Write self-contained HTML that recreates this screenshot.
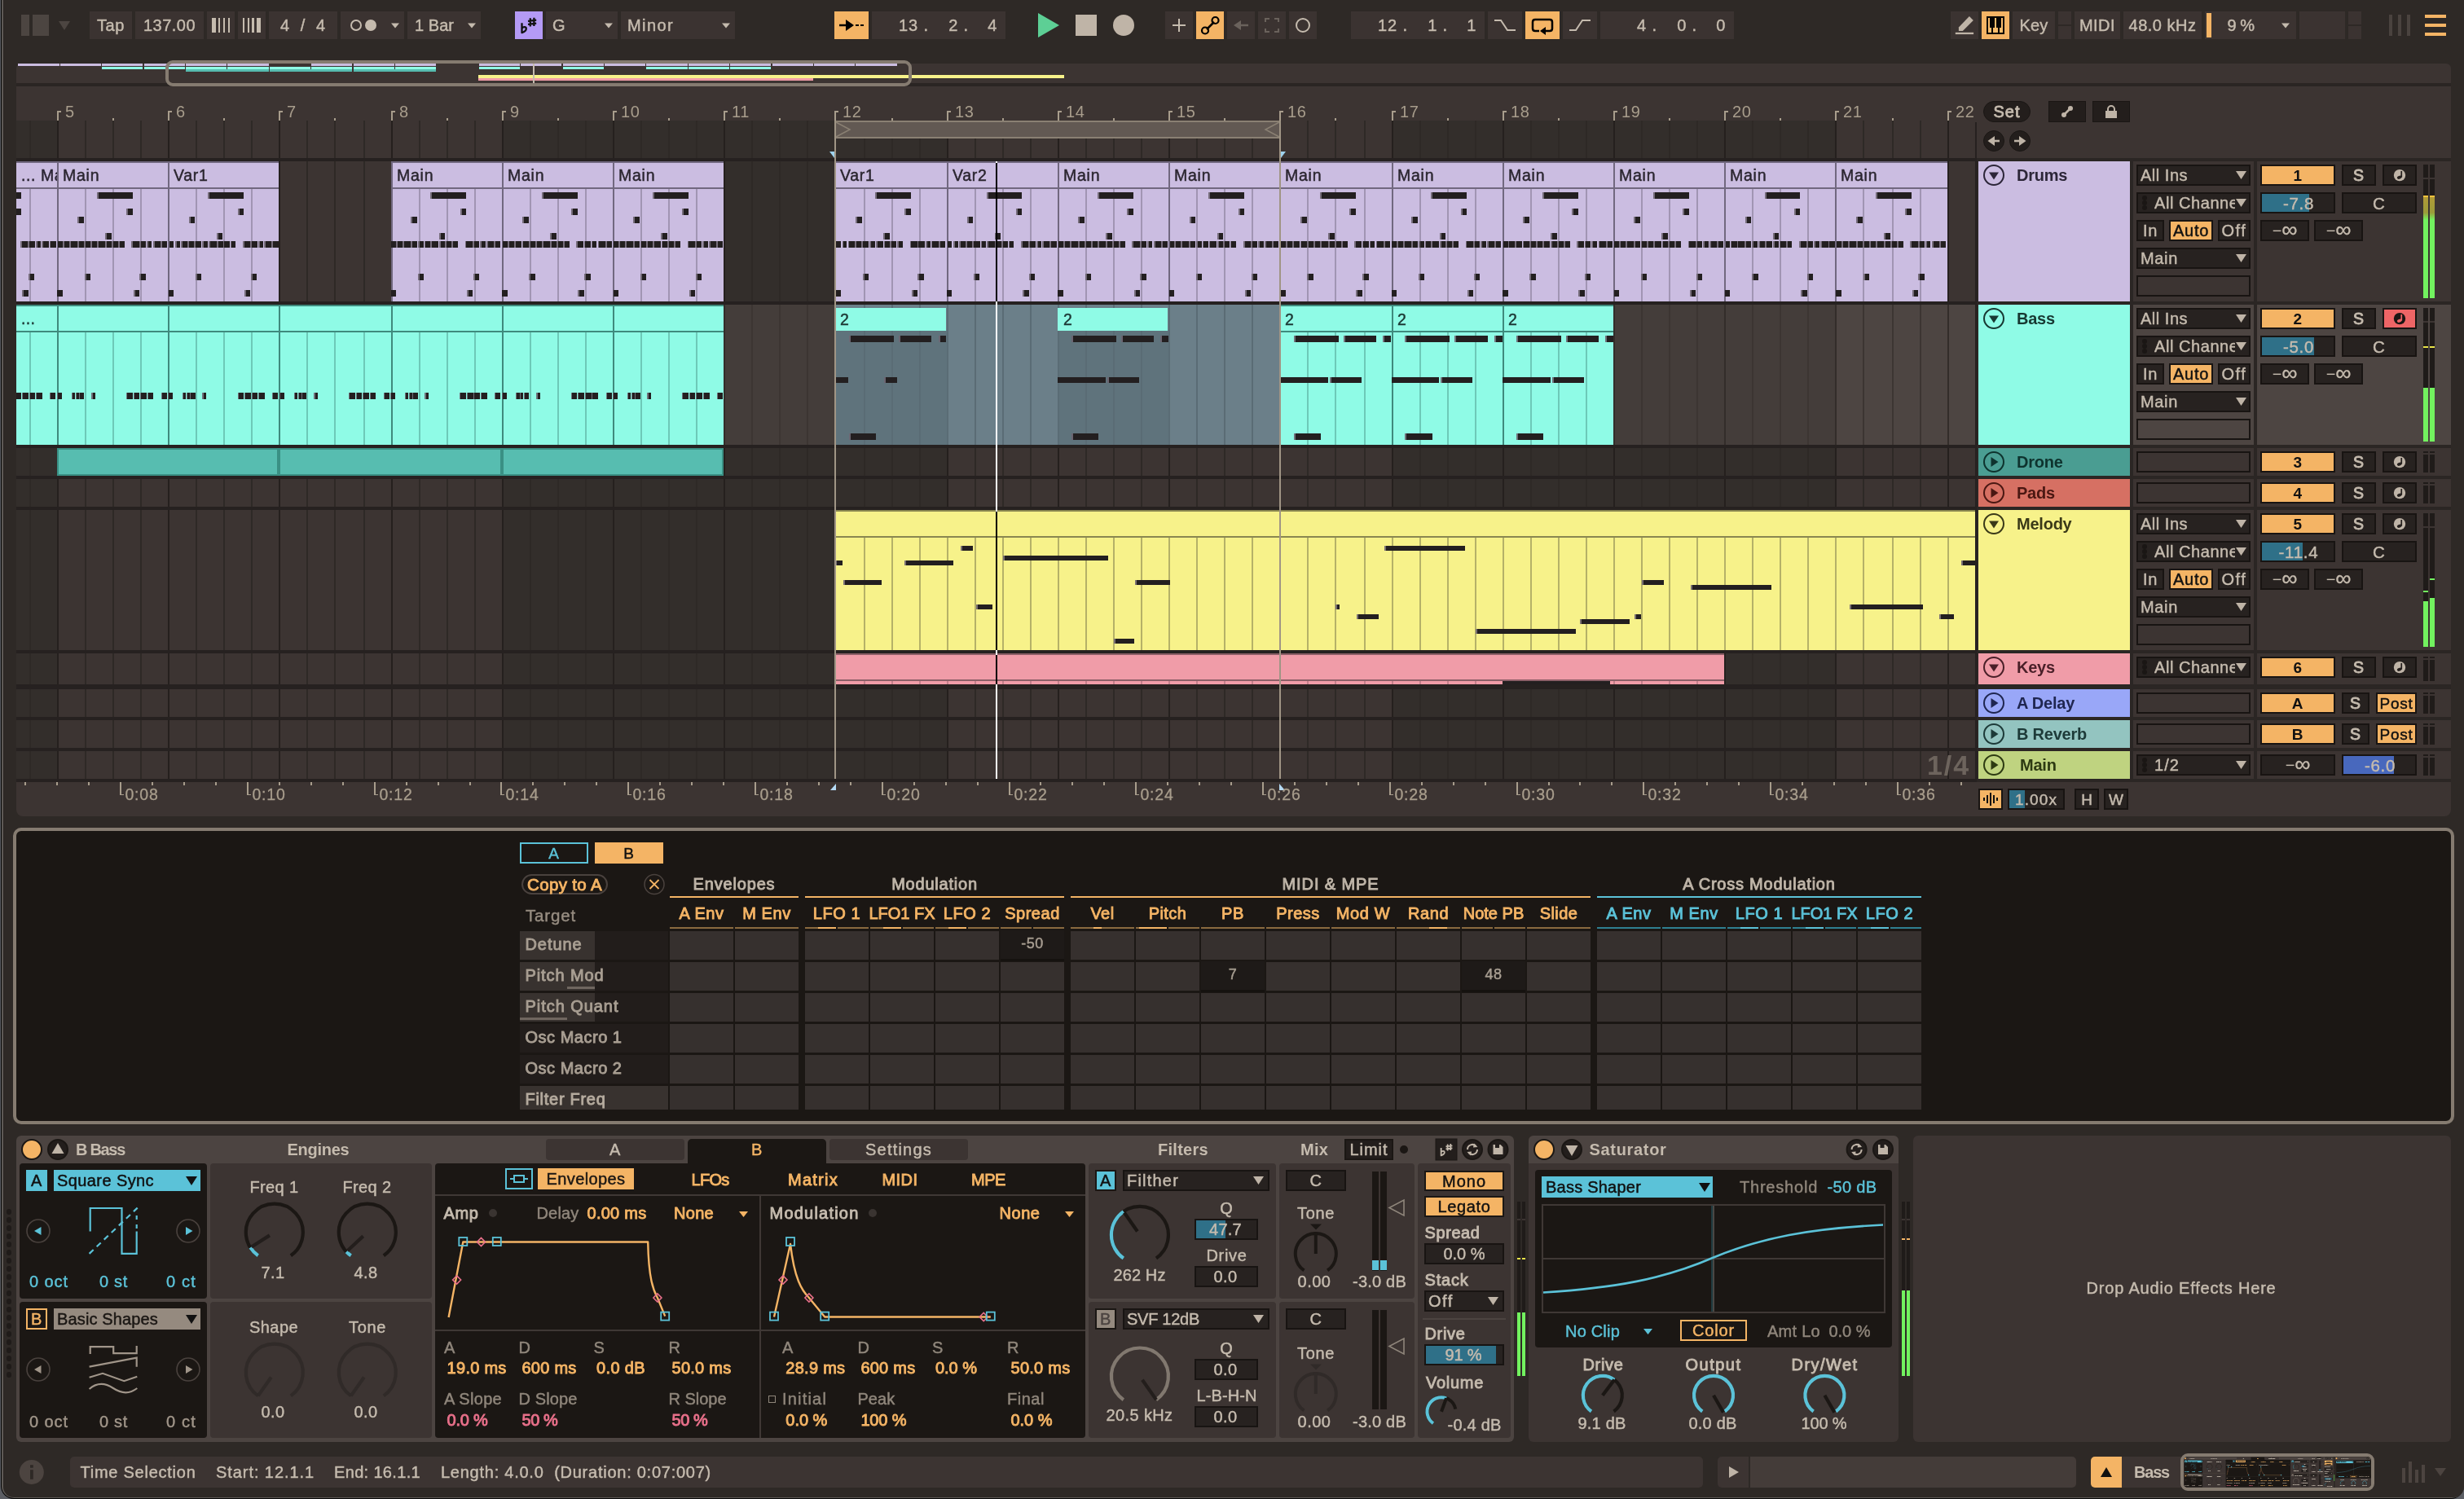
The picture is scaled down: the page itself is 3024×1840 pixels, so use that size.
<!DOCTYPE html><html><head><meta charset="utf-8"><title>Live</title><style>
html,body{margin:0;padding:0;background:#5c5e64;}
body{width:3024px;height:1840px;overflow:hidden;position:relative;font-family:"Liberation Sans",sans-serif;}
div,svg{position:absolute;box-sizing:border-box;}
.t{white-space:pre;}
#r{left:0;top:0;width:3024px;height:1840px;will-change:transform;}
</style></head><body><div id="r">
<div style="left:1px;top:0px;width:3023px;height:1840px;background:#060606;border-radius:0 0 16px 16px;"></div>
<div style="left:2px;top:0px;width:3022px;height:1839px;background:#5e5955;border-radius:0 0 15px 15px;"></div>
<div style="left:4px;top:0px;width:3020px;height:1838px;background:#2e2926;border-radius:0 0 13px 13px;"></div>
<div style="left:26px;top:18px;width:10px;height:26px;background:#4c4541;"></div>
<div style="left:40px;top:18px;width:20px;height:26px;background:#4c4541;"></div>
<svg style="left:70px;top:22px" width="20" height="18" viewBox="0 0 20 18" >
<path d="M2 4 L16 4 L9 15 Z" fill="#4c4541"/>
</svg>
<div style="left:110px;top:14px;width:52px;height:34px;background:#3b3331;"></div>
<div class="t" style="left:119px;top:18px;font-size:20px;line-height:26px;color:#c5bbae;letter-spacing:0.59px;-webkit-text-stroke:0.45px #c5bbae;">Tap</div>
<div style="left:166px;top:14px;width:84px;height:34px;background:#3b3331;"></div>
<div class="t" style="left:176px;top:18px;font-size:20px;line-height:26px;color:#c5bbae;letter-spacing:0.47px;-webkit-text-stroke:0.45px #c5bbae;">137.00</div>
<div style="left:254px;top:14px;width:34px;height:34px;background:#3b3331;"></div>
<svg style="left:254px;top:14px" width="34" height="34" viewBox="0 0 34 34" shape-rendering="crispEdges">
<path d="M6 8h5v18h-5z M14 8h2v18h-2z M20 8h2v18h-2z M26 8h2v18h-2z" fill="#c5bbae"/>
</svg>
<div style="left:292px;top:14px;width:34px;height:34px;background:#3b3331;"></div>
<svg style="left:292px;top:14px" width="34" height="34" viewBox="0 0 34 34" shape-rendering="crispEdges">
<path d="M6 8h2v18h-2z M12 8h2v18h-2z M17 8h3v18h-3z M23 8h5v18h-5z" fill="#c5bbae"/>
</svg>
<div style="left:330px;top:14px;width:84px;height:34px;background:#3b3331;"></div>
<div class="t" style="left:344px;top:18px;font-size:20px;line-height:26px;color:#c5bbae;letter-spacing:0.85px;-webkit-text-stroke:0.45px #c5bbae;">4  /  4</div>
<div style="left:418px;top:14px;width:78px;height:34px;background:#3b3331;"></div>
<svg style="left:418px;top:14px" width="78" height="34" viewBox="0 0 78 34" >
<circle cx="19" cy="17" r="6" fill="none" stroke="#c5bbae" stroke-width="2"/><circle cx="37" cy="17" r="7" fill="#c5bbae"/><path d="M62 14.5h10l-5 6z" fill="#c5bbae"/>
</svg>
<div style="left:500px;top:14px;width:90px;height:34px;background:#3b3331;"></div>
<div class="t" style="left:509px;top:18px;font-size:20px;line-height:26px;color:#c5bbae;letter-spacing:0.04px;-webkit-text-stroke:0.45px #c5bbae;">1 Bar</div>
<svg style="left:570px;top:14px" width="20" height="34" viewBox="0 0 20 34" >
<path d="M4 14.5h10l-5 6z" fill="#c5bbae"/>
</svg>
<div style="left:632px;top:14px;width:34px;height:34px;background:#b49af5;"></div>
<svg style="left:632px;top:14px" width="34" height="34" viewBox="0 0 34 34" >
<g transform="scale(1)" fill="none" stroke="#111" stroke-linecap="butt">
<path d="M8.500 14.200V26.200C11 25.200 14 23 13.800 20.800C13.500 18.400 10 18.800 8.500 20.800" stroke-width="2.300" stroke-linejoin="round"/>
<path d="M18.800 8.200v10.300M23.400 7.800v10.300M16 11.900l10.200-1.200M16 15.900l10.200-1.200" stroke-width="2.300"/>
</g>
</svg>
<div style="left:670px;top:14px;width:88px;height:34px;background:#3b3331;"></div>
<div class="t" style="left:678px;top:18px;font-size:20px;line-height:26px;color:#c5bbae;letter-spacing:-0.56px;-webkit-text-stroke:0.45px #c5bbae;">G</div>
<svg style="left:738px;top:14px" width="20" height="34" viewBox="0 0 20 34" >
<path d="M4 14.5h10l-5 6z" fill="#c5bbae"/>
</svg>
<div style="left:762px;top:14px;width:140px;height:34px;background:#3b3331;"></div>
<div class="t" style="left:770px;top:18px;font-size:20px;line-height:26px;color:#c5bbae;letter-spacing:1.4px;-webkit-text-stroke:0.45px #c5bbae;">Minor</div>
<svg style="left:882px;top:14px" width="20" height="34" viewBox="0 0 20 34" >
<path d="M4 14.5h10l-5 6z" fill="#c5bbae"/>
</svg>
<div style="left:1024px;top:14px;width:42px;height:34px;background:#f4b465;"></div>
<svg style="left:1024px;top:14px" width="42" height="34" viewBox="0 0 42 34" >
<path d="M6 17h16" stroke="#000" stroke-width="2.5"/><path d="M14 10l10 7l-10 7z" fill="#000"/><path d="M26 17h4M32 17h4" stroke="#000" stroke-width="2"/>
</svg>
<div style="left:1070px;top:14px;width:164px;height:34px;background:#3b3331;"></div>
<div class="t" style="left:1212.32px;top:18px;font-size:20px;line-height:26px;color:#c5bbae;letter-spacing:0.56px;-webkit-text-stroke:0.45px #c5bbae;">4</div>
<div class="t" style="left:1182.44px;top:18px;font-size:20px;line-height:26px;color:#c5bbae;-webkit-text-stroke:0.45px #c5bbae;">.</div>
<div class="t" style="left:1164.32px;top:18px;font-size:20px;line-height:26px;color:#c5bbae;letter-spacing:0.56px;-webkit-text-stroke:0.45px #c5bbae;">2</div>
<div class="t" style="left:1133.44px;top:18px;font-size:20px;line-height:26px;color:#c5bbae;-webkit-text-stroke:0.45px #c5bbae;">.</div>
<div class="t" style="left:1102.98px;top:18px;font-size:20px;line-height:26px;color:#c5bbae;letter-spacing:0.89px;-webkit-text-stroke:0.45px #c5bbae;">13</div>
<svg style="left:1270px;top:14px" width="130" height="34" viewBox="0 0 130 34" >
<path d="M4 2 L30 17 L4 32 Z" fill="#5dcf95"/>
<rect x="50" y="4" width="26" height="26" fill="#bfb4a7"/>
<circle cx="109" cy="17" r="13" fill="#bfb4a7"/>
</svg>
<div style="left:1430px;top:14px;width:34px;height:34px;background:#3b3331;"></div>
<svg style="left:1430px;top:14px" width="34" height="34" viewBox="0 0 34 34" >
<path d="M17 9v16M9 17h16" stroke="#c5bbae" stroke-width="2" fill="none"/>
</svg>
<div style="left:1468px;top:14px;width:34px;height:34px;background:#f4b465;"></div>
<svg style="left:1468px;top:14px" width="34" height="34" viewBox="0 0 34 34" >
<path d="M13 22L22 13" stroke="#000" stroke-width="2.5"/><circle cx="11" cy="23.5" r="4" fill="none" stroke="#000" stroke-width="2.2"/><circle cx="23.5" cy="11" r="4" fill="none" stroke="#000" stroke-width="2.2"/>
</svg>
<div style="left:1506px;top:14px;width:34px;height:34px;background:#3b3331;"></div>
<svg style="left:1506px;top:14px" width="34" height="34" viewBox="0 0 34 34" >
<path d="M12 17h14" stroke="#6a625c" stroke-width="2.5"/><path d="M8 17l9-6v12z" fill="#6a625c"/>
</svg>
<div style="left:1544px;top:14px;width:34px;height:34px;background:#3b3331;"></div>
<svg style="left:1544px;top:14px" width="34" height="34" viewBox="0 0 34 34" >
<path d="M9 13v-4h5M20 9h5v4M25 21v4h-5M14 25h-5v-4" stroke="#6a625c" stroke-width="2" fill="none"/>
</svg>
<div style="left:1582px;top:14px;width:34px;height:34px;background:#3b3331;"></div>
<svg style="left:1582px;top:14px" width="34" height="34" viewBox="0 0 34 34" >
<circle cx="17" cy="17" r="8" fill="none" stroke="#c5bbae" stroke-width="2"/>
</svg>
<div style="left:1658px;top:14px;width:164px;height:34px;background:#3b3331;"></div>
<div class="t" style="left:1800.32px;top:18px;font-size:20px;line-height:26px;color:#c5bbae;letter-spacing:0.56px;-webkit-text-stroke:0.45px #c5bbae;">1</div>
<div class="t" style="left:1770.44px;top:18px;font-size:20px;line-height:26px;color:#c5bbae;-webkit-text-stroke:0.45px #c5bbae;">.</div>
<div class="t" style="left:1752.32px;top:18px;font-size:20px;line-height:26px;color:#c5bbae;letter-spacing:0.56px;-webkit-text-stroke:0.45px #c5bbae;">1</div>
<div class="t" style="left:1721.44px;top:18px;font-size:20px;line-height:26px;color:#c5bbae;-webkit-text-stroke:0.45px #c5bbae;">.</div>
<div class="t" style="left:1690.98px;top:18px;font-size:20px;line-height:26px;color:#c5bbae;letter-spacing:0.89px;-webkit-text-stroke:0.45px #c5bbae;">12</div>
<div style="left:1826px;top:14px;width:42px;height:34px;background:#3b3331;"></div>
<svg style="left:1826px;top:14px" width="42" height="34" viewBox="0 0 42 34" >
<path d="M8 11h8l8 12h10" stroke="#c5bbae" stroke-width="2" fill="none"/>
</svg>
<div style="left:1872px;top:14px;width:42px;height:34px;background:#f4b465;"></div>
<svg style="left:1872px;top:14px" width="42" height="34" viewBox="0 0 42 34" >
<path d="M24 24h6q3 0 3-3v-8q0-3-3-3h-18q-3 0-3 3v8q0 3 3 3h5" stroke="#000" stroke-width="2.5" fill="none"/><path d="M25 19v10l-7-5z" fill="#000"/>
</svg>
<div style="left:1918px;top:14px;width:42px;height:34px;background:#3b3331;"></div>
<svg style="left:1918px;top:14px" width="42" height="34" viewBox="0 0 42 34" >
<path d="M8 23h8l8-12h10" stroke="#c5bbae" stroke-width="2" fill="none"/>
</svg>
<div style="left:1964px;top:14px;width:164px;height:34px;background:#3b3331;"></div>
<div class="t" style="left:2106.32px;top:18px;font-size:20px;line-height:26px;color:#c5bbae;letter-spacing:0.56px;-webkit-text-stroke:0.45px #c5bbae;">0</div>
<div class="t" style="left:2076.44px;top:18px;font-size:20px;line-height:26px;color:#c5bbae;-webkit-text-stroke:0.45px #c5bbae;">.</div>
<div class="t" style="left:2058.32px;top:18px;font-size:20px;line-height:26px;color:#c5bbae;letter-spacing:0.56px;-webkit-text-stroke:0.45px #c5bbae;">0</div>
<div class="t" style="left:2027.44px;top:18px;font-size:20px;line-height:26px;color:#c5bbae;-webkit-text-stroke:0.45px #c5bbae;">.</div>
<div class="t" style="left:2008.99px;top:18px;font-size:20px;line-height:26px;color:#c5bbae;letter-spacing:0.89px;-webkit-text-stroke:0.45px #c5bbae;">4</div>
<div style="left:2394px;top:14px;width:34px;height:34px;background:#3b3331;"></div>
<svg style="left:2394px;top:14px" width="34" height="34" viewBox="0 0 34 34" >
<path d="M9.900 19.400L22.900 6L27.800 11L14.800 24H9.900z" fill="#bfb4a7"/><rect x="5.800" y="25.800" width="22.300" height="2.300" fill="#bfb4a7"/>
</svg>
<div style="left:2432px;top:14px;width:34px;height:34px;background:#f4b465;"></div>
<svg style="left:2432px;top:14px" width="34" height="34" viewBox="0 0 34 34" shape-rendering="crispEdges">
<rect x="6" y="6" width="22" height="22" fill="#060504"/><rect x="8" y="8" width="18" height="18" fill="#fbbd6c"/>
<path d="M10 8h6v11.700h-6z M18 8h6v11.700h-6z M12.200 19.700h1.700v6.300h-1.700z M20.200 19.700h1.700v6.300h-1.700z" fill="#060504"/>
</svg>
<div style="left:2470px;top:14px;width:52px;height:34px;background:#3b3331;"></div>
<div class="t" style="left:2478.5px;top:18px;font-size:20px;line-height:26px;color:#c5bbae;letter-spacing:0.18px;-webkit-text-stroke:0.45px #c5bbae;">Key</div>
<div style="left:2526px;top:14px;width:16px;height:16px;background:#3b3331;"></div>
<div style="left:2526px;top:32px;width:16px;height:16px;background:#3b3331;"></div>
<div style="left:2546px;top:14px;width:56px;height:34px;background:#3b3331;"></div>
<div class="t" style="left:2552px;top:18px;font-size:20px;line-height:26px;color:#c5bbae;letter-spacing:0.45px;-webkit-text-stroke:0.45px #c5bbae;">MIDI</div>
<div style="left:2606px;top:14px;width:96px;height:34px;background:#3b3331;"></div>
<div class="t" style="left:2612.5px;top:18px;font-size:20px;line-height:26px;color:#c5bbae;letter-spacing:0.51px;-webkit-text-stroke:0.45px #c5bbae;">48.0 kHz</div>
<div style="left:2706px;top:14px;width:112px;height:34px;background:#3b3331;"></div>
<div style="left:2708px;top:16px;width:6px;height:30px;background:#f4b465;"></div>
<div class="t" style="left:2733.5px;top:18px;font-size:20px;line-height:26px;color:#c5bbae;letter-spacing:-0.49px;-webkit-text-stroke:0.45px #c5bbae;">9 %</div>
<svg style="left:2796px;top:14px" width="20" height="34" viewBox="0 0 20 34" >
<path d="M4 14.5h10l-5 6z" fill="#c5bbae"/>
</svg>
<div style="left:2822px;top:14px;width:56px;height:34px;background:#3b3331;"></div>
<div style="left:2882px;top:14px;width:16px;height:16px;background:#3b3331;"></div>
<div style="left:2882px;top:32px;width:16px;height:16px;background:#3b3331;"></div>
<div style="left:2932px;top:18px;width:4px;height:26px;background:#4a433f;"></div>
<div style="left:2943px;top:18px;width:4px;height:26px;background:#4a433f;"></div>
<div style="left:2954px;top:18px;width:4px;height:26px;background:#4a433f;"></div>
<div style="left:2976px;top:18px;width:26px;height:4px;background:#f4b465;"></div>
<div style="left:2976px;top:29px;width:26px;height:4px;background:#f4b465;"></div>
<div style="left:2976px;top:40px;width:26px;height:4px;background:#f4b465;"></div>
<div style="left:20px;top:78px;width:2988px;height:24px;background:#3c3432;border-radius:6px 6px 0 0;"></div>
<div style="left:20px;top:102px;width:2988px;height:4px;background:#2a2523;"></div>
<svg style="left:0px;top:76px" width="3024" height="32" viewBox="0 0 3024 32" shape-rendering="crispEdges">
<rect x="22.4" y="2" width="50.2" height="3.2" fill="#cbbde1"/>
<rect x="73.8" y="2" width="50.2" height="3.2" fill="#cbbde1"/>
<rect x="125.2" y="2" width="50.2" height="3.2" fill="#cbbde1"/>
<rect x="176.6" y="2" width="50.2" height="3.2" fill="#cbbde1"/>
<rect x="228" y="2" width="50.2" height="3.2" fill="#cbbde1"/>
<rect x="279.4" y="2" width="50.2" height="3.2" fill="#cbbde1"/>
<rect x="382.2" y="2" width="50.2" height="3.2" fill="#cbbde1"/>
<rect x="433.6" y="2" width="50.2" height="3.2" fill="#cbbde1"/>
<rect x="485" y="2" width="50.2" height="3.2" fill="#cbbde1"/>
<rect x="587.8" y="2" width="50.2" height="3.2" fill="#cbbde1"/>
<rect x="639.2" y="2" width="50.2" height="3.2" fill="#cbbde1"/>
<rect x="690.6" y="2" width="50.2" height="3.2" fill="#cbbde1"/>
<rect x="742" y="2" width="50.2" height="3.2" fill="#cbbde1"/>
<rect x="793.4" y="2" width="50.2" height="3.2" fill="#cbbde1"/>
<rect x="844.8" y="2" width="50.2" height="3.2" fill="#cbbde1"/>
<rect x="896.2" y="2" width="50.2" height="3.2" fill="#cbbde1"/>
<rect x="947.6" y="2" width="50.2" height="3.2" fill="#cbbde1"/>
<rect x="999" y="2" width="50.2" height="3.2" fill="#cbbde1"/>
<rect x="1050.4" y="2" width="50.2" height="3.2" fill="#cbbde1"/>
<rect x="125.2" y="6" width="50.2" height="3" fill="#8ffbe6"/>
<rect x="176.6" y="6" width="50.2" height="3" fill="#8ffbe6"/>
<rect x="228" y="6" width="50.2" height="3" fill="#8ffbe6"/>
<rect x="279.4" y="6" width="50.2" height="3" fill="#8ffbe6"/>
<rect x="330.8" y="6" width="50.2" height="3" fill="#8ffbe6"/>
<rect x="382.2" y="6" width="50.2" height="3" fill="#8ffbe6"/>
<rect x="433.6" y="6" width="50.2" height="3" fill="#8ffbe6"/>
<rect x="485" y="6" width="50.2" height="3" fill="#8ffbe6"/>
<rect x="587.8" y="6" width="50.2" height="3" fill="#8ffbe6"/>
<rect x="690.6" y="6" width="50.2" height="3" fill="#8ffbe6"/>
<rect x="793.4" y="6" width="50.2" height="3" fill="#8ffbe6"/>
<rect x="844.8" y="6" width="50.2" height="3" fill="#8ffbe6"/>
<rect x="896.2" y="6" width="50.2" height="3" fill="#8ffbe6"/>
<rect x="228" y="9" width="101.6" height="3" fill="#57bdb0"/>
<rect x="330.8" y="9" width="101.6" height="3" fill="#57bdb0"/>
<rect x="433.6" y="9" width="101.6" height="3" fill="#57bdb0"/>
<rect x="587" y="16" width="719" height="3.6" fill="#f7f28a"/>
<rect x="587" y="19.6" width="411.2" height="3" fill="#f09ca8"/>
</svg>
<div style="left:654px;top:78px;width:2px;height:24px;background:#c5bbae;"></div>
<div style="left:203px;top:74px;width:916px;height:32px;border:4px solid #857b70;border-radius:9px;"></div>
<div style="left:20px;top:106px;width:2988px;height:896px;background:#3c3432;border-radius:0 0 8px 8px;"></div>
<svg style="left:0px;top:106px" width="2430" height="44" viewBox="0 0 2430 44" shape-rendering="crispEdges">
<path d="M70 30h5v2h-3v10h-2zM138 39h2v3h-2zM206 30h5v2h-3v10h-2zM274 39h2v3h-2zM342 30h5v2h-3v10h-2zM410 39h2v3h-2zM480 30h5v2h-3v10h-2zM548 39h2v3h-2zM616 30h5v2h-3v10h-2zM684 39h2v3h-2zM752 30h5v2h-3v10h-2zM820 39h2v3h-2zM888 30h5v2h-3v10h-2zM956 39h2v3h-2zM1024 30h5v2h-3v10h-2zM1094 39h2v3h-2zM1162 30h5v2h-3v10h-2zM1230 39h2v3h-2zM1298 30h5v2h-3v10h-2zM1366 39h2v3h-2zM1434 30h5v2h-3v10h-2zM1502 39h2v3h-2zM1570 30h5v2h-3v10h-2zM1638 39h2v3h-2zM1708 30h5v2h-3v10h-2zM1776 39h2v3h-2zM1844 30h5v2h-3v10h-2zM1912 39h2v3h-2zM1980 30h5v2h-3v10h-2zM2048 39h2v3h-2zM2116 30h5v2h-3v10h-2zM2184 39h2v3h-2zM2252 30h5v2h-3v10h-2zM2322 39h2v3h-2zM2390 30h5v2h-3v10h-2z" fill="#a89d8c"/>
</svg>
<div class="t" style="left:80px;top:124px;font-size:20px;line-height:26px;color:#a89d8c;letter-spacing:0.67px;">5</div>
<div class="t" style="left:216px;top:124px;font-size:20px;line-height:26px;color:#a89d8c;letter-spacing:0.67px;">6</div>
<div class="t" style="left:352px;top:124px;font-size:20px;line-height:26px;color:#a89d8c;letter-spacing:0.67px;">7</div>
<div class="t" style="left:490px;top:124px;font-size:20px;line-height:26px;color:#a89d8c;letter-spacing:0.67px;">8</div>
<div class="t" style="left:626px;top:124px;font-size:20px;line-height:26px;color:#a89d8c;letter-spacing:0.67px;">9</div>
<div class="t" style="left:762px;top:124px;font-size:20px;line-height:26px;color:#a89d8c;letter-spacing:0.67px;">10</div>
<div class="t" style="left:898px;top:124px;font-size:20px;line-height:26px;color:#a89d8c;letter-spacing:0.62px;">11</div>
<div class="t" style="left:1034px;top:124px;font-size:20px;line-height:26px;color:#a89d8c;letter-spacing:0.67px;">12</div>
<div class="t" style="left:1172px;top:124px;font-size:20px;line-height:26px;color:#a89d8c;letter-spacing:0.67px;">13</div>
<div class="t" style="left:1308px;top:124px;font-size:20px;line-height:26px;color:#a89d8c;letter-spacing:0.67px;">14</div>
<div class="t" style="left:1444px;top:124px;font-size:20px;line-height:26px;color:#a89d8c;letter-spacing:0.67px;">15</div>
<div class="t" style="left:1580px;top:124px;font-size:20px;line-height:26px;color:#a89d8c;letter-spacing:0.67px;">16</div>
<div class="t" style="left:1718px;top:124px;font-size:20px;line-height:26px;color:#a89d8c;letter-spacing:0.67px;">17</div>
<div class="t" style="left:1854px;top:124px;font-size:20px;line-height:26px;color:#a89d8c;letter-spacing:0.67px;">18</div>
<div class="t" style="left:1990px;top:124px;font-size:20px;line-height:26px;color:#a89d8c;letter-spacing:0.67px;">19</div>
<div class="t" style="left:2126px;top:124px;font-size:20px;line-height:26px;color:#a89d8c;letter-spacing:0.67px;">20</div>
<div class="t" style="left:2262px;top:124px;font-size:20px;line-height:26px;color:#a89d8c;letter-spacing:0.67px;">21</div>
<div class="t" style="left:2400px;top:124px;font-size:20px;line-height:26px;color:#a89d8c;letter-spacing:0.67px;">22</div>
<div style="left:20px;top:194px;width:2406px;height:766px;background:#262120;"></div>
<div style="left:2424px;top:150px;width:2px;height:810px;background:#262120;"></div>
<svg style="left:0px;top:0px" width="2430" height="1000" viewBox="0 0 2430 1000" shape-rendering="crispEdges">
<rect x="20" y="148" width="50" height="46" fill="#332e2b"/>
<rect x="20" y="198" width="50" height="172" fill="#332e2b"/>
<rect x="20" y="374" width="50" height="172" fill="#443d3a"/>
<rect x="20" y="550" width="50" height="34" fill="#332e2b"/>
<rect x="20" y="588" width="50" height="34" fill="#332e2b"/>
<rect x="20" y="626" width="50" height="172" fill="#332e2b"/>
<rect x="20" y="802" width="50" height="38" fill="#332e2b"/>
<rect x="20" y="846" width="50" height="34" fill="#332e2b"/>
<rect x="20" y="884" width="50" height="34" fill="#332e2b"/>
<rect x="20" y="922" width="50" height="34" fill="#332e2b"/>
<rect x="70" y="148" width="546" height="46" fill="#3c3432"/>
<rect x="70" y="198" width="546" height="172" fill="#3c3432"/>
<rect x="70" y="374" width="546" height="172" fill="#4d4542"/>
<rect x="70" y="550" width="546" height="34" fill="#3c3432"/>
<rect x="70" y="588" width="546" height="34" fill="#3c3432"/>
<rect x="70" y="626" width="546" height="172" fill="#3c3432"/>
<rect x="70" y="802" width="546" height="38" fill="#3c3432"/>
<rect x="70" y="846" width="546" height="34" fill="#3c3432"/>
<rect x="70" y="884" width="546" height="34" fill="#3c3432"/>
<rect x="70" y="922" width="546" height="34" fill="#3c3432"/>
<rect x="616" y="148" width="546" height="46" fill="#332e2b"/>
<rect x="616" y="198" width="546" height="172" fill="#332e2b"/>
<rect x="616" y="374" width="546" height="172" fill="#443d3a"/>
<rect x="616" y="550" width="546" height="34" fill="#332e2b"/>
<rect x="616" y="588" width="546" height="34" fill="#332e2b"/>
<rect x="616" y="626" width="546" height="172" fill="#332e2b"/>
<rect x="616" y="802" width="546" height="38" fill="#332e2b"/>
<rect x="616" y="846" width="546" height="34" fill="#332e2b"/>
<rect x="616" y="884" width="546" height="34" fill="#332e2b"/>
<rect x="616" y="922" width="546" height="34" fill="#332e2b"/>
<rect x="1162" y="148" width="546" height="46" fill="#3c3432"/>
<rect x="1162" y="198" width="546" height="172" fill="#3c3432"/>
<rect x="1162" y="374" width="546" height="172" fill="#4d4542"/>
<rect x="1162" y="550" width="546" height="34" fill="#3c3432"/>
<rect x="1162" y="588" width="546" height="34" fill="#3c3432"/>
<rect x="1162" y="626" width="546" height="172" fill="#3c3432"/>
<rect x="1162" y="802" width="546" height="38" fill="#3c3432"/>
<rect x="1162" y="846" width="546" height="34" fill="#3c3432"/>
<rect x="1162" y="884" width="546" height="34" fill="#3c3432"/>
<rect x="1162" y="922" width="546" height="34" fill="#3c3432"/>
<rect x="1708" y="148" width="544" height="46" fill="#332e2b"/>
<rect x="1708" y="198" width="544" height="172" fill="#332e2b"/>
<rect x="1708" y="374" width="544" height="172" fill="#443d3a"/>
<rect x="1708" y="550" width="544" height="34" fill="#332e2b"/>
<rect x="1708" y="588" width="544" height="34" fill="#332e2b"/>
<rect x="1708" y="626" width="544" height="172" fill="#332e2b"/>
<rect x="1708" y="802" width="544" height="38" fill="#332e2b"/>
<rect x="1708" y="846" width="544" height="34" fill="#332e2b"/>
<rect x="1708" y="884" width="544" height="34" fill="#332e2b"/>
<rect x="1708" y="922" width="544" height="34" fill="#332e2b"/>
<rect x="2252" y="148" width="172" height="46" fill="#3c3432"/>
<rect x="2252" y="198" width="172" height="172" fill="#3c3432"/>
<rect x="2252" y="374" width="172" height="172" fill="#4d4542"/>
<rect x="2252" y="550" width="172" height="34" fill="#3c3432"/>
<rect x="2252" y="588" width="172" height="34" fill="#3c3432"/>
<rect x="2252" y="626" width="172" height="172" fill="#3c3432"/>
<rect x="2252" y="802" width="172" height="38" fill="#3c3432"/>
<rect x="2252" y="846" width="172" height="34" fill="#3c3432"/>
<rect x="2252" y="884" width="172" height="34" fill="#3c3432"/>
<rect x="2252" y="922" width="172" height="34" fill="#3c3432"/>
<path d="M70 148h2v46h-2zM70 198h2v172h-2zM70 550h2v34h-2zM70 588h2v34h-2zM70 626h2v172h-2zM70 802h2v38h-2zM70 846h2v34h-2zM70 884h2v34h-2zM70 922h2v34h-2zM206 148h2v46h-2zM206 198h2v172h-2zM206 550h2v34h-2zM206 588h2v34h-2zM206 626h2v172h-2zM206 802h2v38h-2zM206 846h2v34h-2zM206 884h2v34h-2zM206 922h2v34h-2zM342 148h2v46h-2zM342 198h2v172h-2zM342 550h2v34h-2zM342 588h2v34h-2zM342 626h2v172h-2zM342 802h2v38h-2zM342 846h2v34h-2zM342 884h2v34h-2zM342 922h2v34h-2zM480 148h2v46h-2zM480 198h2v172h-2zM480 550h2v34h-2zM480 588h2v34h-2zM480 626h2v172h-2zM480 802h2v38h-2zM480 846h2v34h-2zM480 884h2v34h-2zM480 922h2v34h-2zM616 148h2v46h-2zM616 198h2v172h-2zM616 550h2v34h-2zM616 588h2v34h-2zM616 626h2v172h-2zM616 802h2v38h-2zM616 846h2v34h-2zM616 884h2v34h-2zM616 922h2v34h-2zM752 148h2v46h-2zM752 198h2v172h-2zM752 550h2v34h-2zM752 588h2v34h-2zM752 626h2v172h-2zM752 802h2v38h-2zM752 846h2v34h-2zM752 884h2v34h-2zM752 922h2v34h-2zM888 148h2v46h-2zM888 198h2v172h-2zM888 550h2v34h-2zM888 588h2v34h-2zM888 626h2v172h-2zM888 802h2v38h-2zM888 846h2v34h-2zM888 884h2v34h-2zM888 922h2v34h-2zM1024 148h2v46h-2zM1024 198h2v172h-2zM1024 550h2v34h-2zM1024 588h2v34h-2zM1024 626h2v172h-2zM1024 802h2v38h-2zM1024 846h2v34h-2zM1024 884h2v34h-2zM1024 922h2v34h-2zM1162 148h2v46h-2zM1162 198h2v172h-2zM1162 550h2v34h-2zM1162 588h2v34h-2zM1162 626h2v172h-2zM1162 802h2v38h-2zM1162 846h2v34h-2zM1162 884h2v34h-2zM1162 922h2v34h-2zM1298 148h2v46h-2zM1298 198h2v172h-2zM1298 550h2v34h-2zM1298 588h2v34h-2zM1298 626h2v172h-2zM1298 802h2v38h-2zM1298 846h2v34h-2zM1298 884h2v34h-2zM1298 922h2v34h-2zM1434 148h2v46h-2zM1434 198h2v172h-2zM1434 550h2v34h-2zM1434 588h2v34h-2zM1434 626h2v172h-2zM1434 802h2v38h-2zM1434 846h2v34h-2zM1434 884h2v34h-2zM1434 922h2v34h-2zM1570 148h2v46h-2zM1570 198h2v172h-2zM1570 550h2v34h-2zM1570 588h2v34h-2zM1570 626h2v172h-2zM1570 802h2v38h-2zM1570 846h2v34h-2zM1570 884h2v34h-2zM1570 922h2v34h-2zM1708 148h2v46h-2zM1708 198h2v172h-2zM1708 550h2v34h-2zM1708 588h2v34h-2zM1708 626h2v172h-2zM1708 802h2v38h-2zM1708 846h2v34h-2zM1708 884h2v34h-2zM1708 922h2v34h-2zM1844 148h2v46h-2zM1844 198h2v172h-2zM1844 550h2v34h-2zM1844 588h2v34h-2zM1844 626h2v172h-2zM1844 802h2v38h-2zM1844 846h2v34h-2zM1844 884h2v34h-2zM1844 922h2v34h-2zM1980 148h2v46h-2zM1980 198h2v172h-2zM1980 550h2v34h-2zM1980 588h2v34h-2zM1980 626h2v172h-2zM1980 802h2v38h-2zM1980 846h2v34h-2zM1980 884h2v34h-2zM1980 922h2v34h-2zM2116 148h2v46h-2zM2116 198h2v172h-2zM2116 550h2v34h-2zM2116 588h2v34h-2zM2116 626h2v172h-2zM2116 802h2v38h-2zM2116 846h2v34h-2zM2116 884h2v34h-2zM2116 922h2v34h-2zM2252 148h2v46h-2zM2252 198h2v172h-2zM2252 550h2v34h-2zM2252 588h2v34h-2zM2252 626h2v172h-2zM2252 802h2v38h-2zM2252 846h2v34h-2zM2252 884h2v34h-2zM2252 922h2v34h-2zM2390 148h2v46h-2zM2390 198h2v172h-2zM2390 550h2v34h-2zM2390 588h2v34h-2zM2390 626h2v172h-2zM2390 802h2v38h-2zM2390 846h2v34h-2zM2390 884h2v34h-2zM2390 922h2v34h-2z" fill="#25201e"/>
<path d="M36 148h2v46h-2zM36 198h2v172h-2zM36 550h2v34h-2zM36 588h2v34h-2zM36 626h2v172h-2zM36 802h2v38h-2zM36 846h2v34h-2zM36 884h2v34h-2zM36 922h2v34h-2zM104 148h2v46h-2zM104 198h2v172h-2zM104 550h2v34h-2zM104 588h2v34h-2zM104 626h2v172h-2zM104 802h2v38h-2zM104 846h2v34h-2zM104 884h2v34h-2zM104 922h2v34h-2zM138 148h2v46h-2zM138 198h2v172h-2zM138 550h2v34h-2zM138 588h2v34h-2zM138 626h2v172h-2zM138 802h2v38h-2zM138 846h2v34h-2zM138 884h2v34h-2zM138 922h2v34h-2zM172 148h2v46h-2zM172 198h2v172h-2zM172 550h2v34h-2zM172 588h2v34h-2zM172 626h2v172h-2zM172 802h2v38h-2zM172 846h2v34h-2zM172 884h2v34h-2zM172 922h2v34h-2zM240 148h2v46h-2zM240 198h2v172h-2zM240 550h2v34h-2zM240 588h2v34h-2zM240 626h2v172h-2zM240 802h2v38h-2zM240 846h2v34h-2zM240 884h2v34h-2zM240 922h2v34h-2zM274 148h2v46h-2zM274 198h2v172h-2zM274 550h2v34h-2zM274 588h2v34h-2zM274 626h2v172h-2zM274 802h2v38h-2zM274 846h2v34h-2zM274 884h2v34h-2zM274 922h2v34h-2zM308 148h2v46h-2zM308 198h2v172h-2zM308 550h2v34h-2zM308 588h2v34h-2zM308 626h2v172h-2zM308 802h2v38h-2zM308 846h2v34h-2zM308 884h2v34h-2zM308 922h2v34h-2zM376 148h2v46h-2zM376 198h2v172h-2zM376 550h2v34h-2zM376 588h2v34h-2zM376 626h2v172h-2zM376 802h2v38h-2zM376 846h2v34h-2zM376 884h2v34h-2zM376 922h2v34h-2zM410 148h2v46h-2zM410 198h2v172h-2zM410 550h2v34h-2zM410 588h2v34h-2zM410 626h2v172h-2zM410 802h2v38h-2zM410 846h2v34h-2zM410 884h2v34h-2zM410 922h2v34h-2zM446 148h2v46h-2zM446 198h2v172h-2zM446 550h2v34h-2zM446 588h2v34h-2zM446 626h2v172h-2zM446 802h2v38h-2zM446 846h2v34h-2zM446 884h2v34h-2zM446 922h2v34h-2zM514 148h2v46h-2zM514 198h2v172h-2zM514 550h2v34h-2zM514 588h2v34h-2zM514 626h2v172h-2zM514 802h2v38h-2zM514 846h2v34h-2zM514 884h2v34h-2zM514 922h2v34h-2zM548 148h2v46h-2zM548 198h2v172h-2zM548 550h2v34h-2zM548 588h2v34h-2zM548 626h2v172h-2zM548 802h2v38h-2zM548 846h2v34h-2zM548 884h2v34h-2zM548 922h2v34h-2zM582 148h2v46h-2zM582 198h2v172h-2zM582 550h2v34h-2zM582 588h2v34h-2zM582 626h2v172h-2zM582 802h2v38h-2zM582 846h2v34h-2zM582 884h2v34h-2zM582 922h2v34h-2zM650 148h2v46h-2zM650 198h2v172h-2zM650 550h2v34h-2zM650 588h2v34h-2zM650 626h2v172h-2zM650 802h2v38h-2zM650 846h2v34h-2zM650 884h2v34h-2zM650 922h2v34h-2zM684 148h2v46h-2zM684 198h2v172h-2zM684 550h2v34h-2zM684 588h2v34h-2zM684 626h2v172h-2zM684 802h2v38h-2zM684 846h2v34h-2zM684 884h2v34h-2zM684 922h2v34h-2zM718 148h2v46h-2zM718 198h2v172h-2zM718 550h2v34h-2zM718 588h2v34h-2zM718 626h2v172h-2zM718 802h2v38h-2zM718 846h2v34h-2zM718 884h2v34h-2zM718 922h2v34h-2zM786 148h2v46h-2zM786 198h2v172h-2zM786 550h2v34h-2zM786 588h2v34h-2zM786 626h2v172h-2zM786 802h2v38h-2zM786 846h2v34h-2zM786 884h2v34h-2zM786 922h2v34h-2zM820 148h2v46h-2zM820 198h2v172h-2zM820 550h2v34h-2zM820 588h2v34h-2zM820 626h2v172h-2zM820 802h2v38h-2zM820 846h2v34h-2zM820 884h2v34h-2zM820 922h2v34h-2zM854 148h2v46h-2zM854 198h2v172h-2zM854 550h2v34h-2zM854 588h2v34h-2zM854 626h2v172h-2zM854 802h2v38h-2zM854 846h2v34h-2zM854 884h2v34h-2zM854 922h2v34h-2zM922 148h2v46h-2zM922 198h2v172h-2zM922 550h2v34h-2zM922 588h2v34h-2zM922 626h2v172h-2zM922 802h2v38h-2zM922 846h2v34h-2zM922 884h2v34h-2zM922 922h2v34h-2zM956 148h2v46h-2zM956 198h2v172h-2zM956 550h2v34h-2zM956 588h2v34h-2zM956 626h2v172h-2zM956 802h2v38h-2zM956 846h2v34h-2zM956 884h2v34h-2zM956 922h2v34h-2zM990 148h2v46h-2zM990 198h2v172h-2zM990 550h2v34h-2zM990 588h2v34h-2zM990 626h2v172h-2zM990 802h2v38h-2zM990 846h2v34h-2zM990 884h2v34h-2zM990 922h2v34h-2zM1060 148h2v46h-2zM1060 198h2v172h-2zM1060 550h2v34h-2zM1060 588h2v34h-2zM1060 626h2v172h-2zM1060 802h2v38h-2zM1060 846h2v34h-2zM1060 884h2v34h-2zM1060 922h2v34h-2zM1094 148h2v46h-2zM1094 198h2v172h-2zM1094 550h2v34h-2zM1094 588h2v34h-2zM1094 626h2v172h-2zM1094 802h2v38h-2zM1094 846h2v34h-2zM1094 884h2v34h-2zM1094 922h2v34h-2zM1128 148h2v46h-2zM1128 198h2v172h-2zM1128 550h2v34h-2zM1128 588h2v34h-2zM1128 626h2v172h-2zM1128 802h2v38h-2zM1128 846h2v34h-2zM1128 884h2v34h-2zM1128 922h2v34h-2zM1196 148h2v46h-2zM1196 198h2v172h-2zM1196 550h2v34h-2zM1196 588h2v34h-2zM1196 626h2v172h-2zM1196 802h2v38h-2zM1196 846h2v34h-2zM1196 884h2v34h-2zM1196 922h2v34h-2zM1230 148h2v46h-2zM1230 198h2v172h-2zM1230 550h2v34h-2zM1230 588h2v34h-2zM1230 626h2v172h-2zM1230 802h2v38h-2zM1230 846h2v34h-2zM1230 884h2v34h-2zM1230 922h2v34h-2zM1264 148h2v46h-2zM1264 198h2v172h-2zM1264 550h2v34h-2zM1264 588h2v34h-2zM1264 626h2v172h-2zM1264 802h2v38h-2zM1264 846h2v34h-2zM1264 884h2v34h-2zM1264 922h2v34h-2zM1332 148h2v46h-2zM1332 198h2v172h-2zM1332 550h2v34h-2zM1332 588h2v34h-2zM1332 626h2v172h-2zM1332 802h2v38h-2zM1332 846h2v34h-2zM1332 884h2v34h-2zM1332 922h2v34h-2zM1366 148h2v46h-2zM1366 198h2v172h-2zM1366 550h2v34h-2zM1366 588h2v34h-2zM1366 626h2v172h-2zM1366 802h2v38h-2zM1366 846h2v34h-2zM1366 884h2v34h-2zM1366 922h2v34h-2zM1400 148h2v46h-2zM1400 198h2v172h-2zM1400 550h2v34h-2zM1400 588h2v34h-2zM1400 626h2v172h-2zM1400 802h2v38h-2zM1400 846h2v34h-2zM1400 884h2v34h-2zM1400 922h2v34h-2zM1468 148h2v46h-2zM1468 198h2v172h-2zM1468 550h2v34h-2zM1468 588h2v34h-2zM1468 626h2v172h-2zM1468 802h2v38h-2zM1468 846h2v34h-2zM1468 884h2v34h-2zM1468 922h2v34h-2zM1502 148h2v46h-2zM1502 198h2v172h-2zM1502 550h2v34h-2zM1502 588h2v34h-2zM1502 626h2v172h-2zM1502 802h2v38h-2zM1502 846h2v34h-2zM1502 884h2v34h-2zM1502 922h2v34h-2zM1536 148h2v46h-2zM1536 198h2v172h-2zM1536 550h2v34h-2zM1536 588h2v34h-2zM1536 626h2v172h-2zM1536 802h2v38h-2zM1536 846h2v34h-2zM1536 884h2v34h-2zM1536 922h2v34h-2zM1604 148h2v46h-2zM1604 198h2v172h-2zM1604 550h2v34h-2zM1604 588h2v34h-2zM1604 626h2v172h-2zM1604 802h2v38h-2zM1604 846h2v34h-2zM1604 884h2v34h-2zM1604 922h2v34h-2zM1638 148h2v46h-2zM1638 198h2v172h-2zM1638 550h2v34h-2zM1638 588h2v34h-2zM1638 626h2v172h-2zM1638 802h2v38h-2zM1638 846h2v34h-2zM1638 884h2v34h-2zM1638 922h2v34h-2zM1674 148h2v46h-2zM1674 198h2v172h-2zM1674 550h2v34h-2zM1674 588h2v34h-2zM1674 626h2v172h-2zM1674 802h2v38h-2zM1674 846h2v34h-2zM1674 884h2v34h-2zM1674 922h2v34h-2zM1742 148h2v46h-2zM1742 198h2v172h-2zM1742 550h2v34h-2zM1742 588h2v34h-2zM1742 626h2v172h-2zM1742 802h2v38h-2zM1742 846h2v34h-2zM1742 884h2v34h-2zM1742 922h2v34h-2zM1776 148h2v46h-2zM1776 198h2v172h-2zM1776 550h2v34h-2zM1776 588h2v34h-2zM1776 626h2v172h-2zM1776 802h2v38h-2zM1776 846h2v34h-2zM1776 884h2v34h-2zM1776 922h2v34h-2zM1810 148h2v46h-2zM1810 198h2v172h-2zM1810 550h2v34h-2zM1810 588h2v34h-2zM1810 626h2v172h-2zM1810 802h2v38h-2zM1810 846h2v34h-2zM1810 884h2v34h-2zM1810 922h2v34h-2zM1878 148h2v46h-2zM1878 198h2v172h-2zM1878 550h2v34h-2zM1878 588h2v34h-2zM1878 626h2v172h-2zM1878 802h2v38h-2zM1878 846h2v34h-2zM1878 884h2v34h-2zM1878 922h2v34h-2zM1912 148h2v46h-2zM1912 198h2v172h-2zM1912 550h2v34h-2zM1912 588h2v34h-2zM1912 626h2v172h-2zM1912 802h2v38h-2zM1912 846h2v34h-2zM1912 884h2v34h-2zM1912 922h2v34h-2zM1946 148h2v46h-2zM1946 198h2v172h-2zM1946 550h2v34h-2zM1946 588h2v34h-2zM1946 626h2v172h-2zM1946 802h2v38h-2zM1946 846h2v34h-2zM1946 884h2v34h-2zM1946 922h2v34h-2zM2014 148h2v46h-2zM2014 198h2v172h-2zM2014 550h2v34h-2zM2014 588h2v34h-2zM2014 626h2v172h-2zM2014 802h2v38h-2zM2014 846h2v34h-2zM2014 884h2v34h-2zM2014 922h2v34h-2zM2048 148h2v46h-2zM2048 198h2v172h-2zM2048 550h2v34h-2zM2048 588h2v34h-2zM2048 626h2v172h-2zM2048 802h2v38h-2zM2048 846h2v34h-2zM2048 884h2v34h-2zM2048 922h2v34h-2zM2082 148h2v46h-2zM2082 198h2v172h-2zM2082 550h2v34h-2zM2082 588h2v34h-2zM2082 626h2v172h-2zM2082 802h2v38h-2zM2082 846h2v34h-2zM2082 884h2v34h-2zM2082 922h2v34h-2zM2150 148h2v46h-2zM2150 198h2v172h-2zM2150 550h2v34h-2zM2150 588h2v34h-2zM2150 626h2v172h-2zM2150 802h2v38h-2zM2150 846h2v34h-2zM2150 884h2v34h-2zM2150 922h2v34h-2zM2184 148h2v46h-2zM2184 198h2v172h-2zM2184 550h2v34h-2zM2184 588h2v34h-2zM2184 626h2v172h-2zM2184 802h2v38h-2zM2184 846h2v34h-2zM2184 884h2v34h-2zM2184 922h2v34h-2zM2218 148h2v46h-2zM2218 198h2v172h-2zM2218 550h2v34h-2zM2218 588h2v34h-2zM2218 626h2v172h-2zM2218 802h2v38h-2zM2218 846h2v34h-2zM2218 884h2v34h-2zM2218 922h2v34h-2zM2286 148h2v46h-2zM2286 198h2v172h-2zM2286 550h2v34h-2zM2286 588h2v34h-2zM2286 626h2v172h-2zM2286 802h2v38h-2zM2286 846h2v34h-2zM2286 884h2v34h-2zM2286 922h2v34h-2zM2322 148h2v46h-2zM2322 198h2v172h-2zM2322 550h2v34h-2zM2322 588h2v34h-2zM2322 626h2v172h-2zM2322 802h2v38h-2zM2322 846h2v34h-2zM2322 884h2v34h-2zM2322 922h2v34h-2zM2356 148h2v46h-2zM2356 198h2v172h-2zM2356 550h2v34h-2zM2356 588h2v34h-2zM2356 626h2v172h-2zM2356 802h2v38h-2zM2356 846h2v34h-2zM2356 884h2v34h-2zM2356 922h2v34h-2z" fill="#2e2926"/>
<path d="M70 374h2v172h-2zM206 374h2v172h-2zM342 374h2v172h-2zM480 374h2v172h-2zM616 374h2v172h-2zM752 374h2v172h-2zM888 374h2v172h-2zM1024 374h2v172h-2zM1162 374h2v172h-2zM1298 374h2v172h-2zM1434 374h2v172h-2zM1570 374h2v172h-2zM1708 374h2v172h-2zM1844 374h2v172h-2zM1980 374h2v172h-2zM2116 374h2v172h-2zM2252 374h2v172h-2zM2390 374h2v172h-2z" fill="#332d2a"/>
<path d="M36 374h2v172h-2zM104 374h2v172h-2zM138 374h2v172h-2zM172 374h2v172h-2zM240 374h2v172h-2zM274 374h2v172h-2zM308 374h2v172h-2zM376 374h2v172h-2zM410 374h2v172h-2zM446 374h2v172h-2zM514 374h2v172h-2zM548 374h2v172h-2zM582 374h2v172h-2zM650 374h2v172h-2zM684 374h2v172h-2zM718 374h2v172h-2zM786 374h2v172h-2zM820 374h2v172h-2zM854 374h2v172h-2zM922 374h2v172h-2zM956 374h2v172h-2zM990 374h2v172h-2zM1060 374h2v172h-2zM1094 374h2v172h-2zM1128 374h2v172h-2zM1196 374h2v172h-2zM1230 374h2v172h-2zM1264 374h2v172h-2zM1332 374h2v172h-2zM1366 374h2v172h-2zM1400 374h2v172h-2zM1468 374h2v172h-2zM1502 374h2v172h-2zM1536 374h2v172h-2zM1604 374h2v172h-2zM1638 374h2v172h-2zM1674 374h2v172h-2zM1742 374h2v172h-2zM1776 374h2v172h-2zM1810 374h2v172h-2zM1878 374h2v172h-2zM1912 374h2v172h-2zM1946 374h2v172h-2zM2014 374h2v172h-2zM2048 374h2v172h-2zM2082 374h2v172h-2zM2150 374h2v172h-2zM2184 374h2v172h-2zM2218 374h2v172h-2zM2286 374h2v172h-2zM2322 374h2v172h-2zM2356 374h2v172h-2z" fill="#3c3532"/>
<rect x="20" y="198" width="50" height="172" fill="#cbbde1"/>
<path d="M20 198h50v2h-50zM20 230h50v2h-50z" fill="#71687f"/>
<path d="M36 232h2v138h-2z" fill="#a195b3"/>
<rect x="70" y="198" width="136" height="172" fill="#cbbde1"/>
<path d="M70 198h136v2h-136zM70 230h136v2h-136zM70 198h2v172h-2z" fill="#71687f"/>
<path d="M104 232h2v138h-2zM138 232h2v138h-2zM172 232h2v138h-2z" fill="#a195b3"/>
<rect x="206" y="198" width="136" height="172" fill="#cbbde1"/>
<path d="M206 198h136v2h-136zM206 230h136v2h-136zM206 198h2v172h-2z" fill="#71687f"/>
<path d="M240 232h2v138h-2zM274 232h2v138h-2zM308 232h2v138h-2z" fill="#a195b3"/>
<rect x="480" y="198" width="136" height="172" fill="#cbbde1"/>
<path d="M480 198h136v2h-136zM480 230h136v2h-136zM480 198h2v172h-2z" fill="#71687f"/>
<path d="M514 232h2v138h-2zM548 232h2v138h-2zM582 232h2v138h-2z" fill="#a195b3"/>
<rect x="616" y="198" width="136" height="172" fill="#cbbde1"/>
<path d="M616 198h136v2h-136zM616 230h136v2h-136zM616 198h2v172h-2z" fill="#71687f"/>
<path d="M650 232h2v138h-2zM684 232h2v138h-2zM718 232h2v138h-2z" fill="#a195b3"/>
<rect x="752" y="198" width="136" height="172" fill="#cbbde1"/>
<path d="M752 198h136v2h-136zM752 230h136v2h-136zM752 198h2v172h-2z" fill="#71687f"/>
<path d="M786 232h2v138h-2zM820 232h2v138h-2zM854 232h2v138h-2z" fill="#a195b3"/>
<rect x="1024" y="198" width="138" height="172" fill="#cbbde1"/>
<path d="M1024 198h138v2h-138zM1024 230h138v2h-138zM1024 198h2v172h-2z" fill="#71687f"/>
<path d="M1060 232h2v138h-2zM1094 232h2v138h-2zM1128 232h2v138h-2z" fill="#a195b3"/>
<rect x="1162" y="198" width="136" height="172" fill="#cbbde1"/>
<path d="M1162 198h136v2h-136zM1162 230h136v2h-136zM1162 198h2v172h-2z" fill="#71687f"/>
<path d="M1196 232h2v138h-2zM1230 232h2v138h-2zM1264 232h2v138h-2z" fill="#a195b3"/>
<rect x="1298" y="198" width="136" height="172" fill="#cbbde1"/>
<path d="M1298 198h136v2h-136zM1298 230h136v2h-136zM1298 198h2v172h-2z" fill="#71687f"/>
<path d="M1332 232h2v138h-2zM1366 232h2v138h-2zM1400 232h2v138h-2z" fill="#a195b3"/>
<rect x="1434" y="198" width="136" height="172" fill="#cbbde1"/>
<path d="M1434 198h136v2h-136zM1434 230h136v2h-136zM1434 198h2v172h-2z" fill="#71687f"/>
<path d="M1468 232h2v138h-2zM1502 232h2v138h-2zM1536 232h2v138h-2z" fill="#a195b3"/>
<rect x="1570" y="198" width="138" height="172" fill="#cbbde1"/>
<path d="M1570 198h138v2h-138zM1570 230h138v2h-138zM1570 198h2v172h-2z" fill="#71687f"/>
<path d="M1604 232h2v138h-2zM1638 232h2v138h-2zM1674 232h2v138h-2z" fill="#a195b3"/>
<rect x="1708" y="198" width="136" height="172" fill="#cbbde1"/>
<path d="M1708 198h136v2h-136zM1708 230h136v2h-136zM1708 198h2v172h-2z" fill="#71687f"/>
<path d="M1742 232h2v138h-2zM1776 232h2v138h-2zM1810 232h2v138h-2z" fill="#a195b3"/>
<rect x="1844" y="198" width="136" height="172" fill="#cbbde1"/>
<path d="M1844 198h136v2h-136zM1844 230h136v2h-136zM1844 198h2v172h-2z" fill="#71687f"/>
<path d="M1878 232h2v138h-2zM1912 232h2v138h-2zM1946 232h2v138h-2z" fill="#a195b3"/>
<rect x="1980" y="198" width="136" height="172" fill="#cbbde1"/>
<path d="M1980 198h136v2h-136zM1980 230h136v2h-136zM1980 198h2v172h-2z" fill="#71687f"/>
<path d="M2014 232h2v138h-2zM2048 232h2v138h-2zM2082 232h2v138h-2z" fill="#a195b3"/>
<rect x="2116" y="198" width="136" height="172" fill="#cbbde1"/>
<path d="M2116 198h136v2h-136zM2116 230h136v2h-136zM2116 198h2v172h-2z" fill="#71687f"/>
<path d="M2150 232h2v138h-2zM2184 232h2v138h-2zM2218 232h2v138h-2z" fill="#a195b3"/>
<rect x="2252" y="198" width="138" height="172" fill="#cbbde1"/>
<path d="M2252 198h138v2h-138zM2252 230h138v2h-138zM2252 198h2v172h-2z" fill="#71687f"/>
<path d="M2286 232h2v138h-2zM2322 232h2v138h-2zM2356 232h2v138h-2z" fill="#a195b3"/>
<rect x="20" y="374" width="50" height="172" fill="#8ffbe6"/>
<path d="M20 374h50v2h-50zM20 406h50v2h-50z" fill="#3f8a7d"/>
<path d="M36 408h2v138h-2z" fill="#6dc9b8"/>
<rect x="70" y="374" width="136" height="172" fill="#8ffbe6"/>
<path d="M70 374h136v2h-136zM70 406h136v2h-136zM70 374h2v172h-2z" fill="#3f8a7d"/>
<path d="M104 408h2v138h-2zM138 408h2v138h-2zM172 408h2v138h-2z" fill="#6dc9b8"/>
<rect x="206" y="374" width="136" height="172" fill="#8ffbe6"/>
<path d="M206 374h136v2h-136zM206 406h136v2h-136zM206 374h2v172h-2z" fill="#3f8a7d"/>
<path d="M240 408h2v138h-2zM274 408h2v138h-2zM308 408h2v138h-2z" fill="#6dc9b8"/>
<rect x="342" y="374" width="138" height="172" fill="#8ffbe6"/>
<path d="M342 374h138v2h-138zM342 406h138v2h-138zM342 374h2v172h-2z" fill="#3f8a7d"/>
<path d="M376 408h2v138h-2zM410 408h2v138h-2zM446 408h2v138h-2z" fill="#6dc9b8"/>
<rect x="480" y="374" width="136" height="172" fill="#8ffbe6"/>
<path d="M480 374h136v2h-136zM480 406h136v2h-136zM480 374h2v172h-2z" fill="#3f8a7d"/>
<path d="M514 408h2v138h-2zM548 408h2v138h-2zM582 408h2v138h-2z" fill="#6dc9b8"/>
<rect x="616" y="374" width="136" height="172" fill="#8ffbe6"/>
<path d="M616 374h136v2h-136zM616 406h136v2h-136zM616 374h2v172h-2z" fill="#3f8a7d"/>
<path d="M650 408h2v138h-2zM684 408h2v138h-2zM718 408h2v138h-2z" fill="#6dc9b8"/>
<rect x="752" y="374" width="136" height="172" fill="#8ffbe6"/>
<path d="M752 374h136v2h-136zM752 406h136v2h-136zM752 374h2v172h-2z" fill="#3f8a7d"/>
<path d="M786 408h2v138h-2zM820 408h2v138h-2zM854 408h2v138h-2z" fill="#6dc9b8"/>
<rect x="1024" y="374" width="546" height="172" fill="#6b7f89"/>
<rect x="1024" y="406" width="138" height="140" fill="#5f737c"/>
<rect x="1298" y="406" width="136" height="140" fill="#5f737c"/>
<path d="M1060 374h2v172h-2zM1094 374h2v172h-2zM1128 374h2v172h-2zM1162 374h2v172h-2zM1196 374h2v172h-2zM1230 374h2v172h-2zM1264 374h2v172h-2zM1298 374h2v172h-2zM1332 374h2v172h-2zM1366 374h2v172h-2zM1400 374h2v172h-2zM1434 374h2v172h-2zM1468 374h2v172h-2zM1502 374h2v172h-2zM1536 374h2v172h-2z" fill="#5a6c75"/>
<rect x="1024" y="378" width="137" height="28" fill="#8ffbe6"/>
<rect x="1298" y="378" width="135" height="28" fill="#8ffbe6"/>
<rect x="1570" y="374" width="138" height="172" fill="#8ffbe6"/>
<path d="M1570 374h138v2h-138zM1570 406h138v2h-138zM1570 374h2v172h-2z" fill="#3f8a7d"/>
<path d="M1604 408h2v138h-2zM1638 408h2v138h-2zM1674 408h2v138h-2z" fill="#6dc9b8"/>
<rect x="1708" y="374" width="136" height="172" fill="#8ffbe6"/>
<path d="M1708 374h136v2h-136zM1708 406h136v2h-136zM1708 374h2v172h-2z" fill="#3f8a7d"/>
<path d="M1742 408h2v138h-2zM1776 408h2v138h-2zM1810 408h2v138h-2z" fill="#6dc9b8"/>
<rect x="1844" y="374" width="136" height="172" fill="#8ffbe6"/>
<path d="M1844 374h136v2h-136zM1844 406h136v2h-136zM1844 374h2v172h-2z" fill="#3f8a7d"/>
<path d="M1878 408h2v138h-2zM1912 408h2v138h-2zM1946 408h2v138h-2z" fill="#6dc9b8"/>
<rect x="70" y="550" width="272" height="34" fill="#57bdb0"/>
<path d="M70 550h2v34h-2z" fill="#2f7e73"/>
<rect x="71" y="551" width="270" height="32" fill="none" stroke="#3a9084" stroke-width="2"/>
<rect x="342" y="550" width="274" height="34" fill="#57bdb0"/>
<path d="M342 550h2v34h-2z" fill="#2f7e73"/>
<rect x="343" y="551" width="272" height="32" fill="none" stroke="#3a9084" stroke-width="2"/>
<rect x="616" y="550" width="272" height="34" fill="#57bdb0"/>
<path d="M616 550h2v34h-2z" fill="#2f7e73"/>
<rect x="617" y="551" width="270" height="32" fill="none" stroke="#3a9084" stroke-width="2"/>
<rect x="1024" y="626" width="1400" height="172" fill="#f7f28a"/>
<path d="M1024 626h1400v2h-1400zM1024 658h1400v2h-1400zM1024 626h2v172h-2z" fill="#8a8750"/>
<path d="M1060 660h2v138h-2zM1094 660h2v138h-2zM1128 660h2v138h-2zM1162 660h2v138h-2zM1196 660h2v138h-2zM1230 660h2v138h-2zM1264 660h2v138h-2zM1298 660h2v138h-2zM1332 660h2v138h-2zM1366 660h2v138h-2zM1400 660h2v138h-2zM1434 660h2v138h-2zM1468 660h2v138h-2zM1502 660h2v138h-2zM1536 660h2v138h-2zM1570 660h2v138h-2zM1604 660h2v138h-2zM1638 660h2v138h-2zM1674 660h2v138h-2zM1708 660h2v138h-2zM1742 660h2v138h-2zM1776 660h2v138h-2zM1810 660h2v138h-2zM1844 660h2v138h-2zM1878 660h2v138h-2zM1912 660h2v138h-2zM1946 660h2v138h-2zM1980 660h2v138h-2zM2014 660h2v138h-2zM2048 660h2v138h-2zM2082 660h2v138h-2zM2116 660h2v138h-2zM2150 660h2v138h-2zM2184 660h2v138h-2zM2218 660h2v138h-2zM2252 660h2v138h-2zM2286 660h2v138h-2zM2322 660h2v138h-2zM2356 660h2v138h-2zM2390 660h2v138h-2z" fill="#b5b168"/>
<rect x="1024" y="802" width="1092" height="38" fill="#f09ca8"/>
<path d="M1024 802h1092v2h-1092zM1024 834h1092v2h-1092zM1024 802h2v38h-2z" fill="#8d5f68"/>
<path d="M1060 836h2v4h-2zM1094 836h2v4h-2zM1128 836h2v4h-2zM1162 836h2v4h-2zM1196 836h2v4h-2zM1230 836h2v4h-2zM1264 836h2v4h-2zM1298 836h2v4h-2zM1332 836h2v4h-2zM1366 836h2v4h-2zM1400 836h2v4h-2zM1434 836h2v4h-2zM1468 836h2v4h-2zM1502 836h2v4h-2zM1536 836h2v4h-2zM1570 836h2v4h-2zM1604 836h2v4h-2zM1638 836h2v4h-2zM1674 836h2v4h-2zM1708 836h2v4h-2zM1742 836h2v4h-2zM1776 836h2v4h-2zM1810 836h2v4h-2zM1844 836h2v4h-2zM1878 836h2v4h-2zM1912 836h2v4h-2zM1946 836h2v4h-2zM1980 836h2v4h-2zM2014 836h2v4h-2zM2048 836h2v4h-2zM2082 836h2v4h-2z" fill="#c47f8a"/>
<rect x="1844" y="836" width="132" height="4" fill="#231f20"/>
<path d="M34.9 336h2v8h-2zM27.2 356h2v8h-2zM25.1 296h1.8v8h-1.8zM34 296h1.8v8h-1.8zM44.3 296h1.8v8h-1.8zM51.1 296h1.8v8h-1.8zM60.5 296h1.8v8h-1.8zM119.04 236h2v8h-2zM155.24 256h2v8h-2zM95.14 266h2v8h-2zM129.24 286h2v8h-2zM103.64 336h2v8h-2zM171.34 336h2v8h-2zM163.64 356h2v8h-2zM76.94 296h1.8v8h-1.8zM85.04 296h1.8v8h-1.8zM94.84 296h1.8v8h-1.8zM103.44 296h1.8v8h-1.8zM111.24 296h1.8v8h-1.8zM119.14 296h1.8v8h-1.8zM129.44 296h1.8v8h-1.8zM137.04 296h1.8v8h-1.8zM145.14 296h1.8v8h-1.8zM161.34 296h1.8v8h-1.8zM170.84 296h1.8v8h-1.8zM179.74 296h1.8v8h-1.8zM187.84 296h1.8v8h-1.8zM197.04 296h1.8v8h-1.8zM255.48 236h2v8h-2zM291.68 256h2v8h-2zM231.58 266h2v8h-2zM265.68 286h2v8h-2zM240.08 336h2v8h-2zM307.78 336h2v8h-2zM300.08 356h2v8h-2zM214.88 296h1.8v8h-1.8zM221.98 296h1.8v8h-1.8zM230.08 296h1.8v8h-1.8zM238.28 296h1.8v8h-1.8zM248.48 296h1.8v8h-1.8zM256.08 296h1.8v8h-1.8zM265.88 296h1.8v8h-1.8zM273.68 296h1.8v8h-1.8zM282.58 296h1.8v8h-1.8zM297.98 296h1.8v8h-1.8zM306.88 296h1.8v8h-1.8zM317.18 296h1.8v8h-1.8zM323.98 296h1.8v8h-1.8zM333.38 296h1.8v8h-1.8zM528.36 236h2v8h-2zM564.56 256h2v8h-2zM504.46 266h2v8h-2zM538.56 286h2v8h-2zM512.96 336h2v8h-2zM580.66 336h2v8h-2zM572.96 356h2v8h-2zM486.26 296h1.8v8h-1.8zM494.36 296h1.8v8h-1.8zM504.16 296h1.8v8h-1.8zM512.76 296h1.8v8h-1.8zM520.56 296h1.8v8h-1.8zM528.46 296h1.8v8h-1.8zM538.76 296h1.8v8h-1.8zM546.36 296h1.8v8h-1.8zM554.46 296h1.8v8h-1.8zM570.66 296h1.8v8h-1.8zM580.16 296h1.8v8h-1.8zM589.06 296h1.8v8h-1.8zM597.16 296h1.8v8h-1.8zM606.36 296h1.8v8h-1.8zM664.8 236h2v8h-2zM701 256h2v8h-2zM640.9 266h2v8h-2zM675 286h2v8h-2zM649.4 336h2v8h-2zM717.1 336h2v8h-2zM709.4 356h2v8h-2zM622.7 296h1.8v8h-1.8zM630.8 296h1.8v8h-1.8zM640.6 296h1.8v8h-1.8zM649.2 296h1.8v8h-1.8zM657 296h1.8v8h-1.8zM664.9 296h1.8v8h-1.8zM675.2 296h1.8v8h-1.8zM682.8 296h1.8v8h-1.8zM690.9 296h1.8v8h-1.8zM707.1 296h1.8v8h-1.8zM716.6 296h1.8v8h-1.8zM725.5 296h1.8v8h-1.8zM733.6 296h1.8v8h-1.8zM742.8 296h1.8v8h-1.8zM801.24 236h2v8h-2zM837.44 256h2v8h-2zM777.34 266h2v8h-2zM811.44 286h2v8h-2zM785.84 336h2v8h-2zM853.54 336h2v8h-2zM845.84 356h2v8h-2zM759.14 296h1.8v8h-1.8zM767.24 296h1.8v8h-1.8zM777.04 296h1.8v8h-1.8zM785.64 296h1.8v8h-1.8zM793.44 296h1.8v8h-1.8zM801.34 296h1.8v8h-1.8zM811.64 296h1.8v8h-1.8zM819.24 296h1.8v8h-1.8zM827.34 296h1.8v8h-1.8zM843.54 296h1.8v8h-1.8zM853.04 296h1.8v8h-1.8zM861.94 296h1.8v8h-1.8zM870.04 296h1.8v8h-1.8zM879.24 296h1.8v8h-1.8zM1074.12 236h2v8h-2zM1110.32 256h2v8h-2zM1050.22 266h2v8h-2zM1084.32 286h2v8h-2zM1058.72 336h2v8h-2zM1126.42 336h2v8h-2zM1118.72 356h2v8h-2zM1033.52 296h1.8v8h-1.8zM1040.62 296h1.8v8h-1.8zM1048.72 296h1.8v8h-1.8zM1056.92 296h1.8v8h-1.8zM1067.12 296h1.8v8h-1.8zM1074.72 296h1.8v8h-1.8zM1084.52 296h1.8v8h-1.8zM1092.32 296h1.8v8h-1.8zM1101.22 296h1.8v8h-1.8zM1116.62 296h1.8v8h-1.8zM1125.52 296h1.8v8h-1.8zM1135.82 296h1.8v8h-1.8zM1142.62 296h1.8v8h-1.8zM1152.02 296h1.8v8h-1.8zM1210.56 236h2v8h-2zM1246.76 256h2v8h-2zM1186.66 266h2v8h-2zM1220.76 286h2v8h-2zM1195.16 336h2v8h-2zM1262.86 336h2v8h-2zM1255.16 356h2v8h-2zM1169.96 296h1.8v8h-1.8zM1177.06 296h1.8v8h-1.8zM1185.16 296h1.8v8h-1.8zM1193.36 296h1.8v8h-1.8zM1203.56 296h1.8v8h-1.8zM1211.16 296h1.8v8h-1.8zM1220.96 296h1.8v8h-1.8zM1228.76 296h1.8v8h-1.8zM1237.66 296h1.8v8h-1.8zM1253.06 296h1.8v8h-1.8zM1261.96 296h1.8v8h-1.8zM1272.26 296h1.8v8h-1.8zM1279.06 296h1.8v8h-1.8zM1288.46 296h1.8v8h-1.8zM1347 236h2v8h-2zM1383.2 256h2v8h-2zM1323.1 266h2v8h-2zM1357.2 286h2v8h-2zM1331.6 336h2v8h-2zM1399.3 336h2v8h-2zM1391.6 356h2v8h-2zM1304.9 296h1.8v8h-1.8zM1313 296h1.8v8h-1.8zM1322.8 296h1.8v8h-1.8zM1331.4 296h1.8v8h-1.8zM1339.2 296h1.8v8h-1.8zM1347.1 296h1.8v8h-1.8zM1357.4 296h1.8v8h-1.8zM1365 296h1.8v8h-1.8zM1373.1 296h1.8v8h-1.8zM1389.3 296h1.8v8h-1.8zM1398.8 296h1.8v8h-1.8zM1407.7 296h1.8v8h-1.8zM1415.8 296h1.8v8h-1.8zM1425 296h1.8v8h-1.8zM1483.44 236h2v8h-2zM1519.64 256h2v8h-2zM1459.54 266h2v8h-2zM1493.64 286h2v8h-2zM1468.04 336h2v8h-2zM1535.74 336h2v8h-2zM1528.04 356h2v8h-2zM1441.34 296h1.8v8h-1.8zM1449.44 296h1.8v8h-1.8zM1459.24 296h1.8v8h-1.8zM1467.84 296h1.8v8h-1.8zM1475.64 296h1.8v8h-1.8zM1483.54 296h1.8v8h-1.8zM1493.84 296h1.8v8h-1.8zM1501.44 296h1.8v8h-1.8zM1509.54 296h1.8v8h-1.8zM1525.74 296h1.8v8h-1.8zM1535.24 296h1.8v8h-1.8zM1544.14 296h1.8v8h-1.8zM1552.24 296h1.8v8h-1.8zM1561.44 296h1.8v8h-1.8zM1619.88 236h2v8h-2zM1656.08 256h2v8h-2zM1595.98 266h2v8h-2zM1630.08 286h2v8h-2zM1604.48 336h2v8h-2zM1672.18 336h2v8h-2zM1664.48 356h2v8h-2zM1577.78 296h1.8v8h-1.8zM1585.88 296h1.8v8h-1.8zM1595.68 296h1.8v8h-1.8zM1604.28 296h1.8v8h-1.8zM1612.08 296h1.8v8h-1.8zM1619.98 296h1.8v8h-1.8zM1630.28 296h1.8v8h-1.8zM1637.88 296h1.8v8h-1.8zM1645.98 296h1.8v8h-1.8zM1662.18 296h1.8v8h-1.8zM1671.68 296h1.8v8h-1.8zM1680.58 296h1.8v8h-1.8zM1688.68 296h1.8v8h-1.8zM1697.88 296h1.8v8h-1.8zM1756.32 236h2v8h-2zM1792.52 256h2v8h-2zM1732.42 266h2v8h-2zM1766.52 286h2v8h-2zM1740.92 336h2v8h-2zM1808.62 336h2v8h-2zM1800.92 356h2v8h-2zM1714.22 296h1.8v8h-1.8zM1722.32 296h1.8v8h-1.8zM1732.12 296h1.8v8h-1.8zM1740.72 296h1.8v8h-1.8zM1748.52 296h1.8v8h-1.8zM1756.42 296h1.8v8h-1.8zM1766.72 296h1.8v8h-1.8zM1774.32 296h1.8v8h-1.8zM1782.42 296h1.8v8h-1.8zM1798.62 296h1.8v8h-1.8zM1808.12 296h1.8v8h-1.8zM1817.02 296h1.8v8h-1.8zM1825.12 296h1.8v8h-1.8zM1834.32 296h1.8v8h-1.8zM1892.76 236h2v8h-2zM1928.96 256h2v8h-2zM1868.86 266h2v8h-2zM1902.96 286h2v8h-2zM1877.36 336h2v8h-2zM1945.06 336h2v8h-2zM1937.36 356h2v8h-2zM1850.66 296h1.8v8h-1.8zM1858.76 296h1.8v8h-1.8zM1868.56 296h1.8v8h-1.8zM1877.16 296h1.8v8h-1.8zM1884.96 296h1.8v8h-1.8zM1892.86 296h1.8v8h-1.8zM1903.16 296h1.8v8h-1.8zM1910.76 296h1.8v8h-1.8zM1918.86 296h1.8v8h-1.8zM1935.06 296h1.8v8h-1.8zM1944.56 296h1.8v8h-1.8zM1953.46 296h1.8v8h-1.8zM1961.56 296h1.8v8h-1.8zM1970.76 296h1.8v8h-1.8zM2029.2 236h2v8h-2zM2065.4 256h2v8h-2zM2005.3 266h2v8h-2zM2039.4 286h2v8h-2zM2013.8 336h2v8h-2zM2081.5 336h2v8h-2zM2073.8 356h2v8h-2zM1987.1 296h1.8v8h-1.8zM1995.2 296h1.8v8h-1.8zM2005 296h1.8v8h-1.8zM2013.6 296h1.8v8h-1.8zM2021.4 296h1.8v8h-1.8zM2029.3 296h1.8v8h-1.8zM2039.6 296h1.8v8h-1.8zM2047.2 296h1.8v8h-1.8zM2055.3 296h1.8v8h-1.8zM2071.5 296h1.8v8h-1.8zM2081 296h1.8v8h-1.8zM2089.9 296h1.8v8h-1.8zM2098 296h1.8v8h-1.8zM2107.2 296h1.8v8h-1.8zM2165.64 236h2v8h-2zM2201.84 256h2v8h-2zM2141.74 266h2v8h-2zM2175.84 286h2v8h-2zM2150.24 336h2v8h-2zM2217.94 336h2v8h-2zM2210.24 356h2v8h-2zM2123.54 296h1.8v8h-1.8zM2131.64 296h1.8v8h-1.8zM2141.44 296h1.8v8h-1.8zM2150.04 296h1.8v8h-1.8zM2157.84 296h1.8v8h-1.8zM2165.74 296h1.8v8h-1.8zM2176.04 296h1.8v8h-1.8zM2183.64 296h1.8v8h-1.8zM2191.74 296h1.8v8h-1.8zM2207.94 296h1.8v8h-1.8zM2217.44 296h1.8v8h-1.8zM2226.34 296h1.8v8h-1.8zM2234.44 296h1.8v8h-1.8zM2243.64 296h1.8v8h-1.8zM2302.08 236h2v8h-2zM2338.28 256h2v8h-2zM2278.18 266h2v8h-2zM2312.28 286h2v8h-2zM2286.68 336h2v8h-2zM2354.38 336h2v8h-2zM2346.68 356h2v8h-2zM2259.98 296h1.8v8h-1.8zM2268.08 296h1.8v8h-1.8zM2277.88 296h1.8v8h-1.8zM2286.48 296h1.8v8h-1.8zM2294.28 296h1.8v8h-1.8zM2302.18 296h1.8v8h-1.8zM2312.48 296h1.8v8h-1.8zM2320.08 296h1.8v8h-1.8zM2328.18 296h1.8v8h-1.8zM2344.38 296h1.8v8h-1.8zM2353.88 296h1.8v8h-1.8zM2362.78 296h1.8v8h-1.8zM2370.88 296h1.8v8h-1.8zM2380.08 296h1.8v8h-1.8zM27.2 482h1v8h-1zM35.73 482h1v8h-1zM44.26 482h1v8h-1zM61.31 482h1v8h-1zM69.84 482h1v8h-1zM155.12 482h1v8h-1zM163.64 482h1v8h-1zM172.17 482h1v8h-1zM180.7 482h1v8h-1zM197.75 482h1v8h-1zM206.28 482h1v8h-1zM87.64 482h1v8h-1zM92.64 482h1v8h-1zM96.84 482h1v8h-1zM112.04 482h2v8h-2zM291.55 482h1v8h-1zM300.08 482h1v8h-1zM308.61 482h1v8h-1zM317.14 482h1v8h-1zM334.19 482h1v8h-1zM342.72 482h1v8h-1zM224.08 482h1v8h-1zM229.08 482h1v8h-1zM233.28 482h1v8h-1zM248.48 482h2v8h-2zM427.99 482h1v8h-1zM436.52 482h1v8h-1zM445.05 482h1v8h-1zM453.58 482h1v8h-1zM470.63 482h1v8h-1zM479.16 482h1v8h-1zM360.52 482h1v8h-1zM365.52 482h1v8h-1zM369.72 482h1v8h-1zM384.92 482h2v8h-2zM564.43 482h1v8h-1zM572.96 482h1v8h-1zM581.49 482h1v8h-1zM590.02 482h1v8h-1zM607.07 482h1v8h-1zM615.6 482h1v8h-1zM496.96 482h1v8h-1zM501.96 482h1v8h-1zM506.16 482h1v8h-1zM521.36 482h2v8h-2zM700.88 482h1v8h-1zM709.4 482h1v8h-1zM717.93 482h1v8h-1zM726.46 482h1v8h-1zM743.51 482h1v8h-1zM752.04 482h1v8h-1zM633.4 482h1v8h-1zM638.4 482h1v8h-1zM642.6 482h1v8h-1zM657.8 482h2v8h-2zM837.32 482h1v8h-1zM845.84 482h1v8h-1zM854.37 482h1v8h-1zM862.9 482h1v8h-1zM879.95 482h1v8h-1zM769.84 482h1v8h-1zM774.84 482h1v8h-1zM779.04 482h1v8h-1zM794.24 482h2v8h-2zM1041.92 412h2v8h-2zM1102.92 412h2v8h-2zM1151.52 412h2v8h-2zM1084.92 463h2v7h-2zM1041.92 532h2v8h-2zM1314.8 412h2v8h-2zM1375.8 412h2v8h-2zM1424.4 412h2v8h-2zM1358.8 463h2v7h-2zM1314.8 532h2v8h-2zM1587.68 412h2v8h-2zM1648.68 412h2v8h-2zM1697.28 412h2v8h-2zM1631.68 463h2v7h-2zM1587.68 532h2v8h-2zM1724.12 412h2v8h-2zM1785.12 412h2v8h-2zM1833.72 412h2v8h-2zM1768.12 463h2v7h-2zM1724.12 532h2v8h-2zM1860.56 412h2v8h-2zM1921.56 412h2v8h-2zM1970.16 412h2v8h-2zM1904.56 463h2v7h-2zM1860.56 532h2v8h-2zM1025 688h2v6h-2zM1035 712h2v6h-2zM1110.4 688h2v6h-2zM1178.6 669.7h2v6h-2zM1197.6 742h2v6h-2zM1231 682h2v6h-2zM1367 783.7h2v6h-2zM1393 712h2v6h-2zM1639 742h2v6h-2zM1665 753.7h2v6h-2zM1699 669.7h2v6h-2zM1811 772h2v6h-2zM1938.7 759.8h2v6h-2zM2006 754h2v6h-2zM2014.5 712h2v6h-2zM2074.8 717.8h2v6h-2zM2270 742h2v6h-2zM2380 754h2v6h-2zM2406.5 688h2v6h-2z" fill="#6d6470" opacity="0.9"/>
<path d="M20 236h6.4v8h-6.4zM20 256h6.4v8h-6.4zM36.9 336h5.4v8h-5.4zM29.2 356h5.4v8h-5.4zM26.9 296h7.3v8h-7.3zM35.8 296h7.3v8h-7.3zM46.1 296h4.3v8h-4.3zM52.9 296h7.3v8h-7.3zM62.3 296h6.5v8h-6.5zM121.04 236h41.8v8h-41.8zM157.24 256h5.6v8h-5.6zM97.14 266h5.7v8h-5.7zM131.24 286h5.6v8h-5.6zM105.64 336h5.3v8h-5.3zM173.34 336h5.4v8h-5.4zM70.34 356h6.5v8h-6.5zM165.64 356h5.4v8h-5.4zM71.14 296h5.7v8h-5.7zM78.74 296h6.2v8h-6.2zM86.84 296h7.8v8h-7.8zM96.64 296h6.2v8h-6.2zM105.24 296h5.6v8h-5.6zM113.04 296h6v8h-6zM120.94 296h7.8v8h-7.8zM131.24 296h5.6v8h-5.6zM138.84 296h6.2v8h-6.2zM146.94 296h5.9v8h-5.9zM163.14 296h7.5v8h-7.5zM172.64 296h6.1v8h-6.1zM181.54 296h4.9v8h-4.9zM189.64 296h7.3v8h-7.3zM198.84 296h6.2v8h-6.2zM257.48 236h41.8v8h-41.8zM293.68 256h5.6v8h-5.6zM233.58 266h5.7v8h-5.7zM267.68 286h5.6v8h-5.6zM242.08 336h5.3v8h-5.3zM309.78 336h5.4v8h-5.4zM206.78 356h6.5v8h-6.5zM302.08 356h5.4v8h-5.4zM207.58 296h5.8v8h-5.8zM216.68 296h3.9v8h-3.9zM223.78 296h6.2v8h-6.2zM231.88 296h6.2v8h-6.2zM240.08 296h7.4v8h-7.4zM250.28 296h4.9v8h-4.9zM257.88 296h7.8v8h-7.8zM267.68 296h6.1v8h-6.1zM275.48 296h6.1v8h-6.1zM284.38 296h4.9v8h-4.9zM299.78 296h7.3v8h-7.3zM308.68 296h7.3v8h-7.3zM318.98 296h4.3v8h-4.3zM325.78 296h7.3v8h-7.3zM335.18 296h6.5v8h-6.5zM530.36 236h41.8v8h-41.8zM566.56 256h5.6v8h-5.6zM506.46 266h5.7v8h-5.7zM540.56 286h5.6v8h-5.6zM514.96 336h5.3v8h-5.3zM582.66 336h5.4v8h-5.4zM479.66 356h6.5v8h-6.5zM574.96 356h5.4v8h-5.4zM480.46 296h5.7v8h-5.7zM488.06 296h6.2v8h-6.2zM496.16 296h7.8v8h-7.8zM505.96 296h6.2v8h-6.2zM514.56 296h5.6v8h-5.6zM522.36 296h6v8h-6zM530.26 296h7.8v8h-7.8zM540.56 296h5.6v8h-5.6zM548.16 296h6.2v8h-6.2zM556.26 296h5.9v8h-5.9zM572.46 296h7.5v8h-7.5zM581.96 296h6.1v8h-6.1zM590.86 296h4.9v8h-4.9zM598.96 296h7.3v8h-7.3zM608.16 296h6.2v8h-6.2zM666.8 236h41.8v8h-41.8zM703 256h5.6v8h-5.6zM642.9 266h5.7v8h-5.7zM677 286h5.6v8h-5.6zM651.4 336h5.3v8h-5.3zM719.1 336h5.4v8h-5.4zM616.1 356h6.5v8h-6.5zM711.4 356h5.4v8h-5.4zM616.9 296h5.7v8h-5.7zM624.5 296h6.2v8h-6.2zM632.6 296h7.8v8h-7.8zM642.4 296h6.2v8h-6.2zM651 296h5.6v8h-5.6zM658.8 296h6v8h-6zM666.7 296h7.8v8h-7.8zM677 296h5.6v8h-5.6zM684.6 296h6.2v8h-6.2zM692.7 296h5.9v8h-5.9zM708.9 296h7.5v8h-7.5zM718.4 296h6.1v8h-6.1zM727.3 296h4.9v8h-4.9zM735.4 296h7.3v8h-7.3zM744.6 296h6.2v8h-6.2zM803.24 236h41.8v8h-41.8zM839.44 256h5.6v8h-5.6zM779.34 266h5.7v8h-5.7zM813.44 286h5.6v8h-5.6zM787.84 336h5.3v8h-5.3zM855.54 336h5.4v8h-5.4zM752.54 356h6.5v8h-6.5zM847.84 356h5.4v8h-5.4zM753.34 296h5.7v8h-5.7zM760.94 296h6.2v8h-6.2zM769.04 296h7.8v8h-7.8zM778.84 296h6.2v8h-6.2zM787.44 296h5.6v8h-5.6zM795.24 296h6v8h-6zM803.14 296h7.8v8h-7.8zM813.44 296h5.6v8h-5.6zM821.04 296h6.2v8h-6.2zM829.14 296h5.9v8h-5.9zM845.34 296h7.5v8h-7.5zM854.84 296h6.1v8h-6.1zM863.74 296h4.9v8h-4.9zM871.84 296h7.3v8h-7.3zM881.04 296h6.2v8h-6.2zM1076.12 236h41.8v8h-41.8zM1112.32 256h5.6v8h-5.6zM1052.22 266h5.7v8h-5.7zM1086.32 286h5.6v8h-5.6zM1060.72 336h5.3v8h-5.3zM1128.42 336h5.4v8h-5.4zM1025.42 356h6.5v8h-6.5zM1120.72 356h5.4v8h-5.4zM1026.22 296h5.8v8h-5.8zM1035.32 296h3.9v8h-3.9zM1042.42 296h6.2v8h-6.2zM1050.52 296h6.2v8h-6.2zM1058.72 296h7.4v8h-7.4zM1068.92 296h4.9v8h-4.9zM1076.52 296h7.8v8h-7.8zM1086.32 296h6.1v8h-6.1zM1094.12 296h6.1v8h-6.1zM1103.02 296h4.9v8h-4.9zM1118.42 296h7.3v8h-7.3zM1127.32 296h7.3v8h-7.3zM1137.62 296h4.3v8h-4.3zM1144.42 296h7.3v8h-7.3zM1153.82 296h6.5v8h-6.5zM1212.56 236h41.8v8h-41.8zM1248.76 256h5.6v8h-5.6zM1188.66 266h5.7v8h-5.7zM1222.76 286h5.6v8h-5.6zM1197.16 336h5.3v8h-5.3zM1264.86 336h5.4v8h-5.4zM1161.86 356h6.5v8h-6.5zM1257.16 356h5.4v8h-5.4zM1162.66 296h5.8v8h-5.8zM1171.76 296h3.9v8h-3.9zM1178.86 296h6.2v8h-6.2zM1186.96 296h6.2v8h-6.2zM1195.16 296h7.4v8h-7.4zM1205.36 296h4.9v8h-4.9zM1212.96 296h7.8v8h-7.8zM1222.76 296h6.1v8h-6.1zM1230.56 296h6.1v8h-6.1zM1239.46 296h4.9v8h-4.9zM1254.86 296h7.3v8h-7.3zM1263.76 296h7.3v8h-7.3zM1274.06 296h4.3v8h-4.3zM1280.86 296h7.3v8h-7.3zM1290.26 296h6.5v8h-6.5zM1349 236h41.8v8h-41.8zM1385.2 256h5.6v8h-5.6zM1325.1 266h5.7v8h-5.7zM1359.2 286h5.6v8h-5.6zM1333.6 336h5.3v8h-5.3zM1401.3 336h5.4v8h-5.4zM1298.3 356h6.5v8h-6.5zM1393.6 356h5.4v8h-5.4zM1299.1 296h5.7v8h-5.7zM1306.7 296h6.2v8h-6.2zM1314.8 296h7.8v8h-7.8zM1324.6 296h6.2v8h-6.2zM1333.2 296h5.6v8h-5.6zM1341 296h6v8h-6zM1348.9 296h7.8v8h-7.8zM1359.2 296h5.6v8h-5.6zM1366.8 296h6.2v8h-6.2zM1374.9 296h5.9v8h-5.9zM1391.1 296h7.5v8h-7.5zM1400.6 296h6.1v8h-6.1zM1409.5 296h4.9v8h-4.9zM1417.6 296h7.3v8h-7.3zM1426.8 296h6.2v8h-6.2zM1485.44 236h41.8v8h-41.8zM1521.64 256h5.6v8h-5.6zM1461.54 266h5.7v8h-5.7zM1495.64 286h5.6v8h-5.6zM1470.04 336h5.3v8h-5.3zM1537.74 336h5.4v8h-5.4zM1434.74 356h6.5v8h-6.5zM1530.04 356h5.4v8h-5.4zM1435.54 296h5.7v8h-5.7zM1443.14 296h6.2v8h-6.2zM1451.24 296h7.8v8h-7.8zM1461.04 296h6.2v8h-6.2zM1469.64 296h5.6v8h-5.6zM1477.44 296h6v8h-6zM1485.34 296h7.8v8h-7.8zM1495.64 296h5.6v8h-5.6zM1503.24 296h6.2v8h-6.2zM1511.34 296h5.9v8h-5.9zM1527.54 296h7.5v8h-7.5zM1537.04 296h6.1v8h-6.1zM1545.94 296h4.9v8h-4.9zM1554.04 296h7.3v8h-7.3zM1563.24 296h6.2v8h-6.2zM1621.88 236h41.8v8h-41.8zM1658.08 256h5.6v8h-5.6zM1597.98 266h5.7v8h-5.7zM1632.08 286h5.6v8h-5.6zM1606.48 336h5.3v8h-5.3zM1674.18 336h5.4v8h-5.4zM1571.18 356h6.5v8h-6.5zM1666.48 356h5.4v8h-5.4zM1571.98 296h5.7v8h-5.7zM1579.58 296h6.2v8h-6.2zM1587.68 296h7.8v8h-7.8zM1597.48 296h6.2v8h-6.2zM1606.08 296h5.6v8h-5.6zM1613.88 296h6v8h-6zM1621.78 296h7.8v8h-7.8zM1632.08 296h5.6v8h-5.6zM1639.68 296h6.2v8h-6.2zM1647.78 296h5.9v8h-5.9zM1663.98 296h7.5v8h-7.5zM1673.48 296h6.1v8h-6.1zM1682.38 296h4.9v8h-4.9zM1690.48 296h7.3v8h-7.3zM1699.68 296h6.2v8h-6.2zM1758.32 236h41.8v8h-41.8zM1794.52 256h5.6v8h-5.6zM1734.42 266h5.7v8h-5.7zM1768.52 286h5.6v8h-5.6zM1742.92 336h5.3v8h-5.3zM1810.62 336h5.4v8h-5.4zM1707.62 356h6.5v8h-6.5zM1802.92 356h5.4v8h-5.4zM1708.42 296h5.7v8h-5.7zM1716.02 296h6.2v8h-6.2zM1724.12 296h7.8v8h-7.8zM1733.92 296h6.2v8h-6.2zM1742.52 296h5.6v8h-5.6zM1750.32 296h6v8h-6zM1758.22 296h7.8v8h-7.8zM1768.52 296h5.6v8h-5.6zM1776.12 296h6.2v8h-6.2zM1784.22 296h5.9v8h-5.9zM1800.42 296h7.5v8h-7.5zM1809.92 296h6.1v8h-6.1zM1818.82 296h4.9v8h-4.9zM1826.92 296h7.3v8h-7.3zM1836.12 296h6.2v8h-6.2zM1894.76 236h41.8v8h-41.8zM1930.96 256h5.6v8h-5.6zM1870.86 266h5.7v8h-5.7zM1904.96 286h5.6v8h-5.6zM1879.36 336h5.3v8h-5.3zM1947.06 336h5.4v8h-5.4zM1844.06 356h6.5v8h-6.5zM1939.36 356h5.4v8h-5.4zM1844.86 296h5.7v8h-5.7zM1852.46 296h6.2v8h-6.2zM1860.56 296h7.8v8h-7.8zM1870.36 296h6.2v8h-6.2zM1878.96 296h5.6v8h-5.6zM1886.76 296h6v8h-6zM1894.66 296h7.8v8h-7.8zM1904.96 296h5.6v8h-5.6zM1912.56 296h6.2v8h-6.2zM1920.66 296h5.9v8h-5.9zM1936.86 296h7.5v8h-7.5zM1946.36 296h6.1v8h-6.1zM1955.26 296h4.9v8h-4.9zM1963.36 296h7.3v8h-7.3zM1972.56 296h6.2v8h-6.2zM2031.2 236h41.8v8h-41.8zM2067.4 256h5.6v8h-5.6zM2007.3 266h5.7v8h-5.7zM2041.4 286h5.6v8h-5.6zM2015.8 336h5.3v8h-5.3zM2083.5 336h5.4v8h-5.4zM1980.5 356h6.5v8h-6.5zM2075.8 356h5.4v8h-5.4zM1981.3 296h5.7v8h-5.7zM1988.9 296h6.2v8h-6.2zM1997 296h7.8v8h-7.8zM2006.8 296h6.2v8h-6.2zM2015.4 296h5.6v8h-5.6zM2023.2 296h6v8h-6zM2031.1 296h7.8v8h-7.8zM2041.4 296h5.6v8h-5.6zM2049 296h6.2v8h-6.2zM2057.1 296h5.9v8h-5.9zM2073.3 296h7.5v8h-7.5zM2082.8 296h6.1v8h-6.1zM2091.7 296h4.9v8h-4.9zM2099.8 296h7.3v8h-7.3zM2109 296h6.2v8h-6.2zM2167.64 236h41.8v8h-41.8zM2203.84 256h5.6v8h-5.6zM2143.74 266h5.7v8h-5.7zM2177.84 286h5.6v8h-5.6zM2152.24 336h5.3v8h-5.3zM2219.94 336h5.4v8h-5.4zM2116.94 356h6.5v8h-6.5zM2212.24 356h5.4v8h-5.4zM2117.74 296h5.7v8h-5.7zM2125.34 296h6.2v8h-6.2zM2133.44 296h7.8v8h-7.8zM2143.24 296h6.2v8h-6.2zM2151.84 296h5.6v8h-5.6zM2159.64 296h6v8h-6zM2167.54 296h7.8v8h-7.8zM2177.84 296h5.6v8h-5.6zM2185.44 296h6.2v8h-6.2zM2193.54 296h5.9v8h-5.9zM2209.74 296h7.5v8h-7.5zM2219.24 296h6.1v8h-6.1zM2228.14 296h4.9v8h-4.9zM2236.24 296h7.3v8h-7.3zM2245.44 296h6.2v8h-6.2zM2304.08 236h41.8v8h-41.8zM2340.28 256h5.6v8h-5.6zM2280.18 266h5.7v8h-5.7zM2314.28 286h5.6v8h-5.6zM2288.68 336h5.3v8h-5.3zM2356.38 336h5.4v8h-5.4zM2253.38 356h6.5v8h-6.5zM2348.68 356h5.4v8h-5.4zM2254.18 296h5.7v8h-5.7zM2261.78 296h6.2v8h-6.2zM2269.88 296h7.8v8h-7.8zM2279.68 296h6.2v8h-6.2zM2288.28 296h5.6v8h-5.6zM2296.08 296h6v8h-6zM2303.98 296h7.8v8h-7.8zM2314.28 296h5.6v8h-5.6zM2321.88 296h6.2v8h-6.2zM2329.98 296h5.9v8h-5.9zM2346.18 296h7.5v8h-7.5zM2355.68 296h6.1v8h-6.1zM2364.58 296h4.9v8h-4.9zM2372.68 296h7.3v8h-7.3zM2381.88 296h6.2v8h-6.2zM20 482h6.27v8h-6.27zM28.2 482h6.6v8h-6.6zM36.73 482h6.6v8h-6.6zM45.26 482h6.6v8h-6.6zM62.31 482h6v8h-6zM70.84 482h5v8h-5zM156.12 482h6.6v8h-6.6zM164.64 482h6.6v8h-6.6zM173.17 482h6.6v8h-6.6zM181.7 482h6.6v8h-6.6zM198.75 482h6v8h-6zM207.28 482h5v8h-5zM88.64 482h3.2v8h-3.2zM93.64 482h3v8h-3zM97.84 482h5.6v8h-5.6zM114.04 482h3v8h-3zM292.55 482h6.6v8h-6.6zM301.08 482h6.6v8h-6.6zM309.61 482h6.6v8h-6.6zM318.14 482h6.6v8h-6.6zM335.19 482h6v8h-6zM343.72 482h5v8h-5zM225.08 482h3.2v8h-3.2zM230.08 482h3v8h-3zM234.28 482h5.6v8h-5.6zM250.48 482h3v8h-3zM428.99 482h6.6v8h-6.6zM437.52 482h6.6v8h-6.6zM446.05 482h6.6v8h-6.6zM454.58 482h6.6v8h-6.6zM471.63 482h6v8h-6zM480.16 482h5v8h-5zM361.52 482h3.2v8h-3.2zM366.52 482h3v8h-3zM370.72 482h5.6v8h-5.6zM386.92 482h3v8h-3zM565.43 482h6.6v8h-6.6zM573.96 482h6.6v8h-6.6zM582.49 482h6.6v8h-6.6zM591.02 482h6.6v8h-6.6zM608.07 482h6v8h-6zM616.6 482h5v8h-5zM497.96 482h3.2v8h-3.2zM502.96 482h3v8h-3zM507.16 482h5.6v8h-5.6zM523.36 482h3v8h-3zM701.88 482h6.6v8h-6.6zM710.4 482h6.6v8h-6.6zM718.93 482h6.6v8h-6.6zM727.46 482h6.6v8h-6.6zM744.51 482h6v8h-6zM753.04 482h5v8h-5zM634.4 482h3.2v8h-3.2zM639.4 482h3v8h-3zM643.6 482h5.6v8h-5.6zM659.8 482h3v8h-3zM838.32 482h6.6v8h-6.6zM846.84 482h6.6v8h-6.6zM855.37 482h6.6v8h-6.6zM863.9 482h6.6v8h-6.6zM880.95 482h6v8h-6zM770.84 482h3.2v8h-3.2zM775.84 482h3v8h-3zM780.04 482h5.6v8h-5.6zM796.24 482h3v8h-3zM1043.92 412h53v8h-53zM1104.92 412h38.5v8h-38.5zM1153.52 412h7.8v8h-7.8zM1025.42 463h16v7h-16zM1086.92 463h14.3v7h-14.3zM1043.92 532h31.5v8h-31.5zM1316.8 412h53v8h-53zM1377.8 412h38.5v8h-38.5zM1426.4 412h7.8v8h-7.8zM1298.3 463h58.5v7h-58.5zM1360.8 463h37v7h-37zM1316.8 532h31.5v8h-31.5zM1589.68 412h53v8h-53zM1650.68 412h38.5v8h-38.5zM1699.28 412h7.8v8h-7.8zM1571.18 463h58.5v7h-58.5zM1633.68 463h37v7h-37zM1589.68 532h31.5v8h-31.5zM1726.12 412h53v8h-53zM1787.12 412h38.5v8h-38.5zM1835.72 412h7.8v8h-7.8zM1707.62 463h58.5v7h-58.5zM1770.12 463h37v7h-37zM1726.12 532h31.5v8h-31.5zM1862.56 412h53v8h-53zM1923.56 412h38.5v8h-38.5zM1972.16 412h7.8v8h-7.8zM1844.06 463h58.5v7h-58.5zM1906.56 463h37v7h-37zM1862.56 532h31.5v8h-31.5zM1027 688h6.7v6h-6.7zM1037 712h45v6h-45zM1112.4 688h57.2v6h-57.2zM1180.6 669.7h13.4v6h-13.4zM1199.6 742h18.4v6h-18.4zM1233 682h127v6h-127zM1369 783.7h23v6h-23zM1395 712h41v6h-41zM1641 742h2.7v6h-2.7zM1667 753.7h25v6h-25zM1701 669.7h97v6h-97zM1813 772h121v6h-121zM1940.7 759.8h59.3v6h-59.3zM2008 754h5.7v6h-5.7zM2016.5 712h25.1v6h-25.1zM2076.8 717.8h96.9v6h-96.9zM2272 742h87.5v6h-87.5zM2382 754h15.8v6h-15.8zM2408.5 688h15.5v6h-15.5z" fill="#231f20"/>
<rect x="1025" y="149" width="546" height="20" fill="#625953" stroke="#8a8073" stroke-width="2"/>
</svg>
<svg style="left:0px;top:0px" width="2430" height="1000" viewBox="0 0 2430 1000" >
<path d="M1026 150l17 9l-17 9" fill="none" stroke="#8a8073" stroke-width="1.5"/>
<path d="M1570 150l-17 9l17 9" fill="none" stroke="#8a8073" stroke-width="1.5"/>
<path d="M1018 186h6v8z" fill="#9fd3ee"/>
<path d="M1578 186h-6v8z" fill="#9fd3ee"/>
<path d="M1026 962v8h-7z" fill="#b5daf5"/>
<path d="M1570 962v8h7z" fill="#b5daf5"/>
</svg>
<div style="left:1024px;top:148px;width:2px;height:812px;background:#a09585;"></div>
<div style="left:1570px;top:148px;width:2px;height:812px;background:#a09585;"></div>
<div style="left:1222px;top:198px;width:2px;height:758px;background:#ffffff;"></div>
<div style="left:1222px;top:200px;width:2px;height:170px;background:#000;"></div>
<div style="left:1222px;top:628px;width:2px;height:170px;background:#000;"></div>
<div style="left:1222px;top:804px;width:2px;height:36px;background:#000;"></div>
<div class="t" style="left:26px;top:202.5px;font-size:19.5px;line-height:25px;color:#2a2433;letter-spacing:0.57px;-webkit-text-stroke:0.45px #2a2433;width:44px;overflow:hidden;">... Ma</div>
<div class="t" style="left:77px;top:202.5px;font-size:19.5px;line-height:25px;color:#2b2630;letter-spacing:0.74px;-webkit-text-stroke:0.45px #2b2630;">Main</div>
<div class="t" style="left:213px;top:202.5px;font-size:19.5px;line-height:25px;color:#2b2630;letter-spacing:0.7px;-webkit-text-stroke:0.45px #2b2630;">Var1</div>
<div class="t" style="left:487px;top:202.5px;font-size:19.5px;line-height:25px;color:#2b2630;letter-spacing:0.74px;-webkit-text-stroke:0.45px #2b2630;">Main</div>
<div class="t" style="left:623px;top:202.5px;font-size:19.5px;line-height:25px;color:#2b2630;letter-spacing:0.74px;-webkit-text-stroke:0.45px #2b2630;">Main</div>
<div class="t" style="left:759px;top:202.5px;font-size:19.5px;line-height:25px;color:#2b2630;letter-spacing:0.74px;-webkit-text-stroke:0.45px #2b2630;">Main</div>
<div class="t" style="left:1031px;top:202.5px;font-size:19.5px;line-height:25px;color:#2b2630;letter-spacing:0.7px;-webkit-text-stroke:0.45px #2b2630;">Var1</div>
<div class="t" style="left:1169px;top:202.5px;font-size:19.5px;line-height:25px;color:#2b2630;letter-spacing:0.7px;-webkit-text-stroke:0.45px #2b2630;">Var2</div>
<div class="t" style="left:1305px;top:202.5px;font-size:19.5px;line-height:25px;color:#2b2630;letter-spacing:0.74px;-webkit-text-stroke:0.45px #2b2630;">Main</div>
<div class="t" style="left:1441px;top:202.5px;font-size:19.5px;line-height:25px;color:#2b2630;letter-spacing:0.74px;-webkit-text-stroke:0.45px #2b2630;">Main</div>
<div class="t" style="left:1577px;top:202.5px;font-size:19.5px;line-height:25px;color:#2b2630;letter-spacing:0.74px;-webkit-text-stroke:0.45px #2b2630;">Main</div>
<div class="t" style="left:1715px;top:202.5px;font-size:19.5px;line-height:25px;color:#2b2630;letter-spacing:0.74px;-webkit-text-stroke:0.45px #2b2630;">Main</div>
<div class="t" style="left:1851px;top:202.5px;font-size:19.5px;line-height:25px;color:#2b2630;letter-spacing:0.74px;-webkit-text-stroke:0.45px #2b2630;">Main</div>
<div class="t" style="left:1987px;top:202.5px;font-size:19.5px;line-height:25px;color:#2b2630;letter-spacing:0.74px;-webkit-text-stroke:0.45px #2b2630;">Main</div>
<div class="t" style="left:2123px;top:202.5px;font-size:19.5px;line-height:25px;color:#2b2630;letter-spacing:0.74px;-webkit-text-stroke:0.45px #2b2630;">Main</div>
<div class="t" style="left:2259px;top:202.5px;font-size:19.5px;line-height:25px;color:#2b2630;letter-spacing:0.74px;-webkit-text-stroke:0.45px #2b2630;">Main</div>
<div class="t" style="left:26px;top:378.5px;font-size:19.5px;line-height:25px;color:#1d3a36;letter-spacing:0.38px;-webkit-text-stroke:0.45px #1d3a36;">...</div>
<div class="t" style="left:1031px;top:379.5px;font-size:19.5px;line-height:25px;color:#1d3a36;letter-spacing:0.76px;-webkit-text-stroke:0.45px #1d3a36;">2</div>
<div class="t" style="left:1305px;top:379.5px;font-size:19.5px;line-height:25px;color:#1d3a36;letter-spacing:0.76px;-webkit-text-stroke:0.45px #1d3a36;">2</div>
<div class="t" style="left:1577px;top:379.5px;font-size:19.5px;line-height:25px;color:#1d3a36;letter-spacing:0.76px;-webkit-text-stroke:0.45px #1d3a36;">2</div>
<div class="t" style="left:1715px;top:379.5px;font-size:19.5px;line-height:25px;color:#1d3a36;letter-spacing:0.76px;-webkit-text-stroke:0.45px #1d3a36;">2</div>
<div class="t" style="left:1851px;top:379.5px;font-size:19.5px;line-height:25px;color:#1d3a36;letter-spacing:0.76px;-webkit-text-stroke:0.45px #1d3a36;">2</div>
<svg style="left:0px;top:956px" width="2430" height="44" viewBox="0 0 2430 44" shape-rendering="crispEdges">
<rect x="20" y="0" width="2406" height="4" fill="#262120"/>
<path d="M30 4h2v4h-2zM69 4h2v4h-2zM108 4h2v4h-2zM147 4h1.600v14.500h3v1.600h-4.600zM186 4h2v4h-2zM225 4h2v4h-2zM264 4h2v4h-2zM303 4h1.600v14.500h3v1.600h-4.600zM342 4h2v4h-2zM381 4h2v4h-2zM420 4h2v4h-2zM459 4h1.600v14.500h3v1.600h-4.600zM498 4h2v4h-2zM537 4h2v4h-2zM576 4h2v4h-2zM614 4h1.600v14.500h3v1.600h-4.600zM653 4h2v4h-2zM692 4h2v4h-2zM731 4h2v4h-2zM770 4h1.600v14.500h3v1.600h-4.600zM809 4h2v4h-2zM848 4h2v4h-2zM887 4h2v4h-2zM926 4h1.600v14.500h3v1.600h-4.600zM965 4h2v4h-2zM1004 4h2v4h-2zM1043 4h2v4h-2zM1082 4h1.600v14.500h3v1.600h-4.600zM1121 4h2v4h-2zM1160 4h2v4h-2zM1199 4h2v4h-2zM1238 4h1.600v14.500h3v1.600h-4.600zM1276 4h2v4h-2zM1315 4h2v4h-2zM1354 4h2v4h-2zM1393 4h1.600v14.500h3v1.600h-4.600zM1432 4h2v4h-2zM1471 4h2v4h-2zM1510 4h2v4h-2zM1549 4h1.600v14.500h3v1.600h-4.600zM1588 4h2v4h-2zM1627 4h2v4h-2zM1666 4h2v4h-2zM1705 4h1.600v14.500h3v1.600h-4.600zM1744 4h2v4h-2zM1783 4h2v4h-2zM1822 4h2v4h-2zM1861 4h1.600v14.500h3v1.600h-4.600zM1900 4h2v4h-2zM1938 4h2v4h-2zM1977 4h2v4h-2zM2016 4h1.600v14.500h3v1.600h-4.600zM2055 4h2v4h-2zM2094 4h2v4h-2zM2133 4h2v4h-2zM2172 4h1.600v14.500h3v1.600h-4.600zM2211 4h2v4h-2zM2250 4h2v4h-2zM2289 4h2v4h-2zM2328 4h1.600v14.500h3v1.600h-4.600zM2367 4h2v4h-2zM2406 4h2v4h-2z" fill="#a89d8c"/>
</svg>
<div class="t" style="left:153.5px;top:963px;font-size:19.5px;line-height:25px;color:#a89d8c;letter-spacing:0.76px;-webkit-text-stroke:0.3px #a89d8c;">0:08</div>
<div class="t" style="left:309.5px;top:963px;font-size:19.5px;line-height:25px;color:#a89d8c;letter-spacing:0.76px;-webkit-text-stroke:0.3px #a89d8c;">0:10</div>
<div class="t" style="left:465.5px;top:963px;font-size:19.5px;line-height:25px;color:#a89d8c;letter-spacing:0.76px;-webkit-text-stroke:0.3px #a89d8c;">0:12</div>
<div class="t" style="left:620.5px;top:963px;font-size:19.5px;line-height:25px;color:#a89d8c;letter-spacing:0.76px;-webkit-text-stroke:0.3px #a89d8c;">0:14</div>
<div class="t" style="left:776.5px;top:963px;font-size:19.5px;line-height:25px;color:#a89d8c;letter-spacing:0.76px;-webkit-text-stroke:0.3px #a89d8c;">0:16</div>
<div class="t" style="left:932.5px;top:963px;font-size:19.5px;line-height:25px;color:#a89d8c;letter-spacing:0.76px;-webkit-text-stroke:0.3px #a89d8c;">0:18</div>
<div class="t" style="left:1088.5px;top:963px;font-size:19.5px;line-height:25px;color:#a89d8c;letter-spacing:0.76px;-webkit-text-stroke:0.3px #a89d8c;">0:20</div>
<div class="t" style="left:1244.5px;top:963px;font-size:19.5px;line-height:25px;color:#a89d8c;letter-spacing:0.76px;-webkit-text-stroke:0.3px #a89d8c;">0:22</div>
<div class="t" style="left:1399.5px;top:963px;font-size:19.5px;line-height:25px;color:#a89d8c;letter-spacing:0.76px;-webkit-text-stroke:0.3px #a89d8c;">0:24</div>
<div class="t" style="left:1555.5px;top:963px;font-size:19.5px;line-height:25px;color:#a89d8c;letter-spacing:0.76px;-webkit-text-stroke:0.3px #a89d8c;">0:26</div>
<div class="t" style="left:1711.5px;top:963px;font-size:19.5px;line-height:25px;color:#a89d8c;letter-spacing:0.76px;-webkit-text-stroke:0.3px #a89d8c;">0:28</div>
<div class="t" style="left:1867.5px;top:963px;font-size:19.5px;line-height:25px;color:#a89d8c;letter-spacing:0.76px;-webkit-text-stroke:0.3px #a89d8c;">0:30</div>
<div class="t" style="left:2022.5px;top:963px;font-size:19.5px;line-height:25px;color:#a89d8c;letter-spacing:0.76px;-webkit-text-stroke:0.3px #a89d8c;">0:32</div>
<div class="t" style="left:2178.5px;top:963px;font-size:19.5px;line-height:25px;color:#a89d8c;letter-spacing:0.76px;-webkit-text-stroke:0.3px #a89d8c;">0:34</div>
<div class="t" style="left:2334.5px;top:963px;font-size:19.5px;line-height:25px;color:#a89d8c;letter-spacing:0.76px;-webkit-text-stroke:0.3px #a89d8c;">0:36</div>
<div class="t" style="left:2365px;top:917px;font-size:34px;line-height:44px;color:#6d645d;letter-spacing:1.91px;font-weight:700;">1/4</div>
<div style="left:2434px;top:124px;width:58px;height:26px;background:#231e1c;border-radius:13px;border:1px solid #1a1614;"></div>
<div class="t" style="left:2446.5px;top:124px;font-size:20px;line-height:26px;color:#c5bbae;letter-spacing:0.99px;-webkit-text-stroke:0.8px #c5bbae;">Set</div>
<div style="left:2514px;top:124px;width:46px;height:26px;background:#231e1c;border:1px solid #1a1614;"></div>
<svg style="left:2514px;top:124px" width="46" height="26" viewBox="0 0 46 26" >
<path d="M19 17l8-8" stroke="#bfb4a7" stroke-width="2.6"/><circle cx="19" cy="17" r="3" fill="#bfb4a7"/><circle cx="27" cy="9" r="3" fill="#bfb4a7"/>
</svg>
<div style="left:2568px;top:124px;width:46px;height:26px;background:#231e1c;border:1px solid #1a1614;"></div>
<svg style="left:2568px;top:124px" width="46" height="26" viewBox="0 0 46 26" >
<rect x="16" y="12" width="14" height="9" fill="#bfb4a7"/><path d="M19 12v-2a4 4 0 0 1 8 0v2" fill="none" stroke="#bfb4a7" stroke-width="2"/>
</svg>
<div style="left:2434px;top:160px;width:26px;height:26px;background:#231e1c;border-radius:13px;border:1px solid #1a1614;"></div>
<svg style="left:2434px;top:160px" width="26" height="26" viewBox="0 0 26 26" >
<path d="M9 13h11" stroke="#bfb4a7" stroke-width="2.6"/><path d="M5.500 13l8.500-6v12z" fill="#bfb4a7"/>
</svg>
<div style="left:2466px;top:160px;width:26px;height:26px;background:#231e1c;border-radius:13px;border:1px solid #1a1614;"></div>
<svg style="left:2466px;top:160px" width="26" height="26" viewBox="0 0 26 26" >
<path d="M6 13h11" stroke="#bfb4a7" stroke-width="2.6"/><path d="M20.500 13l-8.500-6v12z" fill="#bfb4a7"/>
</svg>
<div style="left:2426px;top:194px;width:582px;height:766px;background:#2b2624;"></div>
<div style="left:2428px;top:198px;width:186px;height:172px;background:#cbbde1;"></div>
<div style="left:2618px;top:198px;width:148px;height:172px;background:#3c3432;"></div>
<div style="left:2770px;top:198px;width:238px;height:172px;background:#3c3432;"></div>
<svg style="left:2433px;top:201px" width="28" height="28" viewBox="0 0 28 28" >
<circle cx="14" cy="14" r="12" fill="none" stroke="#2c2638" stroke-width="2"/>
<path d="M8 10.5h12l-6 9z" fill="#2c2638"/>
</svg>
<div class="t" style="left:2475px;top:202px;font-size:20px;line-height:26px;color:#2c2638;letter-spacing:-0.25px;font-weight:700;">Drums</div>
<div style="left:2622px;top:202px;width:140px;height:26px;background:#272220;border:2px solid #181412;"></div>
<div class="t" style="left:2627px;top:202px;font-size:20px;line-height:26px;color:#c5bbae;letter-spacing:0.51px;-webkit-text-stroke:0.45px #c5bbae;">All Ins</div>
<svg style="left:2740px;top:202px" width="22" height="26" viewBox="0 0 22 26" >
<path d="M4 8h13l-6.5 10z" fill="#bfb4a7"/>
</svg>
<div style="left:2622px;top:236px;width:140px;height:26px;background:#272220;border:2px solid #181412;"></div>
<div style="left:2629px;top:240px;width:6px;height:6px;background:#1a1614;border-radius:3px;"></div>
<div style="left:2629px;top:246px;width:6px;height:6px;background:#1a1614;border-radius:3px;"></div>
<div style="left:2629px;top:252px;width:6px;height:6px;background:#1a1614;border-radius:3px;"></div>
<div class="t" style="left:2644px;top:236px;font-size:20px;line-height:26px;color:#c5bbae;letter-spacing:0.56px;-webkit-text-stroke:0.45px #c5bbae;width:99px;overflow:hidden;">All Channels</div>
<svg style="left:2740px;top:236px" width="22" height="26" viewBox="0 0 22 26" >
<path d="M4 8h13l-6.5 10z" fill="#bfb4a7"/>
</svg>
<div style="left:2622px;top:270px;width:34px;height:26px;background:#272220;border:2px solid #181412;"></div>
<div class="t" style="left:2629.99px;top:270px;font-size:20px;line-height:26px;color:#c5bbae;letter-spacing:0.67px;-webkit-text-stroke:0.45px #c5bbae;">In</div>
<div style="left:2662px;top:270px;width:54px;height:26px;background:#f4b465;border:2px solid #181412;"></div>
<div class="t" style="left:2667px;top:270px;font-size:20px;line-height:26px;color:#111;letter-spacing:0.71px;-webkit-text-stroke:0.45px #111;">Auto</div>
<div style="left:2722px;top:270px;width:40px;height:26px;background:#272220;border:2px solid #181412;"></div>
<div class="t" style="left:2726.5px;top:270px;font-size:20px;line-height:26px;color:#c5bbae;letter-spacing:1.56px;-webkit-text-stroke:0.45px #c5bbae;">Off</div>
<div style="left:2622px;top:304px;width:140px;height:26px;background:#272220;border:2px solid #181412;"></div>
<div class="t" style="left:2627px;top:304px;font-size:20px;line-height:26px;color:#c5bbae;letter-spacing:0.66px;-webkit-text-stroke:0.45px #c5bbae;">Main</div>
<svg style="left:2740px;top:304px" width="22" height="26" viewBox="0 0 22 26" >
<path d="M4 8h13l-6.5 10z" fill="#bfb4a7"/>
</svg>
<div style="left:2622px;top:338px;width:140px;height:26px;background:#3c3432;border:2px solid #181412;"></div>
<div style="left:2774px;top:236px;width:92px;height:26px;background:#272220;border:2px solid #181412;"></div>
<div style="left:2776px;top:238px;width:58px;height:22px;background:#2f7088;"></div>
<div class="t" style="left:2801.93px;top:235.5px;font-size:20.5px;line-height:27px;color:#c5bbae;letter-spacing:0.71px;-webkit-text-stroke:0.45px #c5bbae;">-7.8</div>
<div style="left:2874px;top:236px;width:92px;height:26px;background:#272220;border:2px solid #181412;"></div>
<div class="t" style="left:2912.01px;top:235.5px;font-size:20.5px;line-height:27px;color:#c5bbae;letter-spacing:1.18px;-webkit-text-stroke:0.45px #c5bbae;">C</div>
<div style="left:2774px;top:270px;width:60px;height:26px;background:#272220;border:2px solid #181412;"></div>
<div class="t" style="left:2788.66px;top:269.5px;font-size:20px;line-height:26px;color:#c5bbae;">−</div>
<div class="t" style="left:2800.37px;top:264.5px;font-size:27px;line-height:35px;color:#c5bbae;-webkit-text-stroke:0.35px #c5bbae;">∞</div>
<div style="left:2840px;top:270px;width:60px;height:26px;background:#272220;border:2px solid #181412;"></div>
<div class="t" style="left:2854.66px;top:269.5px;font-size:20px;line-height:26px;color:#c5bbae;">−</div>
<div class="t" style="left:2866.37px;top:264.5px;font-size:27px;line-height:35px;color:#c5bbae;-webkit-text-stroke:0.35px #c5bbae;">∞</div>
<div style="left:2774px;top:202px;width:92px;height:26px;background:#f4b465;border:2px solid #181412;"></div>
<div class="t" style="left:2814.45px;top:202.5px;font-size:19px;line-height:25px;color:#111;letter-spacing:0.53px;font-weight:700;">1</div>
<div style="left:2874px;top:202px;width:42px;height:26px;background:#272220;border:2px solid #181412;"></div>
<div class="t" style="left:2887.98px;top:202.5px;font-size:19.5px;line-height:25px;color:#c5bbae;letter-spacing:1.04px;-webkit-text-stroke:0.9px #c5bbae;">S</div>
<div style="left:2924px;top:202px;width:42px;height:26px;background:#272220;border:2px solid #181412;"></div>
<svg style="left:2924px;top:202px" width="42" height="26" viewBox="0 0 42 26" >
<circle cx="21" cy="13.100" r="7.200" fill="#bfb4a7"/><rect x="22.4" y="8" width="1.700" height="7.500" fill="#231e1c"/><ellipse cx="20.8" cy="15.700" rx="3" ry="1.900" transform="rotate(-22 20.8 15.700)" fill="#231e1c"/>
</svg>
<div style="left:2974px;top:202px;width:6px;height:164px;background:#1f1b19;"></div>
<div style="left:2974px;top:218px;width:6px;height:2px;background:#3c3432;"></div>
<div style="left:2982px;top:202px;width:6px;height:164px;background:#1f1b19;"></div>
<div style="left:2982px;top:218px;width:6px;height:2px;background:#3c3432;"></div>
<div style="left:2974px;top:262px;width:6px;height:104px;background:#72f25f;"></div>
<div style="left:2982px;top:262px;width:6px;height:104px;background:#72f25f;"></div>
<div style="left:2974px;top:240px;width:6px;height:30px;background:linear-gradient(#b39a36,#9a9c3a 70%,#72f25f);"></div>
<div style="left:2974px;top:240px;width:6px;height:2px;background:#f2c23e;"></div>
<div style="left:2982px;top:240px;width:6px;height:30px;background:linear-gradient(#b39a36,#9a9c3a 70%,#72f25f);"></div>
<div style="left:2982px;top:240px;width:6px;height:2px;background:#f2c23e;"></div>
<div style="left:2428px;top:374px;width:186px;height:172px;background:#8ffbe6;"></div>
<div style="left:2618px;top:374px;width:148px;height:172px;background:#4d4542;"></div>
<div style="left:2770px;top:374px;width:238px;height:172px;background:#4d4542;"></div>
<svg style="left:2433px;top:377px" width="28" height="28" viewBox="0 0 28 28" >
<circle cx="14" cy="14" r="12" fill="none" stroke="#173832" stroke-width="2"/>
<path d="M8 10.5h12l-6 9z" fill="#173832"/>
</svg>
<div class="t" style="left:2475px;top:378px;font-size:20px;line-height:26px;color:#173832;letter-spacing:-0.24px;font-weight:700;">Bass</div>
<div style="left:2622px;top:378px;width:140px;height:26px;background:#272220;border:2px solid #181412;"></div>
<div class="t" style="left:2627px;top:378px;font-size:20px;line-height:26px;color:#c5bbae;letter-spacing:0.51px;-webkit-text-stroke:0.45px #c5bbae;">All Ins</div>
<svg style="left:2740px;top:378px" width="22" height="26" viewBox="0 0 22 26" >
<path d="M4 8h13l-6.5 10z" fill="#bfb4a7"/>
</svg>
<div style="left:2622px;top:412px;width:140px;height:26px;background:#272220;border:2px solid #181412;"></div>
<div style="left:2629px;top:416px;width:6px;height:6px;background:#1a1614;border-radius:3px;"></div>
<div style="left:2629px;top:422px;width:6px;height:6px;background:#1a1614;border-radius:3px;"></div>
<div style="left:2629px;top:428px;width:6px;height:6px;background:#1a1614;border-radius:3px;"></div>
<div class="t" style="left:2644px;top:412px;font-size:20px;line-height:26px;color:#c5bbae;letter-spacing:0.56px;-webkit-text-stroke:0.45px #c5bbae;width:99px;overflow:hidden;">All Channels</div>
<svg style="left:2740px;top:412px" width="22" height="26" viewBox="0 0 22 26" >
<path d="M4 8h13l-6.5 10z" fill="#bfb4a7"/>
</svg>
<div style="left:2622px;top:446px;width:34px;height:26px;background:#272220;border:2px solid #181412;"></div>
<div class="t" style="left:2629.99px;top:446px;font-size:20px;line-height:26px;color:#c5bbae;letter-spacing:0.67px;-webkit-text-stroke:0.45px #c5bbae;">In</div>
<div style="left:2662px;top:446px;width:54px;height:26px;background:#f4b465;border:2px solid #181412;"></div>
<div class="t" style="left:2667px;top:446px;font-size:20px;line-height:26px;color:#111;letter-spacing:0.71px;-webkit-text-stroke:0.45px #111;">Auto</div>
<div style="left:2722px;top:446px;width:40px;height:26px;background:#272220;border:2px solid #181412;"></div>
<div class="t" style="left:2726.5px;top:446px;font-size:20px;line-height:26px;color:#c5bbae;letter-spacing:1.56px;-webkit-text-stroke:0.45px #c5bbae;">Off</div>
<div style="left:2622px;top:480px;width:140px;height:26px;background:#272220;border:2px solid #181412;"></div>
<div class="t" style="left:2627px;top:480px;font-size:20px;line-height:26px;color:#c5bbae;letter-spacing:0.66px;-webkit-text-stroke:0.45px #c5bbae;">Main</div>
<svg style="left:2740px;top:480px" width="22" height="26" viewBox="0 0 22 26" >
<path d="M4 8h13l-6.5 10z" fill="#bfb4a7"/>
</svg>
<div style="left:2622px;top:514px;width:140px;height:26px;background:#4d4542;border:2px solid #181412;"></div>
<div style="left:2774px;top:412px;width:92px;height:26px;background:#272220;border:2px solid #181412;"></div>
<div style="left:2776px;top:414px;width:64px;height:22px;background:#2f7088;"></div>
<div class="t" style="left:2801.93px;top:411.5px;font-size:20.5px;line-height:27px;color:#c5bbae;letter-spacing:0.71px;-webkit-text-stroke:0.45px #c5bbae;">-5.0</div>
<div style="left:2874px;top:412px;width:92px;height:26px;background:#272220;border:2px solid #181412;"></div>
<div class="t" style="left:2912.01px;top:411.5px;font-size:20.5px;line-height:27px;color:#c5bbae;letter-spacing:1.18px;-webkit-text-stroke:0.45px #c5bbae;">C</div>
<div style="left:2774px;top:446px;width:60px;height:26px;background:#272220;border:2px solid #181412;"></div>
<div class="t" style="left:2788.66px;top:445.5px;font-size:20px;line-height:26px;color:#c5bbae;">−</div>
<div class="t" style="left:2800.37px;top:440.5px;font-size:27px;line-height:35px;color:#c5bbae;-webkit-text-stroke:0.35px #c5bbae;">∞</div>
<div style="left:2840px;top:446px;width:60px;height:26px;background:#272220;border:2px solid #181412;"></div>
<div class="t" style="left:2854.66px;top:445.5px;font-size:20px;line-height:26px;color:#c5bbae;">−</div>
<div class="t" style="left:2866.37px;top:440.5px;font-size:27px;line-height:35px;color:#c5bbae;-webkit-text-stroke:0.35px #c5bbae;">∞</div>
<div style="left:2774px;top:378px;width:92px;height:26px;background:#f4b465;border:2px solid #181412;"></div>
<div class="t" style="left:2814.45px;top:378.5px;font-size:19px;line-height:25px;color:#111;letter-spacing:0.53px;font-weight:700;">2</div>
<div style="left:2874px;top:378px;width:42px;height:26px;background:#272220;border:2px solid #181412;"></div>
<div class="t" style="left:2887.98px;top:378.5px;font-size:19.5px;line-height:25px;color:#c5bbae;letter-spacing:1.04px;-webkit-text-stroke:0.9px #c5bbae;">S</div>
<div style="left:2924px;top:378px;width:42px;height:26px;background:#ee6566;border:2px solid #181412;"></div>
<svg style="left:2924px;top:378px" width="42" height="26" viewBox="0 0 42 26" >
<circle cx="21" cy="13.100" r="7.200" fill="#1a1614"/><rect x="22.4" y="8" width="1.700" height="7.500" fill="#ee6566"/><ellipse cx="20.8" cy="15.700" rx="3" ry="1.900" transform="rotate(-22 20.8 15.700)" fill="#ee6566"/>
</svg>
<div style="left:2974px;top:378px;width:6px;height:164px;background:#1f1b19;"></div>
<div style="left:2974px;top:394px;width:6px;height:2px;background:#3c3432;"></div>
<div style="left:2982px;top:378px;width:6px;height:164px;background:#1f1b19;"></div>
<div style="left:2982px;top:394px;width:6px;height:2px;background:#3c3432;"></div>
<div style="left:2974px;top:476px;width:6px;height:66px;background:#72f25f;"></div>
<div style="left:2982px;top:476px;width:6px;height:66px;background:#72f25f;"></div>
<div style="left:2974px;top:425px;width:6px;height:2px;background:#e8e34a;"></div>
<div style="left:2982px;top:425px;width:6px;height:2px;background:#e8e34a;"></div>
<div style="left:2428px;top:550px;width:186px;height:34px;background:#4a9d92;"></div>
<div style="left:2618px;top:550px;width:148px;height:34px;background:#3c3432;"></div>
<div style="left:2770px;top:550px;width:238px;height:34px;background:#3c3432;"></div>
<svg style="left:2433px;top:553px" width="28" height="28" viewBox="0 0 28 28" >
<circle cx="14" cy="14" r="12" fill="none" stroke="#0e332e" stroke-width="2"/>
<path d="M10.5 8v12l9-6z" fill="#0e332e"/>
</svg>
<div class="t" style="left:2475px;top:554px;font-size:20px;line-height:26px;color:#0e332e;letter-spacing:-0.23px;font-weight:700;">Drone</div>
<div style="left:2622px;top:554px;width:140px;height:26px;background:#3c3432;border:2px solid #181412;"></div>
<div style="left:2774px;top:554px;width:92px;height:26px;background:#f4b465;border:2px solid #181412;"></div>
<div class="t" style="left:2814.45px;top:554.5px;font-size:19px;line-height:25px;color:#111;letter-spacing:0.53px;font-weight:700;">3</div>
<div style="left:2874px;top:554px;width:42px;height:26px;background:#272220;border:2px solid #181412;"></div>
<div class="t" style="left:2887.98px;top:554.5px;font-size:19.5px;line-height:25px;color:#c5bbae;letter-spacing:1.04px;-webkit-text-stroke:0.9px #c5bbae;">S</div>
<div style="left:2924px;top:554px;width:42px;height:26px;background:#272220;border:2px solid #181412;"></div>
<svg style="left:2924px;top:554px" width="42" height="26" viewBox="0 0 42 26" >
<circle cx="21" cy="13.100" r="7.200" fill="#bfb4a7"/><rect x="22.4" y="8" width="1.700" height="7.500" fill="#231e1c"/><ellipse cx="20.8" cy="15.700" rx="3" ry="1.900" transform="rotate(-22 20.8 15.700)" fill="#231e1c"/>
</svg>
<div style="left:2974px;top:554px;width:6px;height:26px;background:#1f1b19;"></div>
<div style="left:2974px;top:556px;width:6px;height:2px;background:#3c3432;"></div>
<div style="left:2982px;top:554px;width:6px;height:26px;background:#1f1b19;"></div>
<div style="left:2982px;top:556px;width:6px;height:2px;background:#3c3432;"></div>
<div style="left:2428px;top:588px;width:186px;height:34px;background:#d67063;"></div>
<div style="left:2618px;top:588px;width:148px;height:34px;background:#3c3432;"></div>
<div style="left:2770px;top:588px;width:238px;height:34px;background:#3c3432;"></div>
<svg style="left:2433px;top:591px" width="28" height="28" viewBox="0 0 28 28" >
<circle cx="14" cy="14" r="12" fill="none" stroke="#4a1712" stroke-width="2"/>
<path d="M10.5 8v12l9-6z" fill="#4a1712"/>
</svg>
<div class="t" style="left:2475px;top:592px;font-size:20px;line-height:26px;color:#4a1712;letter-spacing:-0.24px;font-weight:700;">Pads</div>
<div style="left:2622px;top:592px;width:140px;height:26px;background:#3c3432;border:2px solid #181412;"></div>
<div style="left:2774px;top:592px;width:92px;height:26px;background:#f4b465;border:2px solid #181412;"></div>
<div class="t" style="left:2814.45px;top:592.5px;font-size:19px;line-height:25px;color:#111;letter-spacing:0.53px;font-weight:700;">4</div>
<div style="left:2874px;top:592px;width:42px;height:26px;background:#272220;border:2px solid #181412;"></div>
<div class="t" style="left:2887.98px;top:592.5px;font-size:19.5px;line-height:25px;color:#c5bbae;letter-spacing:1.04px;-webkit-text-stroke:0.9px #c5bbae;">S</div>
<div style="left:2924px;top:592px;width:42px;height:26px;background:#272220;border:2px solid #181412;"></div>
<svg style="left:2924px;top:592px" width="42" height="26" viewBox="0 0 42 26" >
<circle cx="21" cy="13.100" r="7.200" fill="#bfb4a7"/><rect x="22.4" y="8" width="1.700" height="7.500" fill="#231e1c"/><ellipse cx="20.8" cy="15.700" rx="3" ry="1.900" transform="rotate(-22 20.8 15.700)" fill="#231e1c"/>
</svg>
<div style="left:2974px;top:592px;width:6px;height:26px;background:#1f1b19;"></div>
<div style="left:2974px;top:594px;width:6px;height:2px;background:#3c3432;"></div>
<div style="left:2982px;top:592px;width:6px;height:26px;background:#1f1b19;"></div>
<div style="left:2982px;top:594px;width:6px;height:2px;background:#3c3432;"></div>
<div style="left:2428px;top:626px;width:186px;height:172px;background:#f7f28a;"></div>
<div style="left:2618px;top:626px;width:148px;height:172px;background:#3c3432;"></div>
<div style="left:2770px;top:626px;width:238px;height:172px;background:#3c3432;"></div>
<svg style="left:2433px;top:629px" width="28" height="28" viewBox="0 0 28 28" >
<circle cx="14" cy="14" r="12" fill="none" stroke="#3a3918" stroke-width="2"/>
<path d="M8 10.5h12l-6 9z" fill="#3a3918"/>
</svg>
<div class="t" style="left:2475px;top:630px;font-size:20px;line-height:26px;color:#3a3918;letter-spacing:-0.23px;font-weight:700;">Melody</div>
<div style="left:2622px;top:630px;width:140px;height:26px;background:#272220;border:2px solid #181412;"></div>
<div class="t" style="left:2627px;top:630px;font-size:20px;line-height:26px;color:#c5bbae;letter-spacing:0.51px;-webkit-text-stroke:0.45px #c5bbae;">All Ins</div>
<svg style="left:2740px;top:630px" width="22" height="26" viewBox="0 0 22 26" >
<path d="M4 8h13l-6.5 10z" fill="#bfb4a7"/>
</svg>
<div style="left:2622px;top:664px;width:140px;height:26px;background:#272220;border:2px solid #181412;"></div>
<div style="left:2629px;top:668px;width:6px;height:6px;background:#1a1614;border-radius:3px;"></div>
<div style="left:2629px;top:674px;width:6px;height:6px;background:#1a1614;border-radius:3px;"></div>
<div style="left:2629px;top:680px;width:6px;height:6px;background:#1a1614;border-radius:3px;"></div>
<div class="t" style="left:2644px;top:664px;font-size:20px;line-height:26px;color:#c5bbae;letter-spacing:0.56px;-webkit-text-stroke:0.45px #c5bbae;width:99px;overflow:hidden;">All Channels</div>
<svg style="left:2740px;top:664px" width="22" height="26" viewBox="0 0 22 26" >
<path d="M4 8h13l-6.5 10z" fill="#bfb4a7"/>
</svg>
<div style="left:2622px;top:698px;width:34px;height:26px;background:#272220;border:2px solid #181412;"></div>
<div class="t" style="left:2629.99px;top:698px;font-size:20px;line-height:26px;color:#c5bbae;letter-spacing:0.67px;-webkit-text-stroke:0.45px #c5bbae;">In</div>
<div style="left:2662px;top:698px;width:54px;height:26px;background:#f4b465;border:2px solid #181412;"></div>
<div class="t" style="left:2667px;top:698px;font-size:20px;line-height:26px;color:#111;letter-spacing:0.71px;-webkit-text-stroke:0.45px #111;">Auto</div>
<div style="left:2722px;top:698px;width:40px;height:26px;background:#272220;border:2px solid #181412;"></div>
<div class="t" style="left:2726.5px;top:698px;font-size:20px;line-height:26px;color:#c5bbae;letter-spacing:1.56px;-webkit-text-stroke:0.45px #c5bbae;">Off</div>
<div style="left:2622px;top:732px;width:140px;height:26px;background:#272220;border:2px solid #181412;"></div>
<div class="t" style="left:2627px;top:732px;font-size:20px;line-height:26px;color:#c5bbae;letter-spacing:0.66px;-webkit-text-stroke:0.45px #c5bbae;">Main</div>
<svg style="left:2740px;top:732px" width="22" height="26" viewBox="0 0 22 26" >
<path d="M4 8h13l-6.5 10z" fill="#bfb4a7"/>
</svg>
<div style="left:2622px;top:766px;width:140px;height:26px;background:#3c3432;border:2px solid #181412;"></div>
<div style="left:2774px;top:664px;width:92px;height:26px;background:#272220;border:2px solid #181412;"></div>
<div style="left:2776px;top:666px;width:50px;height:22px;background:#2f7088;"></div>
<div class="t" style="left:2796.59px;top:663.5px;font-size:20.5px;line-height:27px;color:#c5bbae;letter-spacing:0.72px;-webkit-text-stroke:0.45px #c5bbae;">-11.4</div>
<div style="left:2874px;top:664px;width:92px;height:26px;background:#272220;border:2px solid #181412;"></div>
<div class="t" style="left:2912.01px;top:663.5px;font-size:20.5px;line-height:27px;color:#c5bbae;letter-spacing:1.18px;-webkit-text-stroke:0.45px #c5bbae;">C</div>
<div style="left:2774px;top:698px;width:60px;height:26px;background:#272220;border:2px solid #181412;"></div>
<div class="t" style="left:2788.66px;top:697.5px;font-size:20px;line-height:26px;color:#c5bbae;">−</div>
<div class="t" style="left:2800.37px;top:692.5px;font-size:27px;line-height:35px;color:#c5bbae;-webkit-text-stroke:0.35px #c5bbae;">∞</div>
<div style="left:2840px;top:698px;width:60px;height:26px;background:#272220;border:2px solid #181412;"></div>
<div class="t" style="left:2854.66px;top:697.5px;font-size:20px;line-height:26px;color:#c5bbae;">−</div>
<div class="t" style="left:2866.37px;top:692.5px;font-size:27px;line-height:35px;color:#c5bbae;-webkit-text-stroke:0.35px #c5bbae;">∞</div>
<div style="left:2774px;top:630px;width:92px;height:26px;background:#f4b465;border:2px solid #181412;"></div>
<div class="t" style="left:2814.45px;top:630.5px;font-size:19px;line-height:25px;color:#111;letter-spacing:0.53px;font-weight:700;">5</div>
<div style="left:2874px;top:630px;width:42px;height:26px;background:#272220;border:2px solid #181412;"></div>
<div class="t" style="left:2887.98px;top:630.5px;font-size:19.5px;line-height:25px;color:#c5bbae;letter-spacing:1.04px;-webkit-text-stroke:0.9px #c5bbae;">S</div>
<div style="left:2924px;top:630px;width:42px;height:26px;background:#272220;border:2px solid #181412;"></div>
<svg style="left:2924px;top:630px" width="42" height="26" viewBox="0 0 42 26" >
<circle cx="21" cy="13.100" r="7.200" fill="#bfb4a7"/><rect x="22.4" y="8" width="1.700" height="7.500" fill="#231e1c"/><ellipse cx="20.8" cy="15.700" rx="3" ry="1.900" transform="rotate(-22 20.8 15.700)" fill="#231e1c"/>
</svg>
<div style="left:2974px;top:630px;width:6px;height:164px;background:#1f1b19;"></div>
<div style="left:2974px;top:646px;width:6px;height:2px;background:#3c3432;"></div>
<div style="left:2982px;top:630px;width:6px;height:164px;background:#1f1b19;"></div>
<div style="left:2982px;top:646px;width:6px;height:2px;background:#3c3432;"></div>
<div style="left:2974px;top:738px;width:6px;height:56px;background:#72f25f;"></div>
<div style="left:2982px;top:734px;width:6px;height:60px;background:#72f25f;"></div>
<div style="left:2974px;top:725px;width:6px;height:2px;background:#72f25f;"></div>
<div style="left:2982px;top:710px;width:6px;height:2px;background:#72f25f;"></div>
<div style="left:2428px;top:802px;width:186px;height:38px;background:#f09ca8;"></div>
<div style="left:2618px;top:802px;width:148px;height:38px;background:#3c3432;"></div>
<div style="left:2770px;top:802px;width:238px;height:38px;background:#3c3432;"></div>
<svg style="left:2433px;top:805px" width="28" height="28" viewBox="0 0 28 28" >
<circle cx="14" cy="14" r="12" fill="none" stroke="#4a1f28" stroke-width="2"/>
<path d="M8 10.5h12l-6 9z" fill="#4a1f28"/>
</svg>
<div class="t" style="left:2475px;top:806px;font-size:20px;line-height:26px;color:#4a1f28;letter-spacing:-0.24px;font-weight:700;">Keys</div>
<div style="left:2622px;top:806px;width:140px;height:26px;background:#272220;border:2px solid #181412;"></div>
<div style="left:2629px;top:810px;width:6px;height:6px;background:#1a1614;border-radius:3px;"></div>
<div style="left:2629px;top:816px;width:6px;height:6px;background:#1a1614;border-radius:3px;"></div>
<div style="left:2629px;top:822px;width:6px;height:6px;background:#1a1614;border-radius:3px;"></div>
<div class="t" style="left:2644px;top:806px;font-size:20px;line-height:26px;color:#c5bbae;letter-spacing:0.56px;-webkit-text-stroke:0.45px #c5bbae;width:99px;overflow:hidden;">All Channels</div>
<svg style="left:2740px;top:806px" width="22" height="26" viewBox="0 0 22 26" >
<path d="M4 8h13l-6.5 10z" fill="#bfb4a7"/>
</svg>
<div style="left:2774px;top:806px;width:92px;height:26px;background:#f4b465;border:2px solid #181412;"></div>
<div class="t" style="left:2814.45px;top:806.5px;font-size:19px;line-height:25px;color:#111;letter-spacing:0.53px;font-weight:700;">6</div>
<div style="left:2874px;top:806px;width:42px;height:26px;background:#272220;border:2px solid #181412;"></div>
<div class="t" style="left:2887.98px;top:806.5px;font-size:19.5px;line-height:25px;color:#c5bbae;letter-spacing:1.04px;-webkit-text-stroke:0.9px #c5bbae;">S</div>
<div style="left:2924px;top:806px;width:42px;height:26px;background:#272220;border:2px solid #181412;"></div>
<svg style="left:2924px;top:806px" width="42" height="26" viewBox="0 0 42 26" >
<circle cx="21" cy="13.100" r="7.200" fill="#bfb4a7"/><rect x="22.4" y="8" width="1.700" height="7.500" fill="#231e1c"/><ellipse cx="20.8" cy="15.700" rx="3" ry="1.900" transform="rotate(-22 20.8 15.700)" fill="#231e1c"/>
</svg>
<div style="left:2974px;top:806px;width:6px;height:30px;background:#1f1b19;"></div>
<div style="left:2974px;top:808px;width:6px;height:2px;background:#3c3432;"></div>
<div style="left:2982px;top:806px;width:6px;height:30px;background:#1f1b19;"></div>
<div style="left:2982px;top:808px;width:6px;height:2px;background:#3c3432;"></div>
<div style="left:2428px;top:846px;width:186px;height:34px;background:#99a7f8;"></div>
<div style="left:2618px;top:846px;width:148px;height:34px;background:#3c3432;"></div>
<div style="left:2770px;top:846px;width:238px;height:34px;background:#3c3432;"></div>
<svg style="left:2433px;top:849px" width="28" height="28" viewBox="0 0 28 28" >
<circle cx="14" cy="14" r="12" fill="none" stroke="#1f2650" stroke-width="2"/>
<path d="M10.5 8v12l9-6z" fill="#1f2650"/>
</svg>
<div class="t" style="left:2475px;top:850px;font-size:20px;line-height:26px;color:#1f2650;letter-spacing:-0.21px;font-weight:700;">A Delay</div>
<div style="left:2622px;top:850px;width:140px;height:26px;background:#3c3432;border:2px solid #181412;"></div>
<div style="left:2774px;top:850px;width:92px;height:26px;background:#f4b465;border:2px solid #181412;"></div>
<div class="t" style="left:2812.8px;top:850.5px;font-size:19px;line-height:25px;color:#111;letter-spacing:0.69px;font-weight:700;">A</div>
<div style="left:2874px;top:850px;width:34px;height:26px;background:#272220;border:2px solid #181412;"></div>
<div class="t" style="left:2883.98px;top:850.5px;font-size:19.5px;line-height:25px;color:#c5bbae;letter-spacing:1.04px;-webkit-text-stroke:0.9px #c5bbae;">S</div>
<div style="left:2916px;top:850px;width:50px;height:26px;background:#f4b465;border:2px solid #181412;"></div>
<div class="t" style="left:2920.5px;top:850.5px;font-size:19px;line-height:25px;color:#111;letter-spacing:0.75px;-webkit-text-stroke:0.45px #111;">Post</div>
<div style="left:2974px;top:850px;width:6px;height:26px;background:#1f1b19;"></div>
<div style="left:2974px;top:852px;width:6px;height:2px;background:#3c3432;"></div>
<div style="left:2982px;top:850px;width:6px;height:26px;background:#1f1b19;"></div>
<div style="left:2982px;top:852px;width:6px;height:2px;background:#3c3432;"></div>
<div style="left:2428px;top:884px;width:186px;height:34px;background:#93c4c0;"></div>
<div style="left:2618px;top:884px;width:148px;height:34px;background:#3c3432;"></div>
<div style="left:2770px;top:884px;width:238px;height:34px;background:#3c3432;"></div>
<svg style="left:2433px;top:887px" width="28" height="28" viewBox="0 0 28 28" >
<circle cx="14" cy="14" r="12" fill="none" stroke="#1d3a38" stroke-width="2"/>
<path d="M10.5 8v12l9-6z" fill="#1d3a38"/>
</svg>
<div class="t" style="left:2475px;top:888px;font-size:20px;line-height:26px;color:#1d3a38;letter-spacing:-0.22px;font-weight:700;">B Reverb</div>
<div style="left:2622px;top:888px;width:140px;height:26px;background:#3c3432;border:2px solid #181412;"></div>
<div style="left:2774px;top:888px;width:92px;height:26px;background:#f4b465;border:2px solid #181412;"></div>
<div class="t" style="left:2812.8px;top:888.5px;font-size:19px;line-height:25px;color:#111;letter-spacing:0.69px;font-weight:700;">B</div>
<div style="left:2874px;top:888px;width:34px;height:26px;background:#272220;border:2px solid #181412;"></div>
<div class="t" style="left:2883.98px;top:888.5px;font-size:19.5px;line-height:25px;color:#c5bbae;letter-spacing:1.04px;-webkit-text-stroke:0.9px #c5bbae;">S</div>
<div style="left:2916px;top:888px;width:50px;height:26px;background:#f4b465;border:2px solid #181412;"></div>
<div class="t" style="left:2920.5px;top:888.5px;font-size:19px;line-height:25px;color:#111;letter-spacing:0.75px;-webkit-text-stroke:0.45px #111;">Post</div>
<div style="left:2974px;top:888px;width:6px;height:26px;background:#1f1b19;"></div>
<div style="left:2974px;top:890px;width:6px;height:2px;background:#3c3432;"></div>
<div style="left:2982px;top:888px;width:6px;height:26px;background:#1f1b19;"></div>
<div style="left:2982px;top:890px;width:6px;height:2px;background:#3c3432;"></div>
<div style="left:2428px;top:922px;width:186px;height:34px;background:#bfd380;"></div>
<div style="left:2618px;top:922px;width:148px;height:34px;background:#3c3432;"></div>
<div style="left:2770px;top:922px;width:238px;height:34px;background:#3c3432;"></div>
<svg style="left:2433px;top:925px" width="28" height="28" viewBox="0 0 28 28" >
<circle cx="14" cy="14" r="12" fill="none" stroke="#2d3a12" stroke-width="2"/>
<path d="M10.5 8v12l9-6z" fill="#2d3a12"/>
</svg>
<div class="t" style="left:2479px;top:926px;font-size:20px;line-height:26px;color:#2d3a12;letter-spacing:-0.23px;font-weight:700;">Main</div>
<div style="left:2622px;top:926px;width:140px;height:26px;background:#272220;border:2px solid #181412;"></div>
<div style="left:2629px;top:930px;width:6px;height:6px;background:#1a1614;border-radius:3px;"></div>
<div style="left:2629px;top:936px;width:6px;height:6px;background:#1a1614;border-radius:3px;"></div>
<div style="left:2629px;top:942px;width:6px;height:6px;background:#1a1614;border-radius:3px;"></div>
<div class="t" style="left:2644px;top:926px;font-size:20px;line-height:26px;color:#c5bbae;letter-spacing:1.07px;-webkit-text-stroke:0.45px #c5bbae;width:99px;overflow:hidden;">1/2</div>
<svg style="left:2740px;top:926px" width="22" height="26" viewBox="0 0 22 26" >
<path d="M4 8h13l-6.5 10z" fill="#bfb4a7"/>
</svg>
<div style="left:2774px;top:926px;width:92px;height:26px;background:#272220;border:2px solid #181412;"></div>
<div class="t" style="left:2804.66px;top:925.5px;font-size:20px;line-height:26px;color:#c5bbae;">−</div>
<div class="t" style="left:2816.37px;top:920.5px;font-size:27px;line-height:35px;color:#c5bbae;-webkit-text-stroke:0.35px #c5bbae;">∞</div>
<div style="left:2874px;top:926px;width:92px;height:26px;background:#272220;border:2px solid #181412;"></div>
<div style="left:2876px;top:928px;width:62px;height:22px;background:#4868bd;"></div>
<div class="t" style="left:2901.93px;top:925.5px;font-size:20.5px;line-height:27px;color:#c5bbae;letter-spacing:0.71px;-webkit-text-stroke:0.45px #c5bbae;">-6.0</div>
<div style="left:2974px;top:926px;width:6px;height:26px;background:#1f1b19;"></div>
<div style="left:2974px;top:928px;width:6px;height:2px;background:#3c3432;"></div>
<div style="left:2982px;top:926px;width:6px;height:26px;background:#1f1b19;"></div>
<div style="left:2982px;top:928px;width:6px;height:2px;background:#3c3432;"></div>
<div style="left:2428px;top:968px;width:30px;height:26px;background:#f4b465;border:2px solid #181412;"></div>
<svg style="left:2428px;top:968px" width="30" height="26" viewBox="0 0 30 26" shape-rendering="crispEdges">
<path d="M6 11h2v4h-2z M10 8h2v10h-2z M14 5h2v16h-2z M18 8h2v10h-2z M22 11h2v4h-2z" fill="#111"/>
</svg>
<div style="left:2464px;top:968px;width:70px;height:26px;background:#272220;border:2px solid #181412;"></div>
<div style="left:2466px;top:970px;width:19px;height:22px;background:#2f7088;"></div>
<div class="t" style="left:2473px;top:968.5px;font-size:19px;line-height:25px;color:#c5bbae;letter-spacing:1.1px;-webkit-text-stroke:0.45px #c5bbae;">1.00x</div>
<div style="left:2546px;top:968px;width:30px;height:26px;background:#272220;border:2px solid #181412;"></div>
<div class="t" style="left:2554.14px;top:968.5px;font-size:19px;line-height:25px;color:#c5bbae;-webkit-text-stroke:0.45px #c5bbae;">H</div>
<div style="left:2582px;top:968px;width:30px;height:26px;background:#272220;border:2px solid #181412;"></div>
<div class="t" style="left:2588.03px;top:968.5px;font-size:19px;line-height:25px;color:#c5bbae;-webkit-text-stroke:0.45px #c5bbae;">W</div>
<div style="left:16px;top:1016px;width:2996px;height:364px;background:#1b1714;border:4px solid #857b70;border-radius:10px;"></div>
<div style="left:638px;top:1034px;width:84px;height:26px;border:2px solid #5bc2d8;"></div>
<div class="t" style="left:673.35px;top:1034.5px;font-size:19px;line-height:25px;color:#5bc2d8;letter-spacing:0.63px;-webkit-text-stroke:0.45px #5bc2d8;">A</div>
<div style="left:730px;top:1034px;width:84px;height:26px;background:#f4b465;"></div>
<div class="t" style="left:765.35px;top:1034.5px;font-size:19px;line-height:25px;color:#111;letter-spacing:0.63px;-webkit-text-stroke:0.45px #111;">B</div>
<div style="left:640px;top:1073px;width:106px;height:25px;border:2px solid #4a423e;border-radius:13px;"></div>
<div class="t" style="left:647px;top:1072px;font-size:20.5px;line-height:27px;color:#f4b465;letter-spacing:0.35px;-webkit-text-stroke:0.9px #f4b465;">Copy to A</div>
<svg style="left:789px;top:1072px" width="28" height="28" viewBox="0 0 28 28" >
<circle cx="14" cy="13.5" r="12" fill="none" stroke="#4a423e" stroke-width="1.5"/><path d="M8.5 8l11 11M19.5 8l-11 11" stroke="#f4b465" stroke-width="1.8"/>
</svg>
<div class="t" style="left:645px;top:1109.5px;font-size:20.5px;line-height:27px;color:#968c80;letter-spacing:0.84px;-webkit-text-stroke:0.45px #968c80;">Target</div>
<svg style="left:0px;top:1090px" width="2400" height="280" viewBox="0 0 2400 280" shape-rendering="crispEdges">
<rect x="638" y="53" width="92" height="35" fill="#38322f"/>
<rect x="730" y="53" width="90" height="35" fill="#221d1b"/>
<rect x="638" y="91" width="92" height="35" fill="#38322f"/>
<rect x="730" y="91" width="90" height="35" fill="#221d1b"/>
<rect x="638" y="129" width="92" height="35" fill="#38322f"/>
<rect x="730" y="129" width="90" height="35" fill="#221d1b"/>
<rect x="638" y="167" width="182" height="35" fill="#221d1b"/>
<rect x="638" y="205" width="182" height="35" fill="#221d1b"/>
<rect x="638" y="243" width="182" height="29" fill="#38322f"/>
<rect x="696" y="121" width="34" height="3" fill="#6f665f"/>
<rect x="638" y="159" width="58" height="3" fill="#6f665f"/>
<rect x="822" y="10" width="158" height="2" fill="#f4b465"/>
<rect x="822" y="48" width="78" height="2" fill="#8a6a40"/>
<rect x="822" y="53" width="78" height="35" fill="#36302e"/>
<rect x="822" y="91" width="78" height="35" fill="#36302e"/>
<rect x="822" y="129" width="78" height="35" fill="#36302e"/>
<rect x="822" y="167" width="78" height="35" fill="#36302e"/>
<rect x="822" y="205" width="78" height="35" fill="#36302e"/>
<rect x="822" y="243" width="78" height="29" fill="#36302e"/>
<rect x="902" y="48" width="78" height="2" fill="#8a6a40"/>
<rect x="902" y="53" width="78" height="35" fill="#36302e"/>
<rect x="902" y="91" width="78" height="35" fill="#36302e"/>
<rect x="902" y="129" width="78" height="35" fill="#36302e"/>
<rect x="902" y="167" width="78" height="35" fill="#36302e"/>
<rect x="902" y="205" width="78" height="35" fill="#36302e"/>
<rect x="902" y="243" width="78" height="29" fill="#36302e"/>
<rect x="988" y="10" width="318" height="2" fill="#f4b465"/>
<rect x="988" y="48" width="78" height="2" fill="#8a6a40"/>
<rect x="1004" y="48" width="22" height="2" fill="#f4b465"/>
<rect x="1026" y="48" width="2" height="2" fill="#1b1714"/>
<rect x="988" y="53" width="78" height="35" fill="#36302e"/>
<rect x="988" y="91" width="78" height="35" fill="#36302e"/>
<rect x="988" y="129" width="78" height="35" fill="#36302e"/>
<rect x="988" y="167" width="78" height="35" fill="#36302e"/>
<rect x="988" y="205" width="78" height="35" fill="#36302e"/>
<rect x="988" y="243" width="78" height="29" fill="#36302e"/>
<rect x="1068" y="48" width="78" height="2" fill="#8a6a40"/>
<rect x="1084" y="48" width="22" height="2" fill="#f4b465"/>
<rect x="1106" y="48" width="2" height="2" fill="#1b1714"/>
<rect x="1068" y="53" width="78" height="35" fill="#36302e"/>
<rect x="1068" y="91" width="78" height="35" fill="#36302e"/>
<rect x="1068" y="129" width="78" height="35" fill="#36302e"/>
<rect x="1068" y="167" width="78" height="35" fill="#36302e"/>
<rect x="1068" y="205" width="78" height="35" fill="#36302e"/>
<rect x="1068" y="243" width="78" height="29" fill="#36302e"/>
<rect x="1148" y="48" width="78" height="2" fill="#8a6a40"/>
<rect x="1164" y="48" width="22" height="2" fill="#f4b465"/>
<rect x="1186" y="48" width="2" height="2" fill="#1b1714"/>
<rect x="1148" y="53" width="78" height="35" fill="#36302e"/>
<rect x="1148" y="91" width="78" height="35" fill="#36302e"/>
<rect x="1148" y="129" width="78" height="35" fill="#36302e"/>
<rect x="1148" y="167" width="78" height="35" fill="#36302e"/>
<rect x="1148" y="205" width="78" height="35" fill="#36302e"/>
<rect x="1148" y="243" width="78" height="29" fill="#36302e"/>
<rect x="1228" y="48" width="78" height="2" fill="#8a6a40"/>
<rect x="1266" y="48" width="2" height="2" fill="#1b1714"/>
<rect x="1228" y="52" width="78" height="37" fill="#1e1a18"/>
<rect x="1228" y="87" width="78" height="3" fill="#15120f"/>
<rect x="1228" y="91" width="78" height="35" fill="#36302e"/>
<rect x="1228" y="129" width="78" height="35" fill="#36302e"/>
<rect x="1228" y="167" width="78" height="35" fill="#36302e"/>
<rect x="1228" y="205" width="78" height="35" fill="#36302e"/>
<rect x="1228" y="243" width="78" height="29" fill="#36302e"/>
<rect x="1314" y="10" width="638" height="2" fill="#f4b465"/>
<rect x="1314" y="48" width="78" height="2" fill="#8a6a40"/>
<rect x="1342" y="48" width="10" height="2" fill="#f4b465"/>
<rect x="1314" y="53" width="78" height="35" fill="#36302e"/>
<rect x="1314" y="91" width="78" height="35" fill="#36302e"/>
<rect x="1314" y="129" width="78" height="35" fill="#36302e"/>
<rect x="1314" y="167" width="78" height="35" fill="#36302e"/>
<rect x="1314" y="205" width="78" height="35" fill="#36302e"/>
<rect x="1314" y="243" width="78" height="29" fill="#36302e"/>
<rect x="1394" y="48" width="78" height="2" fill="#8a6a40"/>
<rect x="1398" y="48" width="34" height="2" fill="#f4b465"/>
<rect x="1432" y="48" width="2" height="2" fill="#1b1714"/>
<rect x="1394" y="53" width="78" height="35" fill="#36302e"/>
<rect x="1394" y="91" width="78" height="35" fill="#36302e"/>
<rect x="1394" y="129" width="78" height="35" fill="#36302e"/>
<rect x="1394" y="167" width="78" height="35" fill="#36302e"/>
<rect x="1394" y="205" width="78" height="35" fill="#36302e"/>
<rect x="1394" y="243" width="78" height="29" fill="#36302e"/>
<rect x="1474" y="48" width="78" height="2" fill="#8a6a40"/>
<rect x="1474" y="53" width="78" height="35" fill="#36302e"/>
<rect x="1474" y="90" width="78" height="37" fill="#1e1a18"/>
<rect x="1474" y="125" width="78" height="3" fill="#15120f"/>
<rect x="1474" y="129" width="78" height="35" fill="#36302e"/>
<rect x="1474" y="167" width="78" height="35" fill="#36302e"/>
<rect x="1474" y="205" width="78" height="35" fill="#36302e"/>
<rect x="1474" y="243" width="78" height="29" fill="#36302e"/>
<rect x="1554" y="48" width="78" height="2" fill="#8a6a40"/>
<rect x="1554" y="53" width="78" height="35" fill="#36302e"/>
<rect x="1554" y="91" width="78" height="35" fill="#36302e"/>
<rect x="1554" y="129" width="78" height="35" fill="#36302e"/>
<rect x="1554" y="167" width="78" height="35" fill="#36302e"/>
<rect x="1554" y="205" width="78" height="35" fill="#36302e"/>
<rect x="1554" y="243" width="78" height="29" fill="#36302e"/>
<rect x="1634" y="48" width="78" height="2" fill="#8a6a40"/>
<rect x="1634" y="53" width="78" height="35" fill="#36302e"/>
<rect x="1634" y="91" width="78" height="35" fill="#36302e"/>
<rect x="1634" y="129" width="78" height="35" fill="#36302e"/>
<rect x="1634" y="167" width="78" height="35" fill="#36302e"/>
<rect x="1634" y="205" width="78" height="35" fill="#36302e"/>
<rect x="1634" y="243" width="78" height="29" fill="#36302e"/>
<rect x="1714" y="48" width="78" height="2" fill="#8a6a40"/>
<rect x="1754" y="48" width="22" height="2" fill="#f4b465"/>
<rect x="1714" y="53" width="78" height="35" fill="#36302e"/>
<rect x="1714" y="91" width="78" height="35" fill="#36302e"/>
<rect x="1714" y="129" width="78" height="35" fill="#36302e"/>
<rect x="1714" y="167" width="78" height="35" fill="#36302e"/>
<rect x="1714" y="205" width="78" height="35" fill="#36302e"/>
<rect x="1714" y="243" width="78" height="29" fill="#36302e"/>
<rect x="1794" y="48" width="78" height="2" fill="#8a6a40"/>
<rect x="1832" y="48" width="2" height="2" fill="#1b1714"/>
<rect x="1794" y="53" width="78" height="35" fill="#36302e"/>
<rect x="1794" y="90" width="78" height="37" fill="#1e1a18"/>
<rect x="1794" y="125" width="78" height="3" fill="#15120f"/>
<rect x="1794" y="129" width="78" height="35" fill="#36302e"/>
<rect x="1794" y="167" width="78" height="35" fill="#36302e"/>
<rect x="1794" y="205" width="78" height="35" fill="#36302e"/>
<rect x="1794" y="243" width="78" height="29" fill="#36302e"/>
<rect x="1874" y="48" width="78" height="2" fill="#8a6a40"/>
<rect x="1874" y="53" width="78" height="35" fill="#36302e"/>
<rect x="1874" y="91" width="78" height="35" fill="#36302e"/>
<rect x="1874" y="129" width="78" height="35" fill="#36302e"/>
<rect x="1874" y="167" width="78" height="35" fill="#36302e"/>
<rect x="1874" y="205" width="78" height="35" fill="#36302e"/>
<rect x="1874" y="243" width="78" height="29" fill="#36302e"/>
<rect x="1960" y="10" width="398" height="2" fill="#5bc2d8"/>
<rect x="1960" y="48" width="78" height="2" fill="#2f7f90"/>
<rect x="1960" y="53" width="78" height="35" fill="#36302e"/>
<rect x="1960" y="91" width="78" height="35" fill="#36302e"/>
<rect x="1960" y="129" width="78" height="35" fill="#36302e"/>
<rect x="1960" y="167" width="78" height="35" fill="#36302e"/>
<rect x="1960" y="205" width="78" height="35" fill="#36302e"/>
<rect x="1960" y="243" width="78" height="29" fill="#36302e"/>
<rect x="2040" y="48" width="78" height="2" fill="#2f7f90"/>
<rect x="2040" y="53" width="78" height="35" fill="#36302e"/>
<rect x="2040" y="91" width="78" height="35" fill="#36302e"/>
<rect x="2040" y="129" width="78" height="35" fill="#36302e"/>
<rect x="2040" y="167" width="78" height="35" fill="#36302e"/>
<rect x="2040" y="205" width="78" height="35" fill="#36302e"/>
<rect x="2040" y="243" width="78" height="29" fill="#36302e"/>
<rect x="2120" y="48" width="78" height="2" fill="#2f7f90"/>
<rect x="2136" y="48" width="22" height="2" fill="#5bc2d8"/>
<rect x="2158" y="48" width="2" height="2" fill="#1b1714"/>
<rect x="2120" y="53" width="78" height="35" fill="#36302e"/>
<rect x="2120" y="91" width="78" height="35" fill="#36302e"/>
<rect x="2120" y="129" width="78" height="35" fill="#36302e"/>
<rect x="2120" y="167" width="78" height="35" fill="#36302e"/>
<rect x="2120" y="205" width="78" height="35" fill="#36302e"/>
<rect x="2120" y="243" width="78" height="29" fill="#36302e"/>
<rect x="2200" y="48" width="78" height="2" fill="#2f7f90"/>
<rect x="2216" y="48" width="22" height="2" fill="#5bc2d8"/>
<rect x="2238" y="48" width="2" height="2" fill="#1b1714"/>
<rect x="2200" y="53" width="78" height="35" fill="#36302e"/>
<rect x="2200" y="91" width="78" height="35" fill="#36302e"/>
<rect x="2200" y="129" width="78" height="35" fill="#36302e"/>
<rect x="2200" y="167" width="78" height="35" fill="#36302e"/>
<rect x="2200" y="205" width="78" height="35" fill="#36302e"/>
<rect x="2200" y="243" width="78" height="29" fill="#36302e"/>
<rect x="2280" y="48" width="78" height="2" fill="#2f7f90"/>
<rect x="2296" y="48" width="22" height="2" fill="#5bc2d8"/>
<rect x="2318" y="48" width="2" height="2" fill="#1b1714"/>
<rect x="2280" y="53" width="78" height="35" fill="#36302e"/>
<rect x="2280" y="91" width="78" height="35" fill="#36302e"/>
<rect x="2280" y="129" width="78" height="35" fill="#36302e"/>
<rect x="2280" y="167" width="78" height="35" fill="#36302e"/>
<rect x="2280" y="205" width="78" height="35" fill="#36302e"/>
<rect x="2280" y="243" width="78" height="29" fill="#36302e"/>
</svg>
<div class="t" style="left:850.57px;top:1072px;font-size:20px;line-height:26px;color:#bfb5a8;letter-spacing:0.83px;-webkit-text-stroke:0.9px #bfb5a8;">Envelopes</div>
<div class="t" style="left:833.57px;top:1108px;font-size:20px;line-height:26px;color:#f4b465;letter-spacing:0.52px;-webkit-text-stroke:0.9px #f4b465;">A Env</div>
<div class="t" style="left:911.24px;top:1108px;font-size:20px;line-height:26px;color:#f4b465;letter-spacing:0.57px;-webkit-text-stroke:0.9px #f4b465;">M Env</div>
<div class="t" style="left:1094.17px;top:1072px;font-size:20px;line-height:26px;color:#bfb5a8;letter-spacing:0.78px;-webkit-text-stroke:0.9px #bfb5a8;">Modulation</div>
<div class="t" style="left:997.82px;top:1108px;font-size:20px;line-height:26px;color:#f4b465;letter-spacing:0.56px;-webkit-text-stroke:0.9px #f4b465;">LFO 1</div>
<div class="t" style="left:1066.44px;top:1108px;font-size:20px;line-height:26px;color:#f4b465;-webkit-text-stroke:0.9px #f4b465;">LFO1 FX</div>
<div class="t" style="left:1157.82px;top:1108px;font-size:20px;line-height:26px;color:#f4b465;letter-spacing:0.56px;-webkit-text-stroke:0.9px #f4b465;">LFO 2</div>
<div class="t" style="left:1233.14px;top:1108px;font-size:20px;line-height:26px;color:#f4b465;letter-spacing:0.54px;-webkit-text-stroke:0.9px #f4b465;">Spread</div>
<div class="t" style="left:1573.59px;top:1072px;font-size:20px;line-height:26px;color:#bfb5a8;letter-spacing:0.88px;-webkit-text-stroke:0.9px #bfb5a8;">MIDI &amp; MPE</div>
<div class="t" style="left:1338.4px;top:1108px;font-size:20px;line-height:26px;color:#f4b465;letter-spacing:0.46px;-webkit-text-stroke:0.9px #f4b465;">Vel</div>
<div class="t" style="left:1409.66px;top:1108px;font-size:20px;line-height:26px;color:#f4b465;letter-spacing:0.44px;-webkit-text-stroke:0.9px #f4b465;">Pitch</div>
<div class="t" style="left:1498.99px;top:1108px;font-size:20px;line-height:26px;color:#f4b465;letter-spacing:0.67px;-webkit-text-stroke:0.9px #f4b465;">PB</div>
<div class="t" style="left:1566.16px;top:1108px;font-size:20px;line-height:26px;color:#f4b465;letter-spacing:0.51px;-webkit-text-stroke:0.9px #f4b465;">Press</div>
<div class="t" style="left:1639.75px;top:1108px;font-size:20px;line-height:26px;color:#f4b465;letter-spacing:0.63px;-webkit-text-stroke:0.9px #f4b465;">Mod W</div>
<div class="t" style="left:1727.9px;top:1108px;font-size:20px;line-height:26px;color:#f4b465;letter-spacing:0.6px;-webkit-text-stroke:0.9px #f4b465;">Rand</div>
<div class="t" style="left:1795.76px;top:1108px;font-size:20px;line-height:26px;color:#f4b465;-webkit-text-stroke:0.9px #f4b465;">Note PB</div>
<div class="t" style="left:1889.65px;top:1108px;font-size:20px;line-height:26px;color:#f4b465;letter-spacing:0.44px;-webkit-text-stroke:0.9px #f4b465;">Slide</div>
<div class="t" style="left:2065.36px;top:1072px;font-size:20px;line-height:26px;color:#bfb5a8;letter-spacing:0.77px;-webkit-text-stroke:0.9px #bfb5a8;">A Cross Modulation</div>
<div class="t" style="left:1971.57px;top:1108px;font-size:20px;line-height:26px;color:#5bc2d8;letter-spacing:0.52px;-webkit-text-stroke:0.9px #5bc2d8;">A Env</div>
<div class="t" style="left:2049.24px;top:1108px;font-size:20px;line-height:26px;color:#5bc2d8;letter-spacing:0.57px;-webkit-text-stroke:0.9px #5bc2d8;">M Env</div>
<div class="t" style="left:2129.82px;top:1108px;font-size:20px;line-height:26px;color:#5bc2d8;letter-spacing:0.56px;-webkit-text-stroke:0.9px #5bc2d8;">LFO 1</div>
<div class="t" style="left:2198.44px;top:1108px;font-size:20px;line-height:26px;color:#5bc2d8;-webkit-text-stroke:0.9px #5bc2d8;">LFO1 FX</div>
<div class="t" style="left:2289.82px;top:1108px;font-size:20px;line-height:26px;color:#5bc2d8;letter-spacing:0.56px;-webkit-text-stroke:0.9px #5bc2d8;">LFO 2</div>
<div class="t" style="left:644.5px;top:1146px;font-size:20px;line-height:26px;color:#a89e92;letter-spacing:0.92px;-webkit-text-stroke:0.9px #a89e92;">Detune</div>
<div class="t" style="left:644.5px;top:1184px;font-size:20px;line-height:26px;color:#a89e92;letter-spacing:0.9px;-webkit-text-stroke:0.9px #a89e92;">Pitch Mod</div>
<div class="t" style="left:644.5px;top:1222px;font-size:20px;line-height:26px;color:#a89e92;letter-spacing:0.95px;-webkit-text-stroke:0.9px #a89e92;">Pitch Quant</div>
<div class="t" style="left:644.5px;top:1260px;font-size:20px;line-height:26px;color:#a89e92;letter-spacing:0.51px;-webkit-text-stroke:0.9px #a89e92;">Osc Macro 1</div>
<div class="t" style="left:644.5px;top:1298px;font-size:20px;line-height:26px;color:#a89e92;letter-spacing:0.51px;-webkit-text-stroke:0.9px #a89e92;">Osc Macro 2</div>
<div class="t" style="left:644.5px;top:1336px;font-size:20px;line-height:26px;color:#b5ab9e;letter-spacing:0.72px;-webkit-text-stroke:0.9px #b5ab9e;">Filter Freq</div>
<div class="t" style="left:1253.34px;top:1146.5px;font-size:18px;line-height:23px;color:#a89e92;letter-spacing:0.43px;-webkit-text-stroke:0.45px #a89e92;">-50</div>
<div class="t" style="left:1507.74px;top:1184.5px;font-size:18px;line-height:23px;color:#a89e92;letter-spacing:0.5px;-webkit-text-stroke:0.45px #a89e92;">7</div>
<div class="t" style="left:1822.49px;top:1184.5px;font-size:18px;line-height:23px;color:#a89e92;letter-spacing:0.5px;-webkit-text-stroke:0.45px #a89e92;">48</div>
<div style="left:8px;top:1484px;width:6px;height:7px;background:#1f1b19;border-radius:3px;"></div>
<div style="left:8px;top:1494px;width:6px;height:7px;background:#1f1b19;border-radius:3px;"></div>
<div style="left:8px;top:1504px;width:6px;height:7px;background:#1f1b19;border-radius:3px;"></div>
<div style="left:8px;top:1514px;width:6px;height:7px;background:#1f1b19;border-radius:3px;"></div>
<div style="left:8px;top:1524px;width:6px;height:7px;background:#1f1b19;border-radius:3px;"></div>
<div style="left:8px;top:1534px;width:6px;height:7px;background:#1f1b19;border-radius:3px;"></div>
<div style="left:8px;top:1544px;width:6px;height:7px;background:#1f1b19;border-radius:3px;"></div>
<div style="left:8px;top:1554px;width:6px;height:7px;background:#1f1b19;border-radius:3px;"></div>
<div style="left:8px;top:1564px;width:6px;height:7px;background:#1f1b19;border-radius:3px;"></div>
<div style="left:8px;top:1574px;width:6px;height:7px;background:#1f1b19;border-radius:3px;"></div>
<div style="left:8px;top:1584px;width:6px;height:7px;background:#1f1b19;border-radius:3px;"></div>
<div style="left:8px;top:1594px;width:6px;height:7px;background:#1f1b19;border-radius:3px;"></div>
<div style="left:8px;top:1604px;width:6px;height:7px;background:#1f1b19;border-radius:3px;"></div>
<div style="left:8px;top:1614px;width:6px;height:7px;background:#1f1b19;border-radius:3px;"></div>
<div style="left:8px;top:1624px;width:6px;height:7px;background:#1f1b19;border-radius:3px;"></div>
<div style="left:8px;top:1634px;width:6px;height:7px;background:#1f1b19;border-radius:3px;"></div>
<div style="left:8px;top:1644px;width:6px;height:7px;background:#1f1b19;border-radius:3px;"></div>
<div style="left:8px;top:1654px;width:6px;height:7px;background:#1f1b19;border-radius:3px;"></div>
<div style="left:8px;top:1664px;width:6px;height:7px;background:#1f1b19;border-radius:3px;"></div>
<div style="left:8px;top:1674px;width:6px;height:7px;background:#1f1b19;border-radius:3px;"></div>
<div style="left:8px;top:1684px;width:6px;height:7px;background:#1f1b19;border-radius:3px;"></div>
<div style="left:20px;top:1394px;width:1838px;height:376px;background:#4c4441;border-radius:6px;"></div>
<svg style="left:20px;top:1394px" width="1838" height="34" viewBox="0 0 1838 34" >
<circle cx="19" cy="17" r="12" fill="#f4b465" stroke="#1b1714" stroke-width="2"/>
<circle cx="51" cy="17" r="12" fill="#231e1c" stroke="#1b1714" stroke-width="2"/><path d="M43.5 22h15l-7.5-13z" fill="#bfb4a7"/>
<circle cx="1703" cy="17" r="5" fill="#1b1714"/>
<rect x="1742" y="4" width="26" height="26" fill="#231e1c" stroke="#1b1714" stroke-width="1"/>
<circle cx="1787" cy="17" r="12" fill="#231e1c" stroke="#1b1714" stroke-width="2"/>
<circle cx="1818.5" cy="17" r="12" fill="#231e1c" stroke="#1b1714" stroke-width="2"/>
<path d="M1781 17a6 6 0 0 1 10.5-4" fill="none" stroke="#bfb4a7" stroke-width="2"/><path d="M1793 17a6 6 0 0 1-10.5 4" fill="none" stroke="#bfb4a7" stroke-width="2"/><path d="M1789 9.5l4.5 4.5l-5.5 0.5z M1785 24.5l-4.5-4.5l5.5-0.5z" fill="#bfb4a7"/>
<path d="M1812.5 11h9l3 3v9h-12z" fill="#bfb4a7"/><rect x="1815" y="11" width="5" height="4" fill="#231e1c"/>
</svg>
<div class="t" style="left:93px;top:1398px;font-size:20px;line-height:26px;color:#c5bbae;letter-spacing:-1.3px;font-weight:700;">B Bass</div>
<div class="t" style="left:352.5px;top:1398px;font-size:20px;line-height:26px;color:#c5bbae;letter-spacing:-0.26px;font-weight:700;">Engines</div>
<div class="t" style="left:1421px;top:1398px;font-size:20px;line-height:26px;color:#c5bbae;letter-spacing:0.28px;font-weight:700;">Filters</div>
<div class="t" style="left:1596px;top:1398px;font-size:20px;line-height:26px;color:#c5bbae;letter-spacing:0.22px;font-weight:700;">Mix</div>
<div style="left:1650px;top:1398px;width:60px;height:26px;background:#231e1c;border:2px solid #1b1714;"></div>
<div class="t" style="left:1656.5px;top:1398px;font-size:20px;line-height:26px;color:#c5bbae;letter-spacing:0.95px;-webkit-text-stroke:0.45px #c5bbae;">Limit</div>
<svg style="left:1762px;top:1398px" width="26.52" height="26.52" viewBox="0 0 26.52 26.52" >
<g transform="scale(0.78)" fill="none" stroke="#c5bbae" stroke-linecap="butt">
<path d="M8.500 14.200V26.200C11 25.200 14 23 13.800 20.800C13.500 18.400 10 18.800 8.500 20.800" stroke-width="2.300" stroke-linejoin="round"/>
<path d="M18.800 8.200v10.300M23.400 7.800v10.300M16 11.900l10.200-1.200M16 15.900l10.200-1.200" stroke-width="2.300"/>
</g>
</svg>
<div style="left:670px;top:1398px;width:170px;height:26px;background:#3c3432;border-radius:4px;"></div>
<div class="t" style="left:748px;top:1398px;font-size:20px;line-height:26px;color:#c5bbae;letter-spacing:0.67px;-webkit-text-stroke:0.45px #c5bbae;">A</div>
<div style="left:844px;top:1398px;width:170px;height:32px;background:#1b1714;border-radius:5px 5px 0 0;"></div>
<div class="t" style="left:922px;top:1398px;font-size:20px;line-height:26px;color:#f4b465;letter-spacing:0.67px;-webkit-text-stroke:0.45px #f4b465;">B</div>
<div style="left:1018px;top:1398px;width:170px;height:26px;background:#3c3432;border-radius:4px;"></div>
<div class="t" style="left:1062px;top:1398px;font-size:20px;line-height:26px;color:#c5bbae;letter-spacing:1.22px;-webkit-text-stroke:0.45px #c5bbae;">Settings</div>
<div style="left:24px;top:1428px;width:230px;height:166px;background:#1b1714;border-radius:4px;"></div>
<div style="left:32px;top:1436px;width:26px;height:26px;background:#5bc2d8;"></div>
<div class="t" style="left:38px;top:1436px;font-size:20px;line-height:26px;color:#111;letter-spacing:0.67px;-webkit-text-stroke:0.45px #111;">A</div>
<div style="left:66px;top:1436px;width:180px;height:26px;background:#5bc2d8;"></div>
<div class="t" style="left:70px;top:1436px;font-size:20px;line-height:26px;color:#111;letter-spacing:0.41px;-webkit-text-stroke:0.45px #111;">Square Sync</div>
<svg style="left:226px;top:1436px" width="20" height="26" viewBox="0 0 20 26" >
<path d="M2 8h14l-7 11z" fill="#111"/>
</svg>
<svg style="left:24px;top:1428px" width="230" height="166" viewBox="0 0 230 166" >
<circle cx="23" cy="83" r="14" fill="none" stroke="#4a423e" stroke-width="1.6"/><path d="M18 83l8.5-5v10z" fill="#5bc2d8"/>
<circle cx="207" cy="83" r="14" fill="none" stroke="#4a423e" stroke-width="1.6"/><path d="M212.5 83l-8.5-5v10z" fill="#5bc2d8"/>
<path d="M86.700 83.500V55H125.500V110.900H143.700V83.500" fill="none" stroke="#5bc2d8" stroke-width="2.2"/>
<path d="M85.600 110.900L144.700 54.600" fill="none" stroke="#5bc2d8" stroke-width="2.2" stroke-dasharray="7 5.5"/>
<path d="M143.700 80v-16" fill="none" stroke="#5bc2d8" stroke-width="2.2" stroke-dasharray="5 6"/>
</svg>
<div class="t" style="left:36px;top:1560px;font-size:20px;line-height:26px;color:#5bc2d8;letter-spacing:0.93px;-webkit-text-stroke:0.45px #5bc2d8;">0 oct</div>
<div class="t" style="left:122px;top:1560px;font-size:20px;line-height:26px;color:#5bc2d8;letter-spacing:0.69px;-webkit-text-stroke:0.45px #5bc2d8;">0 st</div>
<div class="t" style="left:204px;top:1560px;font-size:20px;line-height:26px;color:#5bc2d8;letter-spacing:1.19px;-webkit-text-stroke:0.45px #5bc2d8;">0 ct</div>
<div style="left:24px;top:1598px;width:230px;height:167px;background:#1b1714;border-radius:4px;"></div>
<div style="left:32px;top:1606px;width:26px;height:26px;border:2px solid #f4b465;"></div>
<div class="t" style="left:38px;top:1606px;font-size:20px;line-height:26px;color:#f4b465;letter-spacing:0.67px;-webkit-text-stroke:0.45px #f4b465;">B</div>
<div style="left:66px;top:1606px;width:180px;height:26px;background:#958a7f;"></div>
<div class="t" style="left:70px;top:1606px;font-size:20px;line-height:26px;color:#1b1714;letter-spacing:0.14px;-webkit-text-stroke:0.45px #1b1714;">Basic Shapes</div>
<svg style="left:226px;top:1606px" width="20" height="26" viewBox="0 0 20 26" >
<path d="M2 8h14l-7 11z" fill="#111"/>
</svg>
<svg style="left:24px;top:1598px" width="230" height="167" viewBox="0 0 230 167" >
<circle cx="23" cy="83" r="14" fill="none" stroke="#4a423e" stroke-width="1.6"/><path d="M18 83l8.5-5v10z" fill="#a09589"/>
<circle cx="207" cy="83" r="14" fill="none" stroke="#4a423e" stroke-width="1.6"/><path d="M212.5 83l-8.5-5v10z" fill="#a09589"/>
<path d="M86.700 63.900V55.100H115.200V63.200H143.700V54" fill="none" stroke="#a09589" stroke-width="2.2"/>
<path d="M85.600 79.700L143.700 68.700V79.700" fill="none" stroke="#a09589" stroke-width="2.2"/>
<path d="M85.600 92.800L102 87.800L128.300 97.200L144.300 91.700" fill="none" stroke="#a09589" stroke-width="2.2"/>
<path d="M85.600 107C96 98 106 100 115 106C124 112 134 114 144.300 106" fill="none" stroke="#a09589" stroke-width="2.2"/>
</svg>
<div class="t" style="left:36px;top:1732px;font-size:20px;line-height:26px;color:#a09589;letter-spacing:0.93px;-webkit-text-stroke:0.45px #a09589;">0 oct</div>
<div class="t" style="left:122px;top:1732px;font-size:20px;line-height:26px;color:#a09589;letter-spacing:0.69px;-webkit-text-stroke:0.45px #a09589;">0 st</div>
<div class="t" style="left:204px;top:1732px;font-size:20px;line-height:26px;color:#a09589;letter-spacing:1.19px;-webkit-text-stroke:0.45px #a09589;">0 ct</div>
<div style="left:258px;top:1428px;width:272px;height:166px;background:#3c3432;border-radius:4px;"></div>
<div style="left:258px;top:1598px;width:272px;height:167px;background:#3c3432;border-radius:4px;"></div>
<div class="t" style="left:306.5px;top:1444px;font-size:20px;line-height:26px;color:#c5bbae;letter-spacing:0.37px;-webkit-text-stroke:0.45px #c5bbae;">Freq 1</div>
<div class="t" style="left:420.5px;top:1444px;font-size:20px;line-height:26px;color:#c5bbae;letter-spacing:0.37px;-webkit-text-stroke:0.45px #c5bbae;">Freq 2</div>
<div class="t" style="left:320.5px;top:1549px;font-size:20px;line-height:26px;color:#c5bbae;letter-spacing:0.4px;-webkit-text-stroke:0.45px #c5bbae;">7.1</div>
<div class="t" style="left:434.5px;top:1549px;font-size:20px;line-height:26px;color:#c5bbae;letter-spacing:0.4px;-webkit-text-stroke:0.45px #c5bbae;">4.8</div>
<div class="t" style="left:306px;top:1616px;font-size:20px;line-height:26px;color:#c5bbae;letter-spacing:0.43px;-webkit-text-stroke:0.45px #c5bbae;">Shape</div>
<div class="t" style="left:428px;top:1616px;font-size:20px;line-height:26px;color:#c5bbae;letter-spacing:0.66px;-webkit-text-stroke:0.45px #c5bbae;">Tone</div>
<div class="t" style="left:320.5px;top:1720px;font-size:20px;line-height:26px;color:#c5bbae;letter-spacing:0.4px;-webkit-text-stroke:0.45px #c5bbae;">0.0</div>
<div class="t" style="left:434.5px;top:1720px;font-size:20px;line-height:26px;color:#c5bbae;letter-spacing:0.4px;-webkit-text-stroke:0.45px #c5bbae;">0.0</div>
<svg style="left:258px;top:1428px" width="272" height="340" viewBox="0 0 272 340" >
<path d="M58.72 113.27 A35 35 0 1 1 98.88 113.27" fill="none" stroke="#1b1714" stroke-width="4.2"/><path d="M58.72 113.27 A35 35 0 0 1 49.28 103.41" fill="none" stroke="#5bc2d8" stroke-width="4.2"/><path d="M72.9 88.36L50.76 102.47" stroke="#231e1c" stroke-width="4.2" stroke-linecap="butt"/>
<path d="M172.72 113.27 A35 35 0 1 1 212.88 113.27" fill="none" stroke="#1b1714" stroke-width="4.2"/><path d="M172.72 113.27 A35 35 0 0 1 167.2 108.47" fill="none" stroke="#5bc2d8" stroke-width="4.2"/><path d="M187.68 89.37L168.48 107.28" stroke="#231e1c" stroke-width="4.2" stroke-linecap="butt"/>
<path d="M58.72 285.37 A35 35 0 1 1 98.88 285.37" fill="none" stroke="#302a28" stroke-width="4.2"/><path d="M74.78 262.43L58.72 285.37" stroke="#302a28" stroke-width="4.2" stroke-linecap="butt"/>
<path d="M172.72 285.37 A35 35 0 1 1 212.88 285.37" fill="none" stroke="#302a28" stroke-width="4.2"/><path d="M188.78 262.43L172.72 285.37" stroke="#302a28" stroke-width="4.2" stroke-linecap="butt"/>
</svg>
<div style="left:534px;top:1428px;width:798px;height:337px;background:#1b1714;border-radius:4px;"></div>
<div style="left:534px;top:1466px;width:798px;height:2px;background:#3f3835;"></div>
<div style="left:534px;top:1632px;width:798px;height:2px;background:#3f3835;"></div>
<div style="left:932px;top:1468px;width:2px;height:297px;background:#3f3835;"></div>
<div style="left:620px;top:1434px;width:34px;height:26px;border:2px solid #5bc2d8;"></div>
<svg style="left:620px;top:1434px" width="34" height="26" viewBox="0 0 34 26" >
<path d="M6 13h5M23 13h5" stroke="#5bc2d8" stroke-width="2"/><rect x="11" y="9" width="12" height="8" fill="none" stroke="#5bc2d8" stroke-width="2"/>
</svg>
<div style="left:660px;top:1434px;width:118px;height:26px;background:#f4b465;"></div>
<div class="t" style="left:670.5px;top:1434px;font-size:20px;line-height:26px;color:#1b1714;letter-spacing:0.4px;-webkit-text-stroke:0.45px #1b1714;">Envelopes</div>
<div class="t" style="left:848.5px;top:1434.5px;font-size:20px;line-height:26px;color:#f4b465;letter-spacing:-0.72px;-webkit-text-stroke:0.9px #f4b465;">LFOs</div>
<div class="t" style="left:967px;top:1434.5px;font-size:20px;line-height:26px;color:#f4b465;letter-spacing:1.26px;-webkit-text-stroke:0.9px #f4b465;">Matrix</div>
<div class="t" style="left:1082.5px;top:1434.5px;font-size:20px;line-height:26px;color:#f4b465;letter-spacing:0.45px;-webkit-text-stroke:0.9px #f4b465;">MIDI</div>
<div class="t" style="left:1192px;top:1434.5px;font-size:20px;line-height:26px;color:#f4b465;letter-spacing:-0.45px;-webkit-text-stroke:0.9px #f4b465;">MPE</div>
<div class="t" style="left:544.5px;top:1476px;font-size:20px;line-height:26px;color:#c5bbae;letter-spacing:0.63px;-webkit-text-stroke:0.9px #c5bbae;">Amp</div>
<div style="left:600px;top:1484px;width:10px;height:10px;background:#3a3431;border-radius:5px;"></div>
<div class="t" style="left:658.5px;top:1476px;font-size:20px;line-height:26px;color:#8f867b;letter-spacing:0.17px;-webkit-text-stroke:0.45px #8f867b;">Delay</div>
<div class="t" style="left:720.5px;top:1476px;font-size:20px;line-height:26px;color:#f4b465;letter-spacing:0.27px;-webkit-text-stroke:0.9px #f4b465;">0.00 ms</div>
<div class="t" style="left:827px;top:1476px;font-size:20px;line-height:26px;color:#f4b465;letter-spacing:0.3px;-webkit-text-stroke:0.9px #f4b465;">None</div>
<svg style="left:906px;top:1484px" width="14" height="12" viewBox="0 0 14 12" >
<path d="M1 3h11l-5.500 7z" fill="#f4b465"/>
</svg>
<div class="t" style="left:944.5px;top:1476px;font-size:20px;line-height:26px;color:#c5bbae;letter-spacing:1.22px;-webkit-text-stroke:0.9px #c5bbae;">Modulation</div>
<div style="left:1066px;top:1484px;width:10px;height:10px;background:#3a3431;border-radius:5px;"></div>
<div class="t" style="left:1226.5px;top:1476px;font-size:20px;line-height:26px;color:#f4b465;letter-spacing:0.55px;-webkit-text-stroke:0.9px #f4b465;">None</div>
<svg style="left:1306px;top:1484px" width="14" height="12" viewBox="0 0 14 12" >
<path d="M1 3h11l-5.500 7z" fill="#f4b465"/>
</svg>
<svg style="left:534px;top:1500px" width="798" height="130" viewBox="0 0 798 130" >
<path d="M16.6 117 L34.3 24.5 L261.2 24.5 C262 70 268 84 272.9 93 L282.2 115.6" fill="none" stroke="#f4b465" stroke-width="2.4" stroke-linejoin="round"/>
<path d="M416 116.5 L436 27 C441 70 450 84 458.9 93 L478.2 116.5 L681.8 116.5" fill="none" stroke="#f4b465" stroke-width="2.4" stroke-linejoin="round"/>
<rect x="29.3" y="19" width="10" height="10" fill="none" stroke="#5bc2d8" stroke-width="1.8"/>
<path d="M51.5 24.5l5-5l5 5l-5 5z" fill="none" stroke="#e8708a" stroke-width="1.6"/>
<rect x="70.8" y="19" width="10" height="10" fill="none" stroke="#5bc2d8" stroke-width="1.8"/>
<path d="M21.6 71l5-5l5 5l-5 5z" fill="none" stroke="#e8708a" stroke-width="1.6"/>
<path d="M267.9 93l5-5l5 5l-5 5z" fill="none" stroke="#e8708a" stroke-width="1.6"/>
<rect x="277.2" y="110.6" width="10" height="10" fill="none" stroke="#5bc2d8" stroke-width="1.8"/>
<rect x="411" y="110.6" width="10" height="10" fill="none" stroke="#5bc2d8" stroke-width="1.8"/>
<rect x="431" y="19" width="10" height="10" fill="none" stroke="#5bc2d8" stroke-width="1.8"/>
<path d="M422 71l5-5l5 5l-5 5z" fill="none" stroke="#e8708a" stroke-width="1.6"/>
<path d="M453.9 93l5-5l5 5l-5 5z" fill="none" stroke="#e8708a" stroke-width="1.6"/>
<rect x="473.2" y="110.6" width="10" height="10" fill="none" stroke="#5bc2d8" stroke-width="1.8"/>
<path d="M668.2 116.5l5-5l5 5l-5 5z" fill="none" stroke="#e8708a" stroke-width="1.6"/>
<rect x="676.8" y="110.6" width="10" height="10" fill="none" stroke="#5bc2d8" stroke-width="1.8"/>
</svg>
<div class="t" style="left:545px;top:1640.5px;font-size:20px;line-height:26px;color:#8f867b;letter-spacing:0.67px;-webkit-text-stroke:0.45px #8f867b;">A</div>
<div class="t" style="left:636.5px;top:1640.5px;font-size:20px;line-height:26px;color:#8f867b;letter-spacing:0.72px;-webkit-text-stroke:0.45px #8f867b;">D</div>
<div class="t" style="left:728.6px;top:1640.5px;font-size:20px;line-height:26px;color:#8f867b;letter-spacing:0.67px;-webkit-text-stroke:0.45px #8f867b;">S</div>
<div class="t" style="left:820.5px;top:1640.5px;font-size:20px;line-height:26px;color:#8f867b;letter-spacing:0.72px;-webkit-text-stroke:0.45px #8f867b;">R</div>
<div class="t" style="left:548.6px;top:1666px;font-size:20px;line-height:26px;color:#f4b465;letter-spacing:0.27px;-webkit-text-stroke:0.9px #f4b465;">19.0 ms</div>
<div class="t" style="left:640.5px;top:1666px;font-size:20px;line-height:26px;color:#f4b465;letter-spacing:0.24px;-webkit-text-stroke:0.9px #f4b465;">600 ms</div>
<div class="t" style="left:732px;top:1666px;font-size:20px;line-height:26px;color:#f4b465;letter-spacing:0.36px;-webkit-text-stroke:0.9px #f4b465;">0.0 dB</div>
<div class="t" style="left:824.5px;top:1666px;font-size:20px;line-height:26px;color:#f4b465;letter-spacing:0.27px;-webkit-text-stroke:0.9px #f4b465;">50.0 ms</div>
<div class="t" style="left:545px;top:1704px;font-size:20px;line-height:26px;color:#8f867b;letter-spacing:0.29px;-webkit-text-stroke:0.45px #8f867b;">A Slope</div>
<div class="t" style="left:636.5px;top:1704px;font-size:20px;line-height:26px;color:#8f867b;letter-spacing:0.12px;-webkit-text-stroke:0.45px #8f867b;">D Slope</div>
<div class="t" style="left:820.5px;top:1704px;font-size:20px;line-height:26px;color:#8f867b;letter-spacing:-0.02px;-webkit-text-stroke:0.45px #8f867b;">R Slope</div>
<div class="t" style="left:548.6px;top:1730px;font-size:20px;line-height:26px;color:#e8708a;letter-spacing:-0.23px;-webkit-text-stroke:0.9px #e8708a;">0.0 %</div>
<div class="t" style="left:640.5px;top:1730px;font-size:20px;line-height:26px;color:#e8708a;letter-spacing:-0.4px;-webkit-text-stroke:0.9px #e8708a;">50 %</div>
<div class="t" style="left:824.5px;top:1730px;font-size:20px;line-height:26px;color:#e8708a;letter-spacing:-0.4px;-webkit-text-stroke:0.9px #e8708a;">50 %</div>
<div class="t" style="left:960px;top:1640.5px;font-size:20px;line-height:26px;color:#8f867b;letter-spacing:0.67px;-webkit-text-stroke:0.45px #8f867b;">A</div>
<div class="t" style="left:1052.4px;top:1640.5px;font-size:20px;line-height:26px;color:#8f867b;letter-spacing:0.72px;-webkit-text-stroke:0.45px #8f867b;">D</div>
<div class="t" style="left:1144px;top:1640.5px;font-size:20px;line-height:26px;color:#8f867b;letter-spacing:0.67px;-webkit-text-stroke:0.45px #8f867b;">S</div>
<div class="t" style="left:1236px;top:1640.5px;font-size:20px;line-height:26px;color:#8f867b;letter-spacing:0.72px;-webkit-text-stroke:0.45px #8f867b;">R</div>
<div class="t" style="left:964.3px;top:1666px;font-size:20px;line-height:26px;color:#f4b465;letter-spacing:0.27px;-webkit-text-stroke:0.9px #f4b465;">28.9 ms</div>
<div class="t" style="left:1056.4px;top:1666px;font-size:20px;line-height:26px;color:#f4b465;letter-spacing:0.24px;-webkit-text-stroke:0.9px #f4b465;">600 ms</div>
<div class="t" style="left:1148px;top:1666px;font-size:20px;line-height:26px;color:#f4b465;letter-spacing:-0.03px;-webkit-text-stroke:0.9px #f4b465;">0.0 %</div>
<div class="t" style="left:1240.5px;top:1666px;font-size:20px;line-height:26px;color:#f4b465;letter-spacing:0.27px;-webkit-text-stroke:0.9px #f4b465;">50.0 ms</div>
<div style="left:943px;top:1713px;width:9px;height:9px;border:1.5px solid #8f867b;"></div>
<div class="t" style="left:960px;top:1704px;font-size:20px;line-height:26px;color:#8f867b;letter-spacing:1.19px;-webkit-text-stroke:0.45px #8f867b;">Initial</div>
<div class="t" style="left:1052.4px;top:1704px;font-size:20px;line-height:26px;color:#8f867b;letter-spacing:0.1px;-webkit-text-stroke:0.45px #8f867b;">Peak</div>
<div class="t" style="left:1236px;top:1704px;font-size:20px;line-height:26px;color:#8f867b;letter-spacing:0.53px;-webkit-text-stroke:0.45px #8f867b;">Final</div>
<div class="t" style="left:964.3px;top:1730px;font-size:20px;line-height:26px;color:#f4b465;letter-spacing:-0.03px;-webkit-text-stroke:0.9px #f4b465;">0.0 %</div>
<div class="t" style="left:1056.4px;top:1730px;font-size:20px;line-height:26px;color:#f4b465;letter-spacing:-0.14px;-webkit-text-stroke:0.9px #f4b465;">100 %</div>
<div class="t" style="left:1240.5px;top:1730px;font-size:20px;line-height:26px;color:#f4b465;letter-spacing:-0.03px;-webkit-text-stroke:0.9px #f4b465;">0.0 %</div>
<div style="left:1336px;top:1428px;width:230px;height:166px;background:#3c3432;border-radius:4px;"></div>
<div style="left:1344px;top:1436px;width:26px;height:26px;background:#5bc2d8;border:2px solid #1b1714;"></div>
<div class="t" style="left:1350px;top:1436px;font-size:20px;line-height:26px;color:#111;letter-spacing:0.67px;-webkit-text-stroke:0.45px #111;">A</div>
<div style="left:1378px;top:1436px;width:180px;height:26px;background:#272220;border:2px solid #181412;"></div>
<div class="t" style="left:1383px;top:1436px;font-size:20px;line-height:26px;color:#c5bbae;letter-spacing:1.21px;-webkit-text-stroke:0.45px #c5bbae;">Filther</div>
<svg style="left:1536px;top:1436px" width="20" height="26" viewBox="0 0 20 26" >
<path d="M2 8h13l-6.5 10z" fill="#bfb4a7"/>
</svg>
<div class="t" style="left:1497.33px;top:1470px;font-size:20px;line-height:26px;color:#c5bbae;letter-spacing:0.78px;-webkit-text-stroke:0.45px #c5bbae;">Q</div>
<div style="left:1466px;top:1496px;width:78px;height:26px;background:#272220;border:2px solid #181412;"></div>
<div style="left:1468px;top:1498px;width:36px;height:22px;background:#2f7088;"></div>
<div class="t" style="left:1484px;top:1496px;font-size:20px;line-height:26px;color:#c5bbae;letter-spacing:0.27px;-webkit-text-stroke:0.45px #c5bbae;">47.7</div>
<div class="t" style="left:1480.5px;top:1528px;font-size:20px;line-height:26px;color:#c5bbae;letter-spacing:0.67px;-webkit-text-stroke:0.45px #c5bbae;">Drive</div>
<div style="left:1466px;top:1554px;width:78px;height:26px;background:#272220;border:2px solid #181412;"></div>
<div class="t" style="left:1489.5px;top:1554px;font-size:20px;line-height:26px;color:#c5bbae;letter-spacing:0.4px;-webkit-text-stroke:0.45px #c5bbae;">0.0</div>
<div class="t" style="left:1366.5px;top:1552px;font-size:20px;line-height:26px;color:#c5bbae;letter-spacing:0.11px;-webkit-text-stroke:0.45px #c5bbae;">262 Hz</div>
<div style="left:1336px;top:1598px;width:230px;height:167px;background:#3c3432;border-radius:4px;"></div>
<div style="left:1344px;top:1606px;width:26px;height:26px;background:#958a7f;border:2px solid #1b1714;"></div>
<div class="t" style="left:1350px;top:1606px;font-size:20px;line-height:26px;color:#4c4441;letter-spacing:0.67px;-webkit-text-stroke:0.45px #4c4441;">B</div>
<div style="left:1378px;top:1606px;width:180px;height:26px;background:#272220;border:2px solid #181412;"></div>
<div class="t" style="left:1383px;top:1606px;font-size:20px;line-height:26px;color:#c5bbae;letter-spacing:-0.27px;-webkit-text-stroke:0.45px #c5bbae;">SVF 12dB</div>
<svg style="left:1536px;top:1606px" width="20" height="26" viewBox="0 0 20 26" >
<path d="M2 8h13l-6.5 10z" fill="#bfb4a7"/>
</svg>
<div class="t" style="left:1497.33px;top:1642px;font-size:20px;line-height:26px;color:#c5bbae;letter-spacing:0.78px;-webkit-text-stroke:0.45px #c5bbae;">Q</div>
<div style="left:1466px;top:1668px;width:78px;height:26px;background:#272220;border:2px solid #181412;"></div>
<div class="t" style="left:1489.5px;top:1668px;font-size:20px;line-height:26px;color:#c5bbae;letter-spacing:0.4px;-webkit-text-stroke:0.45px #c5bbae;">0.0</div>
<div class="t" style="left:1468.5px;top:1700px;font-size:20px;line-height:26px;color:#c5bbae;letter-spacing:0.1px;-webkit-text-stroke:0.45px #c5bbae;">L-B-H-N</div>
<div style="left:1466px;top:1726px;width:78px;height:26px;background:#272220;border:2px solid #181412;"></div>
<div class="t" style="left:1489.5px;top:1726px;font-size:20px;line-height:26px;color:#c5bbae;letter-spacing:0.4px;-webkit-text-stroke:0.45px #c5bbae;">0.0</div>
<div class="t" style="left:1357.5px;top:1724px;font-size:20px;line-height:26px;color:#c5bbae;letter-spacing:0.38px;-webkit-text-stroke:0.45px #c5bbae;">20.5 kHz</div>
<svg style="left:1336px;top:1428px" width="230" height="340" viewBox="0 0 230 340" >
<path d="M42.82 116.47 A35 35 0 1 1 82.98 116.47" fill="none" stroke="#1b1714" stroke-width="4.2"/><path d="M42.82 116.47 A35 35 0 0 1 42.82 59.13" fill="none" stroke="#5bc2d8" stroke-width="4.2"/><path d="M59.89 83.5L43.83 60.56" stroke="#1b1714" stroke-width="4.2" stroke-linecap="butt"/>
<path d="M42.82 290.17 A35 35 0 1 1 82.98 290.17" fill="none" stroke="#81786f" stroke-width="4.2"/><path d="M65.91 265.8L82.98 290.17" stroke="#231e1c" stroke-width="4.2" stroke-linecap="butt"/>
</svg>
<div style="left:1570px;top:1428px;width:166px;height:166px;background:#3c3432;border-radius:4px;"></div>
<div style="left:1578px;top:1436px;width:74px;height:26px;background:#272220;border:2px solid #181412;"></div>
<div class="t" style="left:1607.42px;top:1436px;font-size:20px;line-height:26px;color:#c5bbae;letter-spacing:0.72px;-webkit-text-stroke:0.45px #c5bbae;">C</div>
<div class="t" style="left:1592px;top:1476px;font-size:20px;line-height:26px;color:#c5bbae;letter-spacing:0.66px;-webkit-text-stroke:0.45px #c5bbae;">Tone</div>
<div class="t" style="left:1592.5px;top:1560px;font-size:20px;line-height:26px;color:#c5bbae;letter-spacing:0.52px;-webkit-text-stroke:0.45px #c5bbae;">0.00</div>
<div class="t" style="left:1660px;top:1560px;font-size:20px;line-height:26px;color:#c5bbae;letter-spacing:0.22px;-webkit-text-stroke:0.45px #c5bbae;">-3.0 dB</div>
<div style="left:1684px;top:1438px;width:8px;height:122px;background:#1b1714;"></div>
<div style="left:1694px;top:1438px;width:8px;height:122px;background:#1b1714;"></div>
<div style="left:1684px;top:1547px;width:8px;height:12px;background:#5bc2d8;"></div>
<div style="left:1694px;top:1547px;width:8px;height:12px;background:#5bc2d8;"></div>
<svg style="left:1570px;top:1428px" width="166" height="166" viewBox="0 0 166 166" >
<path d="M30.46 131.48 A25 25 0 1 1 59.14 131.48" fill="none" stroke="#1b1714" stroke-width="4"/><path d="M44.8 111L44.8 84.75" stroke="#1b1714" stroke-width="4" stroke-linecap="butt"/>
<path d="M38 74.5h14l-7 7z" fill="#1b1714"/>
<path d="M153 45v19l-18-9.500z" fill="#3c3432" stroke="#8f867b" stroke-width="1.6"/>
</svg>
<div style="left:1570px;top:1598px;width:166px;height:167px;background:#3c3432;border-radius:4px;"></div>
<div style="left:1578px;top:1606px;width:74px;height:26px;background:#272220;border:2px solid #181412;"></div>
<div class="t" style="left:1607.42px;top:1606px;font-size:20px;line-height:26px;color:#c5bbae;letter-spacing:0.72px;-webkit-text-stroke:0.45px #c5bbae;">C</div>
<div class="t" style="left:1592px;top:1648px;font-size:20px;line-height:26px;color:#c5bbae;letter-spacing:0.66px;-webkit-text-stroke:0.45px #c5bbae;">Tone</div>
<div class="t" style="left:1592.5px;top:1732px;font-size:20px;line-height:26px;color:#c5bbae;letter-spacing:0.52px;-webkit-text-stroke:0.45px #c5bbae;">0.00</div>
<div class="t" style="left:1660px;top:1732px;font-size:20px;line-height:26px;color:#c5bbae;letter-spacing:0.22px;-webkit-text-stroke:0.45px #c5bbae;">-3.0 dB</div>
<div style="left:1684px;top:1608px;width:8px;height:122px;background:#1b1714;"></div>
<div style="left:1694px;top:1608px;width:8px;height:122px;background:#1b1714;"></div>
<svg style="left:1570px;top:1598px" width="166" height="167" viewBox="0 0 166 167" >
<path d="M30.46 133.48 A25 25 0 1 1 59.14 133.48" fill="none" stroke="#302a28" stroke-width="4"/><path d="M44.8 113L44.8 86.75" stroke="#302a28" stroke-width="4" stroke-linecap="butt"/>
<path d="M38 76.5h14l-7 7z" fill="#302a28"/>
<path d="M153 45v19l-18-9.500z" fill="#3c3432" stroke="#8f867b" stroke-width="1.6"/>
</svg>
<div style="left:1740px;top:1428px;width:114px;height:337px;background:#3c3432;border-radius:4px;"></div>
<div style="left:1748px;top:1437px;width:98px;height:25px;background:#f4b465;border:2px solid #1b1714;"></div>
<div class="t" style="left:1770px;top:1436.5px;font-size:20px;line-height:26px;color:#111;letter-spacing:0.99px;-webkit-text-stroke:0.45px #111;">Mono</div>
<div style="left:1748px;top:1468px;width:98px;height:26px;background:#f4b465;border:2px solid #1b1714;"></div>
<div class="t" style="left:1764.5px;top:1468px;font-size:20px;line-height:26px;color:#111;letter-spacing:0.64px;-webkit-text-stroke:0.45px #111;">Legato</div>
<div class="t" style="left:1748.5px;top:1500px;font-size:20px;line-height:26px;color:#c5bbae;letter-spacing:0.59px;-webkit-text-stroke:0.9px #c5bbae;">Spread</div>
<div style="left:1748px;top:1526px;width:98px;height:26px;background:#272220;border:2px solid #181412;"></div>
<div class="t" style="left:1771.5px;top:1526px;font-size:20px;line-height:26px;color:#c5bbae;letter-spacing:-0.03px;-webkit-text-stroke:0.45px #c5bbae;">0.0 %</div>
<div class="t" style="left:1748.5px;top:1558px;font-size:20px;line-height:26px;color:#c5bbae;letter-spacing:0.8px;-webkit-text-stroke:0.9px #c5bbae;">Stack</div>
<div style="left:1748px;top:1584px;width:98px;height:26px;background:#272220;border:2px solid #181412;"></div>
<div class="t" style="left:1753px;top:1584px;font-size:20px;line-height:26px;color:#c5bbae;letter-spacing:1.56px;-webkit-text-stroke:0.45px #c5bbae;">Off</div>
<svg style="left:1824px;top:1584px" width="20" height="26" viewBox="0 0 20 26" >
<path d="M2 8h13l-6.5 10z" fill="#bfb4a7"/>
</svg>
<div style="left:1746px;top:1618px;width:102px;height:2px;background:#4c4441;"></div>
<div class="t" style="left:1748.5px;top:1624px;font-size:20px;line-height:26px;color:#c5bbae;letter-spacing:0.67px;-webkit-text-stroke:0.9px #c5bbae;">Drive</div>
<div style="left:1748px;top:1650px;width:98px;height:26px;background:#272220;border:2px solid #181412;"></div>
<div style="left:1750px;top:1652px;width:86px;height:22px;background:#2f7088;"></div>
<div class="t" style="left:1773.5px;top:1650px;font-size:20px;line-height:26px;color:#c5bbae;letter-spacing:-0.15px;-webkit-text-stroke:0.45px #c5bbae;">91 %</div>
<div class="t" style="left:1750px;top:1684px;font-size:20px;line-height:26px;color:#c5bbae;letter-spacing:0.72px;-webkit-text-stroke:0.9px #c5bbae;">Volume</div>
<svg style="left:1740px;top:1700px" width="114" height="66" viewBox="0 0 114 66" >
<path d="M18.96 47.04 A17.5 17.5 0 1 1 46.23 29.66" fill="none" stroke="#1b1714" stroke-width="4"/><path d="M18.96 47.04 A17.5 17.5 0 0 1 34.99 16.26" fill="none" stroke="#5bc2d8" stroke-width="4"/><path d="M29 32.7L34.99 16.26" stroke="#1b1714" stroke-width="4" stroke-linecap="butt"/>
</svg>
<div class="t" style="left:1776.6px;top:1736px;font-size:20px;line-height:26px;color:#c5bbae;letter-spacing:0.22px;-webkit-text-stroke:0.45px #c5bbae;">-0.4 dB</div>
<div style="left:1862px;top:1475px;width:4px;height:214px;background:#1f1b19;"></div>
<div style="left:1862px;top:1496px;width:4px;height:2px;background:#3c3432;"></div>
<div style="left:1862px;top:1611px;width:4px;height:78px;background:#72f25f;"></div>
<div style="left:1862px;top:1544px;width:4px;height:2px;background:#e8e34a;"></div>
<div style="left:1868px;top:1475px;width:4px;height:214px;background:#1f1b19;"></div>
<div style="left:1868px;top:1496px;width:4px;height:2px;background:#3c3432;"></div>
<div style="left:1868px;top:1611px;width:4px;height:78px;background:#72f25f;"></div>
<div style="left:1868px;top:1544px;width:4px;height:2px;background:#e8e34a;"></div>
<div style="left:2334px;top:1475px;width:4px;height:214px;background:#1f1b19;"></div>
<div style="left:2334px;top:1496px;width:4px;height:2px;background:#3c3432;"></div>
<div style="left:2334px;top:1584px;width:4px;height:105px;background:#72f25f;"></div>
<div style="left:2334px;top:1520px;width:4px;height:2px;background:#f4b465;"></div>
<div style="left:2340px;top:1475px;width:4px;height:214px;background:#1f1b19;"></div>
<div style="left:2340px;top:1496px;width:4px;height:2px;background:#3c3432;"></div>
<div style="left:2340px;top:1584px;width:4px;height:105px;background:#72f25f;"></div>
<div style="left:2340px;top:1520px;width:4px;height:2px;background:#f4b465;"></div>
<div style="left:1876px;top:1394px;width:454px;height:376px;background:#3c3432;border-radius:6px;"></div>
<div style="left:1876px;top:1394px;width:454px;height:34px;background:#4c4441;border-radius:6px 6px 0 0;"></div>
<svg style="left:1876px;top:1394px" width="454" height="34" viewBox="0 0 454 34" >
<circle cx="19" cy="17" r="12" fill="#f4b465" stroke="#1b1714" stroke-width="2"/>
<circle cx="53" cy="17" r="12" fill="#231e1c" stroke="#1b1714" stroke-width="2"/><path d="M45.5 12h15l-7.5 13z" fill="#bfb4a7"/>
<circle cx="402.6" cy="17" r="12" fill="#231e1c" stroke="#1b1714" stroke-width="2"/>
<circle cx="435" cy="17" r="12" fill="#231e1c" stroke="#1b1714" stroke-width="2"/>
<g transform="translate(-1384.4,0)"><path d="M1781 17a6 6 0 0 1 10.5-4" fill="none" stroke="#bfb4a7" stroke-width="2"/><path d="M1793 17a6 6 0 0 1-10.5 4" fill="none" stroke="#bfb4a7" stroke-width="2"/><path d="M1789 9.5l4.5 4.5l-5.5 0.5z M1785 24.5l-4.5-4.5l5.5-0.5z" fill="#bfb4a7"/></g>
<g transform="translate(-1383.5,0)"><path d="M1812.5 11h9l3 3v9h-12z" fill="#bfb4a7"/><rect x="1815" y="11" width="5" height="4" fill="#231e1c"/></g>
</svg>
<div class="t" style="left:1950.5px;top:1398px;font-size:20px;line-height:26px;color:#c5bbae;letter-spacing:0.68px;font-weight:700;">Saturator</div>
<div style="left:1884px;top:1436px;width:438px;height:218px;background:#1b1714;border-radius:4px;"></div>
<div style="left:1892px;top:1444px;width:210px;height:26px;background:#5bc2d8;"></div>
<div class="t" style="left:1897px;top:1444px;font-size:20px;line-height:26px;color:#111;letter-spacing:0.23px;-webkit-text-stroke:0.45px #111;">Bass Shaper</div>
<svg style="left:2083px;top:1444px" width="20" height="26" viewBox="0 0 20 26" >
<path d="M2 8h14l-7 11z" fill="#111"/>
</svg>
<div class="t" style="left:2135px;top:1444px;font-size:20px;line-height:26px;color:#8f867b;letter-spacing:0.79px;-webkit-text-stroke:0.45px #8f867b;">Threshold</div>
<div class="t" style="left:2242.5px;top:1444px;font-size:20px;line-height:26px;color:#5bc2d8;letter-spacing:0.35px;-webkit-text-stroke:0.45px #5bc2d8;">-50 dB</div>
<div style="left:1892px;top:1478px;width:422px;height:134px;border:2px solid #3f3835;"></div>
<div style="left:1894px;top:1544px;width:418px;height:2px;background:#3f3835;"></div>
<div style="left:2100px;top:1480px;width:2px;height:130px;background:#1f3a3f;"></div>
<div style="left:2102px;top:1480px;width:2px;height:130px;background:#4a4744;"></div>
<svg style="left:1892px;top:1478px" width="422" height="134" viewBox="0 0 422 134" >
<path d="M2 108.5C90 103 150 92 211 65.500C270 41 330 30 419 25.500" fill="none" stroke="#5bc2d8" stroke-width="2.6"/>
</svg>
<div class="t" style="left:1921px;top:1620.5px;font-size:20px;line-height:26px;color:#5bc2d8;letter-spacing:0.2px;-webkit-text-stroke:0.45px #5bc2d8;">No Clip</div>
<svg style="left:2016px;top:1628px" width="14" height="12" viewBox="0 0 14 12" >
<path d="M1 3h11l-5.500 7z" fill="#5bc2d8"/>
</svg>
<div style="left:2062px;top:1620px;width:82px;height:26px;border:2px solid #f4b465;"></div>
<div class="t" style="left:2077px;top:1620px;font-size:20px;line-height:26px;color:#f4b465;letter-spacing:0.84px;-webkit-text-stroke:0.45px #f4b465;">Color</div>
<div class="t" style="left:2169px;top:1620.5px;font-size:20px;line-height:26px;color:#8f867b;letter-spacing:0.27px;-webkit-text-stroke:0.45px #8f867b;">Amt Lo</div>
<div class="t" style="left:2244.5px;top:1620.5px;font-size:20px;line-height:26px;color:#8f867b;letter-spacing:-0.03px;-webkit-text-stroke:0.45px #8f867b;">0.0 %</div>
<div class="t" style="left:1942.5px;top:1662px;font-size:20px;line-height:26px;color:#c5bbae;letter-spacing:0.67px;-webkit-text-stroke:0.9px #c5bbae;">Drive</div>
<div class="t" style="left:2068.5px;top:1662px;font-size:20px;line-height:26px;color:#c5bbae;letter-spacing:1.49px;-webkit-text-stroke:0.9px #c5bbae;">Output</div>
<div class="t" style="left:2198.5px;top:1662px;font-size:20px;line-height:26px;color:#c5bbae;letter-spacing:1.45px;-webkit-text-stroke:0.9px #c5bbae;">Dry/Wet</div>
<div class="t" style="left:1936.5px;top:1734px;font-size:20px;line-height:26px;color:#c5bbae;letter-spacing:0.2px;-webkit-text-stroke:0.45px #c5bbae;">9.1 dB</div>
<div class="t" style="left:2072.5px;top:1734px;font-size:20px;line-height:26px;color:#c5bbae;letter-spacing:0.2px;-webkit-text-stroke:0.45px #c5bbae;">0.0 dB</div>
<div class="t" style="left:2210.5px;top:1734px;font-size:20px;line-height:26px;color:#c5bbae;letter-spacing:-0.14px;-webkit-text-stroke:0.45px #c5bbae;">100 %</div>
<svg style="left:1876px;top:1680px" width="454" height="70" viewBox="0 0 454 70" >
<path d="M77.03 52.46 A24 24 0 1 1 104.57 52.46" fill="none" stroke="#1b1714" stroke-width="4.2"/><path d="M77.03 52.46 A24 24 0 1 1 105.24 13.63" fill="none" stroke="#5bc2d8" stroke-width="4.2"/><path d="M90.8 32.8L105.24 13.63" stroke="#1b1714" stroke-width="4.2" stroke-linecap="butt"/>
<path d="M213.23 52.46 A24 24 0 1 1 240.77 52.46" fill="none" stroke="#5bc2d8" stroke-width="4.2"/><path d="M227 32.8L239 53.58" stroke="#1b1714" stroke-width="4.2" stroke-linecap="butt"/>
<path d="M349.63 52.46 A24 24 0 1 1 377.17 52.46" fill="none" stroke="#5bc2d8" stroke-width="4.2"/><path d="M363.4 32.8L375.4 53.58" stroke="#1b1714" stroke-width="4.2" stroke-linecap="butt"/>
</svg>
<div style="left:2348px;top:1394px;width:660px;height:376px;background:#3c3432;border-radius:6px;"></div>
<div class="t" style="left:2560.5px;top:1568px;font-size:20px;line-height:26px;color:#c5bbae;letter-spacing:0.82px;-webkit-text-stroke:0.45px #c5bbae;">Drop Audio Effects Here</div>
<svg style="left:22px;top:1790px" width="34" height="34" viewBox="0 0 34 34" >
<circle cx="16.800" cy="17" r="15" fill="#4c4440"/><rect x="15" y="14.200" width="3.800" height="11.600" fill="#2e2926"/><rect x="15" y="8.200" width="3.800" height="3.500" fill="#2e2926"/>
</svg>
<div style="left:86px;top:1788px;width:2004px;height:38px;background:#3c3432;border-radius:5px;"></div>
<div class="t" style="left:98.5px;top:1794px;font-size:20px;line-height:26px;color:#c5bbae;letter-spacing:0.75px;-webkit-text-stroke:0.45px #c5bbae;">Time Selection</div>
<div class="t" style="left:265px;top:1794px;font-size:20px;line-height:26px;color:#c5bbae;letter-spacing:0.93px;-webkit-text-stroke:0.45px #c5bbae;">Start: 12.1.1</div>
<div class="t" style="left:410px;top:1794px;font-size:20px;line-height:26px;color:#c5bbae;letter-spacing:0.34px;-webkit-text-stroke:0.45px #c5bbae;">End: 16.1.1</div>
<div class="t" style="left:541px;top:1794px;font-size:20px;line-height:26px;color:#c5bbae;letter-spacing:0.75px;-webkit-text-stroke:0.45px #c5bbae;">Length: 4.0.0  (Duration: 0:07:007)</div>
<div style="left:2108px;top:1788px;width:38px;height:38px;background:#3c3432;border-radius:5px 0 0 5px;"></div>
<svg style="left:2108px;top:1788px" width="38" height="38" viewBox="0 0 38 38" >
<path d="M14 12l12 7l-12 7z" fill="#bfb4a7"/>
</svg>
<div style="left:2148px;top:1788px;width:400px;height:38px;background:#443c39;border-radius:0 5px 5px 0;"></div>
<div style="left:2566px;top:1788px;width:38px;height:38px;background:#f4b465;border-radius:5px 0 0 5px;"></div>
<svg style="left:2566px;top:1788px" width="38" height="38" viewBox="0 0 38 38" >
<path d="M12 25h14l-7-12z" fill="#111"/>
</svg>
<div style="left:2604px;top:1788px;width:76px;height:38px;background:#3c3432;"></div>
<div class="t" style="left:2619px;top:1794px;font-size:20px;line-height:26px;color:#c5bbae;letter-spacing:-1.2px;font-weight:700;">Bass</div>
<div style="left:2676px;top:1784px;width:238px;height:46px;background:#1b1714;border:4px solid #857b70;border-radius:9px;"></div>
<div style="left:2680px;top:1788px;width:230px;height:38px;overflow:hidden;border-radius:5px;background:#2e2926;"><div style="left:-2px;top:-139.400px;width:3024px;height:1840px;transform:scale(0.1);transform-origin:0 0;">
<div style="left:8px;top:1484px;width:6px;height:7px;background:#1f1b19;border-radius:3px;"></div>
<div style="left:8px;top:1494px;width:6px;height:7px;background:#1f1b19;border-radius:3px;"></div>
<div style="left:8px;top:1504px;width:6px;height:7px;background:#1f1b19;border-radius:3px;"></div>
<div style="left:8px;top:1514px;width:6px;height:7px;background:#1f1b19;border-radius:3px;"></div>
<div style="left:8px;top:1524px;width:6px;height:7px;background:#1f1b19;border-radius:3px;"></div>
<div style="left:8px;top:1534px;width:6px;height:7px;background:#1f1b19;border-radius:3px;"></div>
<div style="left:8px;top:1544px;width:6px;height:7px;background:#1f1b19;border-radius:3px;"></div>
<div style="left:8px;top:1554px;width:6px;height:7px;background:#1f1b19;border-radius:3px;"></div>
<div style="left:8px;top:1564px;width:6px;height:7px;background:#1f1b19;border-radius:3px;"></div>
<div style="left:8px;top:1574px;width:6px;height:7px;background:#1f1b19;border-radius:3px;"></div>
<div style="left:8px;top:1584px;width:6px;height:7px;background:#1f1b19;border-radius:3px;"></div>
<div style="left:8px;top:1594px;width:6px;height:7px;background:#1f1b19;border-radius:3px;"></div>
<div style="left:8px;top:1604px;width:6px;height:7px;background:#1f1b19;border-radius:3px;"></div>
<div style="left:8px;top:1614px;width:6px;height:7px;background:#1f1b19;border-radius:3px;"></div>
<div style="left:8px;top:1624px;width:6px;height:7px;background:#1f1b19;border-radius:3px;"></div>
<div style="left:8px;top:1634px;width:6px;height:7px;background:#1f1b19;border-radius:3px;"></div>
<div style="left:8px;top:1644px;width:6px;height:7px;background:#1f1b19;border-radius:3px;"></div>
<div style="left:8px;top:1654px;width:6px;height:7px;background:#1f1b19;border-radius:3px;"></div>
<div style="left:8px;top:1664px;width:6px;height:7px;background:#1f1b19;border-radius:3px;"></div>
<div style="left:8px;top:1674px;width:6px;height:7px;background:#1f1b19;border-radius:3px;"></div>
<div style="left:8px;top:1684px;width:6px;height:7px;background:#1f1b19;border-radius:3px;"></div>
<div style="left:20px;top:1394px;width:1838px;height:376px;background:#4c4441;border-radius:6px;"></div>
<svg style="left:20px;top:1394px" width="1838" height="34" viewBox="0 0 1838 34" >
<circle cx="19" cy="17" r="12" fill="#f4b465" stroke="#1b1714" stroke-width="2"/>
<circle cx="51" cy="17" r="12" fill="#231e1c" stroke="#1b1714" stroke-width="2"/><path d="M43.5 22h15l-7.5-13z" fill="#bfb4a7"/>
<circle cx="1703" cy="17" r="5" fill="#1b1714"/>
<rect x="1742" y="4" width="26" height="26" fill="#231e1c" stroke="#1b1714" stroke-width="1"/>
<circle cx="1787" cy="17" r="12" fill="#231e1c" stroke="#1b1714" stroke-width="2"/>
<circle cx="1818.5" cy="17" r="12" fill="#231e1c" stroke="#1b1714" stroke-width="2"/>
<path d="M1781 17a6 6 0 0 1 10.5-4" fill="none" stroke="#bfb4a7" stroke-width="2"/><path d="M1793 17a6 6 0 0 1-10.5 4" fill="none" stroke="#bfb4a7" stroke-width="2"/><path d="M1789 9.5l4.5 4.5l-5.5 0.5z M1785 24.5l-4.5-4.5l5.5-0.5z" fill="#bfb4a7"/>
<path d="M1812.5 11h9l3 3v9h-12z" fill="#bfb4a7"/><rect x="1815" y="11" width="5" height="4" fill="#231e1c"/>
</svg>
<div class="t" style="left:93px;top:1398px;font-size:20px;line-height:26px;color:#c5bbae;letter-spacing:-1.3px;font-weight:700;">B Bass</div>
<div class="t" style="left:352.5px;top:1398px;font-size:20px;line-height:26px;color:#c5bbae;letter-spacing:-0.26px;font-weight:700;">Engines</div>
<div class="t" style="left:1421px;top:1398px;font-size:20px;line-height:26px;color:#c5bbae;letter-spacing:0.28px;font-weight:700;">Filters</div>
<div class="t" style="left:1596px;top:1398px;font-size:20px;line-height:26px;color:#c5bbae;letter-spacing:0.22px;font-weight:700;">Mix</div>
<div style="left:1650px;top:1398px;width:60px;height:26px;background:#231e1c;border:2px solid #1b1714;"></div>
<div class="t" style="left:1656.5px;top:1398px;font-size:20px;line-height:26px;color:#c5bbae;letter-spacing:0.95px;-webkit-text-stroke:2px #c5bbae;">Limit</div>
<svg style="left:1762px;top:1398px" width="26.52" height="26.52" viewBox="0 0 26.52 26.52" >
<g transform="scale(0.78)" fill="none" stroke="#c5bbae" stroke-linecap="butt">
<path d="M8.500 14.200V26.200C11 25.200 14 23 13.800 20.800C13.500 18.400 10 18.800 8.500 20.800" stroke-width="2.300" stroke-linejoin="round"/>
<path d="M18.800 8.200v10.300M23.400 7.800v10.300M16 11.900l10.200-1.200M16 15.900l10.200-1.200" stroke-width="2.300"/>
</g>
</svg>
<div style="left:670px;top:1398px;width:170px;height:26px;background:#3c3432;border-radius:4px;"></div>
<div class="t" style="left:748px;top:1398px;font-size:20px;line-height:26px;color:#c5bbae;letter-spacing:0.67px;-webkit-text-stroke:2px #c5bbae;">A</div>
<div style="left:844px;top:1398px;width:170px;height:32px;background:#1b1714;border-radius:5px 5px 0 0;"></div>
<div class="t" style="left:922px;top:1398px;font-size:20px;line-height:26px;color:#f4b465;letter-spacing:0.67px;-webkit-text-stroke:2px #f4b465;">B</div>
<div style="left:1018px;top:1398px;width:170px;height:26px;background:#3c3432;border-radius:4px;"></div>
<div class="t" style="left:1062px;top:1398px;font-size:20px;line-height:26px;color:#c5bbae;letter-spacing:1.22px;-webkit-text-stroke:2px #c5bbae;">Settings</div>
<div style="left:24px;top:1428px;width:230px;height:166px;background:#1b1714;border-radius:4px;"></div>
<div style="left:32px;top:1436px;width:26px;height:26px;background:#5bc2d8;"></div>
<div class="t" style="left:38px;top:1436px;font-size:20px;line-height:26px;color:#111;letter-spacing:0.67px;-webkit-text-stroke:2px #111;">A</div>
<div style="left:66px;top:1436px;width:180px;height:26px;background:#5bc2d8;"></div>
<div class="t" style="left:70px;top:1436px;font-size:20px;line-height:26px;color:#111;letter-spacing:0.41px;-webkit-text-stroke:2px #111;">Square Sync</div>
<svg style="left:226px;top:1436px" width="20" height="26" viewBox="0 0 20 26" >
<path d="M2 8h14l-7 11z" fill="#111"/>
</svg>
<svg style="left:24px;top:1428px" width="230" height="166" viewBox="0 0 230 166" >
<circle cx="23" cy="83" r="14" fill="none" stroke="#4a423e" stroke-width="1.6"/><path d="M18 83l8.5-5v10z" fill="#5bc2d8"/>
<circle cx="207" cy="83" r="14" fill="none" stroke="#4a423e" stroke-width="1.6"/><path d="M212.5 83l-8.5-5v10z" fill="#5bc2d8"/>
<path d="M86.700 83.500V55H125.500V110.900H143.700V83.500" fill="none" stroke="#5bc2d8" stroke-width="2.2"/>
<path d="M85.600 110.900L144.700 54.600" fill="none" stroke="#5bc2d8" stroke-width="2.2" stroke-dasharray="7 5.5"/>
<path d="M143.700 80v-16" fill="none" stroke="#5bc2d8" stroke-width="2.2" stroke-dasharray="5 6"/>
</svg>
<div class="t" style="left:36px;top:1560px;font-size:20px;line-height:26px;color:#5bc2d8;letter-spacing:0.93px;-webkit-text-stroke:2px #5bc2d8;">0 oct</div>
<div class="t" style="left:122px;top:1560px;font-size:20px;line-height:26px;color:#5bc2d8;letter-spacing:0.69px;-webkit-text-stroke:2px #5bc2d8;">0 st</div>
<div class="t" style="left:204px;top:1560px;font-size:20px;line-height:26px;color:#5bc2d8;letter-spacing:1.19px;-webkit-text-stroke:2px #5bc2d8;">0 ct</div>
<div style="left:24px;top:1598px;width:230px;height:167px;background:#1b1714;border-radius:4px;"></div>
<div style="left:32px;top:1606px;width:26px;height:26px;border:2px solid #f4b465;"></div>
<div class="t" style="left:38px;top:1606px;font-size:20px;line-height:26px;color:#f4b465;letter-spacing:0.67px;-webkit-text-stroke:2px #f4b465;">B</div>
<div style="left:66px;top:1606px;width:180px;height:26px;background:#958a7f;"></div>
<div class="t" style="left:70px;top:1606px;font-size:20px;line-height:26px;color:#1b1714;letter-spacing:0.14px;-webkit-text-stroke:2px #1b1714;">Basic Shapes</div>
<svg style="left:226px;top:1606px" width="20" height="26" viewBox="0 0 20 26" >
<path d="M2 8h14l-7 11z" fill="#111"/>
</svg>
<svg style="left:24px;top:1598px" width="230" height="167" viewBox="0 0 230 167" >
<circle cx="23" cy="83" r="14" fill="none" stroke="#4a423e" stroke-width="1.6"/><path d="M18 83l8.5-5v10z" fill="#a09589"/>
<circle cx="207" cy="83" r="14" fill="none" stroke="#4a423e" stroke-width="1.6"/><path d="M212.5 83l-8.5-5v10z" fill="#a09589"/>
<path d="M86.700 63.900V55.100H115.200V63.200H143.700V54" fill="none" stroke="#a09589" stroke-width="2.2"/>
<path d="M85.600 79.700L143.700 68.700V79.700" fill="none" stroke="#a09589" stroke-width="2.2"/>
<path d="M85.600 92.800L102 87.800L128.300 97.200L144.300 91.700" fill="none" stroke="#a09589" stroke-width="2.2"/>
<path d="M85.600 107C96 98 106 100 115 106C124 112 134 114 144.300 106" fill="none" stroke="#a09589" stroke-width="2.2"/>
</svg>
<div class="t" style="left:36px;top:1732px;font-size:20px;line-height:26px;color:#a09589;letter-spacing:0.93px;-webkit-text-stroke:2px #a09589;">0 oct</div>
<div class="t" style="left:122px;top:1732px;font-size:20px;line-height:26px;color:#a09589;letter-spacing:0.69px;-webkit-text-stroke:2px #a09589;">0 st</div>
<div class="t" style="left:204px;top:1732px;font-size:20px;line-height:26px;color:#a09589;letter-spacing:1.19px;-webkit-text-stroke:2px #a09589;">0 ct</div>
<div style="left:258px;top:1428px;width:272px;height:166px;background:#3c3432;border-radius:4px;"></div>
<div style="left:258px;top:1598px;width:272px;height:167px;background:#3c3432;border-radius:4px;"></div>
<div class="t" style="left:306.5px;top:1444px;font-size:20px;line-height:26px;color:#c5bbae;letter-spacing:0.37px;-webkit-text-stroke:2px #c5bbae;">Freq 1</div>
<div class="t" style="left:420.5px;top:1444px;font-size:20px;line-height:26px;color:#c5bbae;letter-spacing:0.37px;-webkit-text-stroke:2px #c5bbae;">Freq 2</div>
<div class="t" style="left:320.5px;top:1549px;font-size:20px;line-height:26px;color:#c5bbae;letter-spacing:0.4px;-webkit-text-stroke:2px #c5bbae;">7.1</div>
<div class="t" style="left:434.5px;top:1549px;font-size:20px;line-height:26px;color:#c5bbae;letter-spacing:0.4px;-webkit-text-stroke:2px #c5bbae;">4.8</div>
<div class="t" style="left:306px;top:1616px;font-size:20px;line-height:26px;color:#c5bbae;letter-spacing:0.43px;-webkit-text-stroke:2px #c5bbae;">Shape</div>
<div class="t" style="left:428px;top:1616px;font-size:20px;line-height:26px;color:#c5bbae;letter-spacing:0.66px;-webkit-text-stroke:2px #c5bbae;">Tone</div>
<div class="t" style="left:320.5px;top:1720px;font-size:20px;line-height:26px;color:#c5bbae;letter-spacing:0.4px;-webkit-text-stroke:2px #c5bbae;">0.0</div>
<div class="t" style="left:434.5px;top:1720px;font-size:20px;line-height:26px;color:#c5bbae;letter-spacing:0.4px;-webkit-text-stroke:2px #c5bbae;">0.0</div>
<svg style="left:258px;top:1428px" width="272" height="340" viewBox="0 0 272 340" >
<path d="M58.72 113.27 A35 35 0 1 1 98.88 113.27" fill="none" stroke="#1b1714" stroke-width="4.2"/><path d="M58.72 113.27 A35 35 0 0 1 49.28 103.41" fill="none" stroke="#5bc2d8" stroke-width="4.2"/><path d="M72.9 88.36L50.76 102.47" stroke="#231e1c" stroke-width="4.2" stroke-linecap="butt"/>
<path d="M172.72 113.27 A35 35 0 1 1 212.88 113.27" fill="none" stroke="#1b1714" stroke-width="4.2"/><path d="M172.72 113.27 A35 35 0 0 1 167.2 108.47" fill="none" stroke="#5bc2d8" stroke-width="4.2"/><path d="M187.68 89.37L168.48 107.28" stroke="#231e1c" stroke-width="4.2" stroke-linecap="butt"/>
<path d="M58.72 285.37 A35 35 0 1 1 98.88 285.37" fill="none" stroke="#302a28" stroke-width="4.2"/><path d="M74.78 262.43L58.72 285.37" stroke="#302a28" stroke-width="4.2" stroke-linecap="butt"/>
<path d="M172.72 285.37 A35 35 0 1 1 212.88 285.37" fill="none" stroke="#302a28" stroke-width="4.2"/><path d="M188.78 262.43L172.72 285.37" stroke="#302a28" stroke-width="4.2" stroke-linecap="butt"/>
</svg>
<div style="left:534px;top:1428px;width:798px;height:337px;background:#1b1714;border-radius:4px;"></div>
<div style="left:534px;top:1466px;width:798px;height:2px;background:#3f3835;"></div>
<div style="left:534px;top:1632px;width:798px;height:2px;background:#3f3835;"></div>
<div style="left:932px;top:1468px;width:2px;height:297px;background:#3f3835;"></div>
<div style="left:620px;top:1434px;width:34px;height:26px;border:2px solid #5bc2d8;"></div>
<svg style="left:620px;top:1434px" width="34" height="26" viewBox="0 0 34 26" >
<path d="M6 13h5M23 13h5" stroke="#5bc2d8" stroke-width="2"/><rect x="11" y="9" width="12" height="8" fill="none" stroke="#5bc2d8" stroke-width="2"/>
</svg>
<div style="left:660px;top:1434px;width:118px;height:26px;background:#f4b465;"></div>
<div class="t" style="left:670.5px;top:1434px;font-size:20px;line-height:26px;color:#1b1714;letter-spacing:0.4px;-webkit-text-stroke:2px #1b1714;">Envelopes</div>
<div class="t" style="left:848.5px;top:1434.5px;font-size:20px;line-height:26px;color:#f4b465;letter-spacing:-0.72px;-webkit-text-stroke:0.9px #f4b465;">LFOs</div>
<div class="t" style="left:967px;top:1434.5px;font-size:20px;line-height:26px;color:#f4b465;letter-spacing:1.26px;-webkit-text-stroke:0.9px #f4b465;">Matrix</div>
<div class="t" style="left:1082.5px;top:1434.5px;font-size:20px;line-height:26px;color:#f4b465;letter-spacing:0.45px;-webkit-text-stroke:0.9px #f4b465;">MIDI</div>
<div class="t" style="left:1192px;top:1434.5px;font-size:20px;line-height:26px;color:#f4b465;letter-spacing:-0.45px;-webkit-text-stroke:0.9px #f4b465;">MPE</div>
<div class="t" style="left:544.5px;top:1476px;font-size:20px;line-height:26px;color:#c5bbae;letter-spacing:0.63px;-webkit-text-stroke:0.9px #c5bbae;">Amp</div>
<div style="left:600px;top:1484px;width:10px;height:10px;background:#3a3431;border-radius:5px;"></div>
<div class="t" style="left:658.5px;top:1476px;font-size:20px;line-height:26px;color:#8f867b;letter-spacing:0.17px;-webkit-text-stroke:2px #8f867b;">Delay</div>
<div class="t" style="left:720.5px;top:1476px;font-size:20px;line-height:26px;color:#f4b465;letter-spacing:0.27px;-webkit-text-stroke:0.9px #f4b465;">0.00 ms</div>
<div class="t" style="left:827px;top:1476px;font-size:20px;line-height:26px;color:#f4b465;letter-spacing:0.3px;-webkit-text-stroke:0.9px #f4b465;">None</div>
<svg style="left:906px;top:1484px" width="14" height="12" viewBox="0 0 14 12" >
<path d="M1 3h11l-5.500 7z" fill="#f4b465"/>
</svg>
<div class="t" style="left:944.5px;top:1476px;font-size:20px;line-height:26px;color:#c5bbae;letter-spacing:1.22px;-webkit-text-stroke:0.9px #c5bbae;">Modulation</div>
<div style="left:1066px;top:1484px;width:10px;height:10px;background:#3a3431;border-radius:5px;"></div>
<div class="t" style="left:1226.5px;top:1476px;font-size:20px;line-height:26px;color:#f4b465;letter-spacing:0.55px;-webkit-text-stroke:0.9px #f4b465;">None</div>
<svg style="left:1306px;top:1484px" width="14" height="12" viewBox="0 0 14 12" >
<path d="M1 3h11l-5.500 7z" fill="#f4b465"/>
</svg>
<svg style="left:534px;top:1500px" width="798" height="130" viewBox="0 0 798 130" >
<path d="M16.6 117 L34.3 24.5 L261.2 24.5 C262 70 268 84 272.9 93 L282.2 115.6" fill="none" stroke="#f4b465" stroke-width="2.4" stroke-linejoin="round"/>
<path d="M416 116.5 L436 27 C441 70 450 84 458.9 93 L478.2 116.5 L681.8 116.5" fill="none" stroke="#f4b465" stroke-width="2.4" stroke-linejoin="round"/>
<rect x="29.3" y="19" width="10" height="10" fill="none" stroke="#5bc2d8" stroke-width="1.8"/>
<path d="M51.5 24.5l5-5l5 5l-5 5z" fill="none" stroke="#e8708a" stroke-width="1.6"/>
<rect x="70.8" y="19" width="10" height="10" fill="none" stroke="#5bc2d8" stroke-width="1.8"/>
<path d="M21.6 71l5-5l5 5l-5 5z" fill="none" stroke="#e8708a" stroke-width="1.6"/>
<path d="M267.9 93l5-5l5 5l-5 5z" fill="none" stroke="#e8708a" stroke-width="1.6"/>
<rect x="277.2" y="110.6" width="10" height="10" fill="none" stroke="#5bc2d8" stroke-width="1.8"/>
<rect x="411" y="110.6" width="10" height="10" fill="none" stroke="#5bc2d8" stroke-width="1.8"/>
<rect x="431" y="19" width="10" height="10" fill="none" stroke="#5bc2d8" stroke-width="1.8"/>
<path d="M422 71l5-5l5 5l-5 5z" fill="none" stroke="#e8708a" stroke-width="1.6"/>
<path d="M453.9 93l5-5l5 5l-5 5z" fill="none" stroke="#e8708a" stroke-width="1.6"/>
<rect x="473.2" y="110.6" width="10" height="10" fill="none" stroke="#5bc2d8" stroke-width="1.8"/>
<path d="M668.2 116.5l5-5l5 5l-5 5z" fill="none" stroke="#e8708a" stroke-width="1.6"/>
<rect x="676.8" y="110.6" width="10" height="10" fill="none" stroke="#5bc2d8" stroke-width="1.8"/>
</svg>
<div class="t" style="left:545px;top:1640.5px;font-size:20px;line-height:26px;color:#8f867b;letter-spacing:0.67px;-webkit-text-stroke:2px #8f867b;">A</div>
<div class="t" style="left:636.5px;top:1640.5px;font-size:20px;line-height:26px;color:#8f867b;letter-spacing:0.72px;-webkit-text-stroke:2px #8f867b;">D</div>
<div class="t" style="left:728.6px;top:1640.5px;font-size:20px;line-height:26px;color:#8f867b;letter-spacing:0.67px;-webkit-text-stroke:2px #8f867b;">S</div>
<div class="t" style="left:820.5px;top:1640.5px;font-size:20px;line-height:26px;color:#8f867b;letter-spacing:0.72px;-webkit-text-stroke:2px #8f867b;">R</div>
<div class="t" style="left:548.6px;top:1666px;font-size:20px;line-height:26px;color:#f4b465;letter-spacing:0.27px;-webkit-text-stroke:0.9px #f4b465;">19.0 ms</div>
<div class="t" style="left:640.5px;top:1666px;font-size:20px;line-height:26px;color:#f4b465;letter-spacing:0.24px;-webkit-text-stroke:0.9px #f4b465;">600 ms</div>
<div class="t" style="left:732px;top:1666px;font-size:20px;line-height:26px;color:#f4b465;letter-spacing:0.36px;-webkit-text-stroke:0.9px #f4b465;">0.0 dB</div>
<div class="t" style="left:824.5px;top:1666px;font-size:20px;line-height:26px;color:#f4b465;letter-spacing:0.27px;-webkit-text-stroke:0.9px #f4b465;">50.0 ms</div>
<div class="t" style="left:545px;top:1704px;font-size:20px;line-height:26px;color:#8f867b;letter-spacing:0.29px;-webkit-text-stroke:2px #8f867b;">A Slope</div>
<div class="t" style="left:636.5px;top:1704px;font-size:20px;line-height:26px;color:#8f867b;letter-spacing:0.12px;-webkit-text-stroke:2px #8f867b;">D Slope</div>
<div class="t" style="left:820.5px;top:1704px;font-size:20px;line-height:26px;color:#8f867b;letter-spacing:-0.02px;-webkit-text-stroke:2px #8f867b;">R Slope</div>
<div class="t" style="left:548.6px;top:1730px;font-size:20px;line-height:26px;color:#e8708a;letter-spacing:-0.23px;-webkit-text-stroke:0.9px #e8708a;">0.0 %</div>
<div class="t" style="left:640.5px;top:1730px;font-size:20px;line-height:26px;color:#e8708a;letter-spacing:-0.4px;-webkit-text-stroke:0.9px #e8708a;">50 %</div>
<div class="t" style="left:824.5px;top:1730px;font-size:20px;line-height:26px;color:#e8708a;letter-spacing:-0.4px;-webkit-text-stroke:0.9px #e8708a;">50 %</div>
<div class="t" style="left:960px;top:1640.5px;font-size:20px;line-height:26px;color:#8f867b;letter-spacing:0.67px;-webkit-text-stroke:2px #8f867b;">A</div>
<div class="t" style="left:1052.4px;top:1640.5px;font-size:20px;line-height:26px;color:#8f867b;letter-spacing:0.72px;-webkit-text-stroke:2px #8f867b;">D</div>
<div class="t" style="left:1144px;top:1640.5px;font-size:20px;line-height:26px;color:#8f867b;letter-spacing:0.67px;-webkit-text-stroke:2px #8f867b;">S</div>
<div class="t" style="left:1236px;top:1640.5px;font-size:20px;line-height:26px;color:#8f867b;letter-spacing:0.72px;-webkit-text-stroke:2px #8f867b;">R</div>
<div class="t" style="left:964.3px;top:1666px;font-size:20px;line-height:26px;color:#f4b465;letter-spacing:0.27px;-webkit-text-stroke:0.9px #f4b465;">28.9 ms</div>
<div class="t" style="left:1056.4px;top:1666px;font-size:20px;line-height:26px;color:#f4b465;letter-spacing:0.24px;-webkit-text-stroke:0.9px #f4b465;">600 ms</div>
<div class="t" style="left:1148px;top:1666px;font-size:20px;line-height:26px;color:#f4b465;letter-spacing:-0.03px;-webkit-text-stroke:0.9px #f4b465;">0.0 %</div>
<div class="t" style="left:1240.5px;top:1666px;font-size:20px;line-height:26px;color:#f4b465;letter-spacing:0.27px;-webkit-text-stroke:0.9px #f4b465;">50.0 ms</div>
<div style="left:943px;top:1713px;width:9px;height:9px;border:1.5px solid #8f867b;"></div>
<div class="t" style="left:960px;top:1704px;font-size:20px;line-height:26px;color:#8f867b;letter-spacing:1.19px;-webkit-text-stroke:2px #8f867b;">Initial</div>
<div class="t" style="left:1052.4px;top:1704px;font-size:20px;line-height:26px;color:#8f867b;letter-spacing:0.1px;-webkit-text-stroke:2px #8f867b;">Peak</div>
<div class="t" style="left:1236px;top:1704px;font-size:20px;line-height:26px;color:#8f867b;letter-spacing:0.53px;-webkit-text-stroke:2px #8f867b;">Final</div>
<div class="t" style="left:964.3px;top:1730px;font-size:20px;line-height:26px;color:#f4b465;letter-spacing:-0.03px;-webkit-text-stroke:0.9px #f4b465;">0.0 %</div>
<div class="t" style="left:1056.4px;top:1730px;font-size:20px;line-height:26px;color:#f4b465;letter-spacing:-0.14px;-webkit-text-stroke:0.9px #f4b465;">100 %</div>
<div class="t" style="left:1240.5px;top:1730px;font-size:20px;line-height:26px;color:#f4b465;letter-spacing:-0.03px;-webkit-text-stroke:0.9px #f4b465;">0.0 %</div>
<div style="left:1336px;top:1428px;width:230px;height:166px;background:#3c3432;border-radius:4px;"></div>
<div style="left:1344px;top:1436px;width:26px;height:26px;background:#5bc2d8;border:2px solid #1b1714;"></div>
<div class="t" style="left:1350px;top:1436px;font-size:20px;line-height:26px;color:#111;letter-spacing:0.67px;-webkit-text-stroke:2px #111;">A</div>
<div style="left:1378px;top:1436px;width:180px;height:26px;background:#272220;border:2px solid #181412;"></div>
<div class="t" style="left:1383px;top:1436px;font-size:20px;line-height:26px;color:#c5bbae;letter-spacing:1.21px;-webkit-text-stroke:2px #c5bbae;">Filther</div>
<svg style="left:1536px;top:1436px" width="20" height="26" viewBox="0 0 20 26" >
<path d="M2 8h13l-6.5 10z" fill="#bfb4a7"/>
</svg>
<div class="t" style="left:1497.33px;top:1470px;font-size:20px;line-height:26px;color:#c5bbae;letter-spacing:0.78px;-webkit-text-stroke:2px #c5bbae;">Q</div>
<div style="left:1466px;top:1496px;width:78px;height:26px;background:#272220;border:2px solid #181412;"></div>
<div style="left:1468px;top:1498px;width:36px;height:22px;background:#2f7088;"></div>
<div class="t" style="left:1484px;top:1496px;font-size:20px;line-height:26px;color:#c5bbae;letter-spacing:0.27px;-webkit-text-stroke:2px #c5bbae;">47.7</div>
<div class="t" style="left:1480.5px;top:1528px;font-size:20px;line-height:26px;color:#c5bbae;letter-spacing:0.67px;-webkit-text-stroke:2px #c5bbae;">Drive</div>
<div style="left:1466px;top:1554px;width:78px;height:26px;background:#272220;border:2px solid #181412;"></div>
<div class="t" style="left:1489.5px;top:1554px;font-size:20px;line-height:26px;color:#c5bbae;letter-spacing:0.4px;-webkit-text-stroke:2px #c5bbae;">0.0</div>
<div class="t" style="left:1366.5px;top:1552px;font-size:20px;line-height:26px;color:#c5bbae;letter-spacing:0.11px;-webkit-text-stroke:2px #c5bbae;">262 Hz</div>
<div style="left:1336px;top:1598px;width:230px;height:167px;background:#3c3432;border-radius:4px;"></div>
<div style="left:1344px;top:1606px;width:26px;height:26px;background:#958a7f;border:2px solid #1b1714;"></div>
<div class="t" style="left:1350px;top:1606px;font-size:20px;line-height:26px;color:#4c4441;letter-spacing:0.67px;-webkit-text-stroke:2px #4c4441;">B</div>
<div style="left:1378px;top:1606px;width:180px;height:26px;background:#272220;border:2px solid #181412;"></div>
<div class="t" style="left:1383px;top:1606px;font-size:20px;line-height:26px;color:#c5bbae;letter-spacing:-0.27px;-webkit-text-stroke:2px #c5bbae;">SVF 12dB</div>
<svg style="left:1536px;top:1606px" width="20" height="26" viewBox="0 0 20 26" >
<path d="M2 8h13l-6.5 10z" fill="#bfb4a7"/>
</svg>
<div class="t" style="left:1497.33px;top:1642px;font-size:20px;line-height:26px;color:#c5bbae;letter-spacing:0.78px;-webkit-text-stroke:2px #c5bbae;">Q</div>
<div style="left:1466px;top:1668px;width:78px;height:26px;background:#272220;border:2px solid #181412;"></div>
<div class="t" style="left:1489.5px;top:1668px;font-size:20px;line-height:26px;color:#c5bbae;letter-spacing:0.4px;-webkit-text-stroke:2px #c5bbae;">0.0</div>
<div class="t" style="left:1468.5px;top:1700px;font-size:20px;line-height:26px;color:#c5bbae;letter-spacing:0.1px;-webkit-text-stroke:2px #c5bbae;">L-B-H-N</div>
<div style="left:1466px;top:1726px;width:78px;height:26px;background:#272220;border:2px solid #181412;"></div>
<div class="t" style="left:1489.5px;top:1726px;font-size:20px;line-height:26px;color:#c5bbae;letter-spacing:0.4px;-webkit-text-stroke:2px #c5bbae;">0.0</div>
<div class="t" style="left:1357.5px;top:1724px;font-size:20px;line-height:26px;color:#c5bbae;letter-spacing:0.38px;-webkit-text-stroke:2px #c5bbae;">20.5 kHz</div>
<svg style="left:1336px;top:1428px" width="230" height="340" viewBox="0 0 230 340" >
<path d="M42.82 116.47 A35 35 0 1 1 82.98 116.47" fill="none" stroke="#1b1714" stroke-width="4.2"/><path d="M42.82 116.47 A35 35 0 0 1 42.82 59.13" fill="none" stroke="#5bc2d8" stroke-width="4.2"/><path d="M59.89 83.5L43.83 60.56" stroke="#1b1714" stroke-width="4.2" stroke-linecap="butt"/>
<path d="M42.82 290.17 A35 35 0 1 1 82.98 290.17" fill="none" stroke="#81786f" stroke-width="4.2"/><path d="M65.91 265.8L82.98 290.17" stroke="#231e1c" stroke-width="4.2" stroke-linecap="butt"/>
</svg>
<div style="left:1570px;top:1428px;width:166px;height:166px;background:#3c3432;border-radius:4px;"></div>
<div style="left:1578px;top:1436px;width:74px;height:26px;background:#272220;border:2px solid #181412;"></div>
<div class="t" style="left:1607.42px;top:1436px;font-size:20px;line-height:26px;color:#c5bbae;letter-spacing:0.72px;-webkit-text-stroke:2px #c5bbae;">C</div>
<div class="t" style="left:1592px;top:1476px;font-size:20px;line-height:26px;color:#c5bbae;letter-spacing:0.66px;-webkit-text-stroke:2px #c5bbae;">Tone</div>
<div class="t" style="left:1592.5px;top:1560px;font-size:20px;line-height:26px;color:#c5bbae;letter-spacing:0.52px;-webkit-text-stroke:2px #c5bbae;">0.00</div>
<div class="t" style="left:1660px;top:1560px;font-size:20px;line-height:26px;color:#c5bbae;letter-spacing:0.22px;-webkit-text-stroke:2px #c5bbae;">-3.0 dB</div>
<div style="left:1684px;top:1438px;width:8px;height:122px;background:#1b1714;"></div>
<div style="left:1694px;top:1438px;width:8px;height:122px;background:#1b1714;"></div>
<div style="left:1684px;top:1547px;width:8px;height:12px;background:#5bc2d8;"></div>
<div style="left:1694px;top:1547px;width:8px;height:12px;background:#5bc2d8;"></div>
<svg style="left:1570px;top:1428px" width="166" height="166" viewBox="0 0 166 166" >
<path d="M30.46 131.48 A25 25 0 1 1 59.14 131.48" fill="none" stroke="#1b1714" stroke-width="4"/><path d="M44.8 111L44.8 84.75" stroke="#1b1714" stroke-width="4" stroke-linecap="butt"/>
<path d="M38 74.5h14l-7 7z" fill="#1b1714"/>
<path d="M153 45v19l-18-9.500z" fill="#3c3432" stroke="#8f867b" stroke-width="1.6"/>
</svg>
<div style="left:1570px;top:1598px;width:166px;height:167px;background:#3c3432;border-radius:4px;"></div>
<div style="left:1578px;top:1606px;width:74px;height:26px;background:#272220;border:2px solid #181412;"></div>
<div class="t" style="left:1607.42px;top:1606px;font-size:20px;line-height:26px;color:#c5bbae;letter-spacing:0.72px;-webkit-text-stroke:2px #c5bbae;">C</div>
<div class="t" style="left:1592px;top:1648px;font-size:20px;line-height:26px;color:#c5bbae;letter-spacing:0.66px;-webkit-text-stroke:2px #c5bbae;">Tone</div>
<div class="t" style="left:1592.5px;top:1732px;font-size:20px;line-height:26px;color:#c5bbae;letter-spacing:0.52px;-webkit-text-stroke:2px #c5bbae;">0.00</div>
<div class="t" style="left:1660px;top:1732px;font-size:20px;line-height:26px;color:#c5bbae;letter-spacing:0.22px;-webkit-text-stroke:2px #c5bbae;">-3.0 dB</div>
<div style="left:1684px;top:1608px;width:8px;height:122px;background:#1b1714;"></div>
<div style="left:1694px;top:1608px;width:8px;height:122px;background:#1b1714;"></div>
<svg style="left:1570px;top:1598px" width="166" height="167" viewBox="0 0 166 167" >
<path d="M30.46 133.48 A25 25 0 1 1 59.14 133.48" fill="none" stroke="#302a28" stroke-width="4"/><path d="M44.8 113L44.8 86.75" stroke="#302a28" stroke-width="4" stroke-linecap="butt"/>
<path d="M38 76.5h14l-7 7z" fill="#302a28"/>
<path d="M153 45v19l-18-9.500z" fill="#3c3432" stroke="#8f867b" stroke-width="1.6"/>
</svg>
<div style="left:1740px;top:1428px;width:114px;height:337px;background:#3c3432;border-radius:4px;"></div>
<div style="left:1748px;top:1437px;width:98px;height:25px;background:#f4b465;border:2px solid #1b1714;"></div>
<div class="t" style="left:1770px;top:1436.5px;font-size:20px;line-height:26px;color:#111;letter-spacing:0.99px;-webkit-text-stroke:2px #111;">Mono</div>
<div style="left:1748px;top:1468px;width:98px;height:26px;background:#f4b465;border:2px solid #1b1714;"></div>
<div class="t" style="left:1764.5px;top:1468px;font-size:20px;line-height:26px;color:#111;letter-spacing:0.64px;-webkit-text-stroke:2px #111;">Legato</div>
<div class="t" style="left:1748.5px;top:1500px;font-size:20px;line-height:26px;color:#c5bbae;letter-spacing:0.59px;-webkit-text-stroke:0.9px #c5bbae;">Spread</div>
<div style="left:1748px;top:1526px;width:98px;height:26px;background:#272220;border:2px solid #181412;"></div>
<div class="t" style="left:1771.5px;top:1526px;font-size:20px;line-height:26px;color:#c5bbae;letter-spacing:-0.03px;-webkit-text-stroke:2px #c5bbae;">0.0 %</div>
<div class="t" style="left:1748.5px;top:1558px;font-size:20px;line-height:26px;color:#c5bbae;letter-spacing:0.8px;-webkit-text-stroke:0.9px #c5bbae;">Stack</div>
<div style="left:1748px;top:1584px;width:98px;height:26px;background:#272220;border:2px solid #181412;"></div>
<div class="t" style="left:1753px;top:1584px;font-size:20px;line-height:26px;color:#c5bbae;letter-spacing:1.56px;-webkit-text-stroke:2px #c5bbae;">Off</div>
<svg style="left:1824px;top:1584px" width="20" height="26" viewBox="0 0 20 26" >
<path d="M2 8h13l-6.5 10z" fill="#bfb4a7"/>
</svg>
<div style="left:1746px;top:1618px;width:102px;height:2px;background:#4c4441;"></div>
<div class="t" style="left:1748.5px;top:1624px;font-size:20px;line-height:26px;color:#c5bbae;letter-spacing:0.67px;-webkit-text-stroke:0.9px #c5bbae;">Drive</div>
<div style="left:1748px;top:1650px;width:98px;height:26px;background:#272220;border:2px solid #181412;"></div>
<div style="left:1750px;top:1652px;width:86px;height:22px;background:#2f7088;"></div>
<div class="t" style="left:1773.5px;top:1650px;font-size:20px;line-height:26px;color:#c5bbae;letter-spacing:-0.15px;-webkit-text-stroke:2px #c5bbae;">91 %</div>
<div class="t" style="left:1750px;top:1684px;font-size:20px;line-height:26px;color:#c5bbae;letter-spacing:0.72px;-webkit-text-stroke:0.9px #c5bbae;">Volume</div>
<svg style="left:1740px;top:1700px" width="114" height="66" viewBox="0 0 114 66" >
<path d="M18.96 47.04 A17.5 17.5 0 1 1 46.23 29.66" fill="none" stroke="#1b1714" stroke-width="4"/><path d="M18.96 47.04 A17.5 17.5 0 0 1 34.99 16.26" fill="none" stroke="#5bc2d8" stroke-width="4"/><path d="M29 32.7L34.99 16.26" stroke="#1b1714" stroke-width="4" stroke-linecap="butt"/>
</svg>
<div class="t" style="left:1776.6px;top:1736px;font-size:20px;line-height:26px;color:#c5bbae;letter-spacing:0.22px;-webkit-text-stroke:2px #c5bbae;">-0.4 dB</div>
<div style="left:1862px;top:1475px;width:4px;height:214px;background:#1f1b19;"></div>
<div style="left:1862px;top:1496px;width:4px;height:2px;background:#3c3432;"></div>
<div style="left:1862px;top:1611px;width:4px;height:78px;background:#72f25f;"></div>
<div style="left:1862px;top:1544px;width:4px;height:2px;background:#e8e34a;"></div>
<div style="left:1868px;top:1475px;width:4px;height:214px;background:#1f1b19;"></div>
<div style="left:1868px;top:1496px;width:4px;height:2px;background:#3c3432;"></div>
<div style="left:1868px;top:1611px;width:4px;height:78px;background:#72f25f;"></div>
<div style="left:1868px;top:1544px;width:4px;height:2px;background:#e8e34a;"></div>
<div style="left:2334px;top:1475px;width:4px;height:214px;background:#1f1b19;"></div>
<div style="left:2334px;top:1496px;width:4px;height:2px;background:#3c3432;"></div>
<div style="left:2334px;top:1584px;width:4px;height:105px;background:#72f25f;"></div>
<div style="left:2334px;top:1520px;width:4px;height:2px;background:#f4b465;"></div>
<div style="left:2340px;top:1475px;width:4px;height:214px;background:#1f1b19;"></div>
<div style="left:2340px;top:1496px;width:4px;height:2px;background:#3c3432;"></div>
<div style="left:2340px;top:1584px;width:4px;height:105px;background:#72f25f;"></div>
<div style="left:2340px;top:1520px;width:4px;height:2px;background:#f4b465;"></div>
<div style="left:1876px;top:1394px;width:454px;height:376px;background:#3c3432;border-radius:6px;"></div>
<div style="left:1876px;top:1394px;width:454px;height:34px;background:#4c4441;border-radius:6px 6px 0 0;"></div>
<svg style="left:1876px;top:1394px" width="454" height="34" viewBox="0 0 454 34" >
<circle cx="19" cy="17" r="12" fill="#f4b465" stroke="#1b1714" stroke-width="2"/>
<circle cx="53" cy="17" r="12" fill="#231e1c" stroke="#1b1714" stroke-width="2"/><path d="M45.5 12h15l-7.5 13z" fill="#bfb4a7"/>
<circle cx="402.6" cy="17" r="12" fill="#231e1c" stroke="#1b1714" stroke-width="2"/>
<circle cx="435" cy="17" r="12" fill="#231e1c" stroke="#1b1714" stroke-width="2"/>
<g transform="translate(-1384.4,0)"><path d="M1781 17a6 6 0 0 1 10.5-4" fill="none" stroke="#bfb4a7" stroke-width="2"/><path d="M1793 17a6 6 0 0 1-10.5 4" fill="none" stroke="#bfb4a7" stroke-width="2"/><path d="M1789 9.5l4.5 4.5l-5.5 0.5z M1785 24.5l-4.5-4.5l5.5-0.5z" fill="#bfb4a7"/></g>
<g transform="translate(-1383.5,0)"><path d="M1812.5 11h9l3 3v9h-12z" fill="#bfb4a7"/><rect x="1815" y="11" width="5" height="4" fill="#231e1c"/></g>
</svg>
<div class="t" style="left:1950.5px;top:1398px;font-size:20px;line-height:26px;color:#c5bbae;letter-spacing:0.68px;font-weight:700;">Saturator</div>
<div style="left:1884px;top:1436px;width:438px;height:218px;background:#1b1714;border-radius:4px;"></div>
<div style="left:1892px;top:1444px;width:210px;height:26px;background:#5bc2d8;"></div>
<div class="t" style="left:1897px;top:1444px;font-size:20px;line-height:26px;color:#111;letter-spacing:0.23px;-webkit-text-stroke:2px #111;">Bass Shaper</div>
<svg style="left:2083px;top:1444px" width="20" height="26" viewBox="0 0 20 26" >
<path d="M2 8h14l-7 11z" fill="#111"/>
</svg>
<div class="t" style="left:2135px;top:1444px;font-size:20px;line-height:26px;color:#8f867b;letter-spacing:0.79px;-webkit-text-stroke:2px #8f867b;">Threshold</div>
<div class="t" style="left:2242.5px;top:1444px;font-size:20px;line-height:26px;color:#5bc2d8;letter-spacing:0.35px;-webkit-text-stroke:2px #5bc2d8;">-50 dB</div>
<div style="left:1892px;top:1478px;width:422px;height:134px;border:2px solid #3f3835;"></div>
<div style="left:1894px;top:1544px;width:418px;height:2px;background:#3f3835;"></div>
<div style="left:2100px;top:1480px;width:2px;height:130px;background:#1f3a3f;"></div>
<div style="left:2102px;top:1480px;width:2px;height:130px;background:#4a4744;"></div>
<svg style="left:1892px;top:1478px" width="422" height="134" viewBox="0 0 422 134" >
<path d="M2 108.5C90 103 150 92 211 65.500C270 41 330 30 419 25.500" fill="none" stroke="#5bc2d8" stroke-width="2.6"/>
</svg>
<div class="t" style="left:1921px;top:1620.5px;font-size:20px;line-height:26px;color:#5bc2d8;letter-spacing:0.2px;-webkit-text-stroke:2px #5bc2d8;">No Clip</div>
<svg style="left:2016px;top:1628px" width="14" height="12" viewBox="0 0 14 12" >
<path d="M1 3h11l-5.500 7z" fill="#5bc2d8"/>
</svg>
<div style="left:2062px;top:1620px;width:82px;height:26px;border:2px solid #f4b465;"></div>
<div class="t" style="left:2077px;top:1620px;font-size:20px;line-height:26px;color:#f4b465;letter-spacing:0.84px;-webkit-text-stroke:2px #f4b465;">Color</div>
<div class="t" style="left:2169px;top:1620.5px;font-size:20px;line-height:26px;color:#8f867b;letter-spacing:0.27px;-webkit-text-stroke:2px #8f867b;">Amt Lo</div>
<div class="t" style="left:2244.5px;top:1620.5px;font-size:20px;line-height:26px;color:#8f867b;letter-spacing:-0.03px;-webkit-text-stroke:2px #8f867b;">0.0 %</div>
<div class="t" style="left:1942.5px;top:1662px;font-size:20px;line-height:26px;color:#c5bbae;letter-spacing:0.67px;-webkit-text-stroke:0.9px #c5bbae;">Drive</div>
<div class="t" style="left:2068.5px;top:1662px;font-size:20px;line-height:26px;color:#c5bbae;letter-spacing:1.49px;-webkit-text-stroke:0.9px #c5bbae;">Output</div>
<div class="t" style="left:2198.5px;top:1662px;font-size:20px;line-height:26px;color:#c5bbae;letter-spacing:1.45px;-webkit-text-stroke:0.9px #c5bbae;">Dry/Wet</div>
<div class="t" style="left:1936.5px;top:1734px;font-size:20px;line-height:26px;color:#c5bbae;letter-spacing:0.2px;-webkit-text-stroke:2px #c5bbae;">9.1 dB</div>
<div class="t" style="left:2072.5px;top:1734px;font-size:20px;line-height:26px;color:#c5bbae;letter-spacing:0.2px;-webkit-text-stroke:2px #c5bbae;">0.0 dB</div>
<div class="t" style="left:2210.5px;top:1734px;font-size:20px;line-height:26px;color:#c5bbae;letter-spacing:-0.14px;-webkit-text-stroke:2px #c5bbae;">100 %</div>
<svg style="left:1876px;top:1680px" width="454" height="70" viewBox="0 0 454 70" >
<path d="M77.03 52.46 A24 24 0 1 1 104.57 52.46" fill="none" stroke="#1b1714" stroke-width="4.2"/><path d="M77.03 52.46 A24 24 0 1 1 105.24 13.63" fill="none" stroke="#5bc2d8" stroke-width="4.2"/><path d="M90.8 32.8L105.24 13.63" stroke="#1b1714" stroke-width="4.2" stroke-linecap="butt"/>
<path d="M213.23 52.46 A24 24 0 1 1 240.77 52.46" fill="none" stroke="#5bc2d8" stroke-width="4.2"/><path d="M227 32.8L239 53.58" stroke="#1b1714" stroke-width="4.2" stroke-linecap="butt"/>
<path d="M349.63 52.46 A24 24 0 1 1 377.17 52.46" fill="none" stroke="#5bc2d8" stroke-width="4.2"/><path d="M363.4 32.8L375.4 53.58" stroke="#1b1714" stroke-width="4.2" stroke-linecap="butt"/>
</svg>
<div style="left:2348px;top:1394px;width:660px;height:376px;background:#3c3432;border-radius:6px;"></div>
<div class="t" style="left:2560.5px;top:1568px;font-size:20px;line-height:26px;color:#c5bbae;letter-spacing:0.82px;-webkit-text-stroke:2px #c5bbae;">Drop Audio Effects Here</div>
</div></div>
<div style="left:2948px;top:1802px;width:4px;height:18px;background:#4c4440;"></div>
<div style="left:2956px;top:1794px;width:4px;height:26px;background:#4c4440;"></div>
<div style="left:2964px;top:1804px;width:4px;height:16px;background:#4c4440;"></div>
<div style="left:2972px;top:1798px;width:4px;height:22px;background:#4c4440;"></div>
<svg style="left:2986px;top:1798px" width="18" height="16" viewBox="0 0 18 16" >
<path d="M2 4h14l-7 10z" fill="#4c4440"/>
</svg>
</div></body></html>
